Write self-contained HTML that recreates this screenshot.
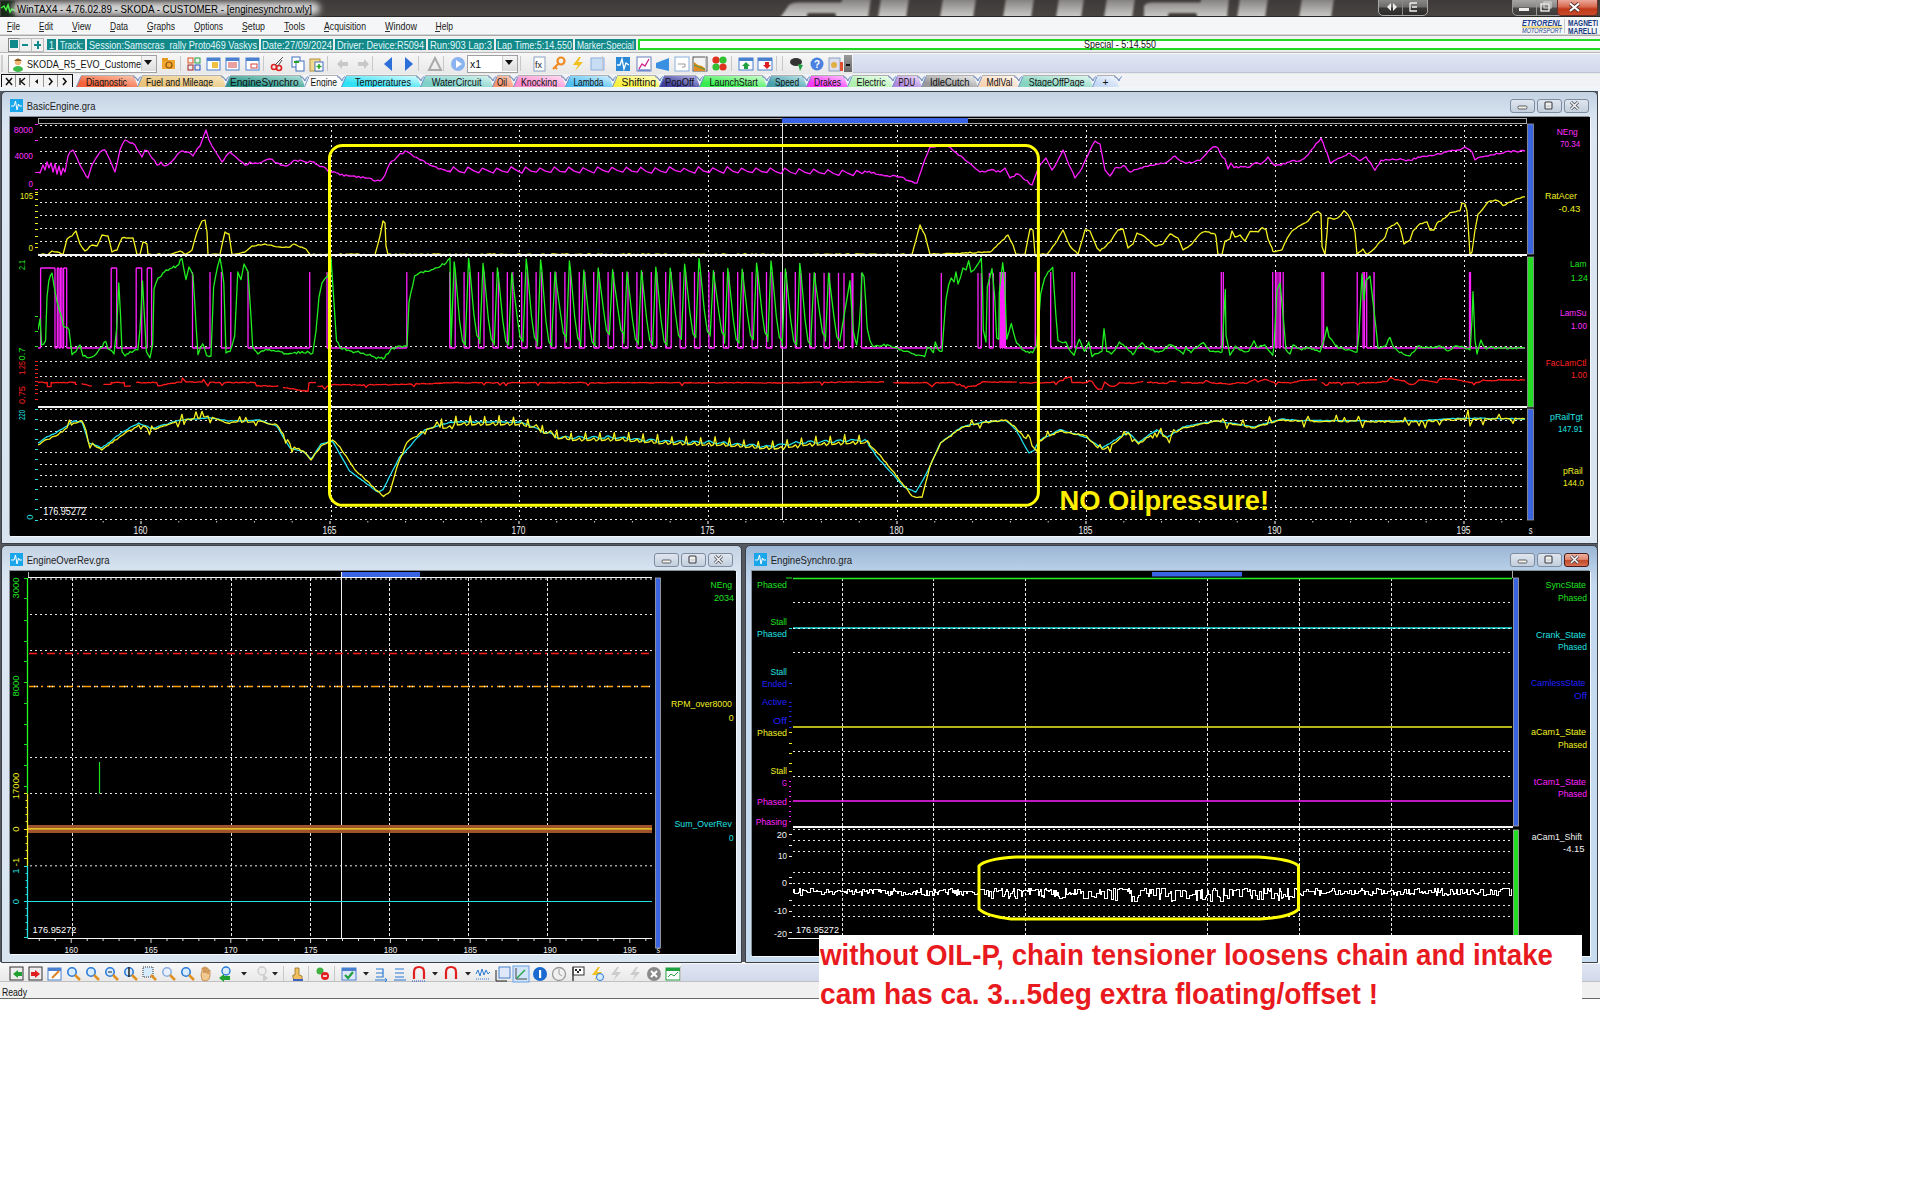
<!DOCTYPE html><html><head><meta charset="utf-8"><style>
html,body{margin:0;padding:0;background:#fff;width:1920px;height:1200px;overflow:hidden;}
body{position:relative;font-family:"Liberation Sans",sans-serif;}
.t{position:absolute;white-space:nowrap;line-height:1.15;}
.ann{position:absolute;white-space:nowrap;line-height:1.2;}
svg{overflow:visible;}
svg text{font-family:"Liberation Sans",sans-serif;}
</style></head><body>
<div style="position:absolute;left:0px;top:91px;width:1598px;height:871px;background:#55595f;"></div>
<div style="position:absolute;left:0px;top:0px;width:1600px;height:17px;background:linear-gradient(#3e3a39,#4a4644);"></div>
<svg style="position:absolute;left:0;top:0" width="1600" height="17"><defs><linearGradient id="lg" x1="0" y1="0" x2="0" y2="1"><stop offset="0" stop-color="#7c7a78"/><stop offset="0.5" stop-color="#a8a6a4"/><stop offset="1" stop-color="#cfcfcd"/></linearGradient><filter id="bl" x="-5%" y="-50%" width="110%" height="200%"><feGaussianBlur stdDeviation="1.3"/></filter></defs><g filter="url(#bl)" fill="url(#lg)"><path d="M780,18 L789,5 Q792,2.5 798,2.5 L841,2.5 L843,-2 L871,-2 L868,18 Z"/><path d="M881,-2 L909,-2 L906,18 L878,18 Z"/><path d="M943,-2 L976,-2 L973,18 L940,18 Z"/><path d="M1006,-2 L1034,-2 L1031,18 L1003,18 Z"/><path d="M1059,-2 L1084,-2 L1081,18 L1056,18 Z"/><path d="M1107,-2 L1135,-2 L1132,18 L1104,18 Z"/><path d="M1240,-2 L1268,-2 L1265,18 L1237,18 Z"/><path d="M1302,-2 L1334,-2 L1331,18 L1299,18 Z"/><path d="M1144,18 L1144,6 Q1146,2.5 1152,2.5 L1200,2.5 L1202,-2 L1229,-2 L1227,18 Z"/></g><g fill="#3f3b39" filter="url(#bl)"><rect x="807" y="13" width="29" height="6" rx="2"/><rect x="1168" y="13" width="29" height="6" rx="2"/></g></svg>
<div style="position:absolute;left:0px;top:16px;width:1600px;height:1px;background:#2a2827"></div>
<svg style="position:absolute;left:1px;top:1px" width="14" height="15"><rect width="14" height="15" fill="#1a2a1a"/><polyline points="0,7 3,5 5,9 7,4 9,11 11,8 14,10" fill="none" stroke="#3cf03c" stroke-width="1.5"/></svg>
<div style="position:absolute;left:12px;top:2px;width:308px;height:13px;border-radius:7px;background:rgba(238,238,238,0.85);filter:blur(3px);"></div>
<svg style="position:absolute;left:0;top:0" width="1" height="1"><text x="17" y="12.5" textLength="295" lengthAdjust="spacingAndGlyphs" fill="#000" font-size="11.5" font-weight="normal" font-family="Liberation Sans" >WinTAX4 - 4.76.02.89 - SKODA - CUSTOMER - [enginesynchro.wly]</text></svg>
<div style="position:absolute;left:1378px;top:-1px;width:48px;height:15px;border:1px solid #a8a8a8;border-radius:0 0 5px 5px;background:linear-gradient(#8a8886,#6e6c6a 45%,#3a3837 55%,#2e2c2b);"></div>
<div style="position:absolute;left:1402px;top:0px;width:1px;height:15px;background:#8a8a8a"></div>
<svg style="position:absolute;left:1384px;top:2px" width="40" height="11"><path d="M3,5 L7,1 L7,9 Z M13,5 L9,1 L9,9 Z" fill="#eee"/><path d="M26,1 H33 M26,1 V9 H33 M28,5 H33" stroke="#eee" stroke-width="1.3" fill="none"/></svg>
<div style="position:absolute;left:1512px;top:-1px;width:48px;height:15px;border:1px solid #9a9a9a;border-radius:0 0 0 5px;background:linear-gradient(#a8a6a4,#8a8886 45%,#4a4846 55%,#3e3c3b);"></div>
<div style="position:absolute;left:1536px;top:0px;width:1px;height:15px;background:#999"></div>
<div style="position:absolute;left:1557px;top:-1px;width:39px;height:15px;border:1px solid #6a3028;border-radius:0 0 4px 4px;background:linear-gradient(#eaa89a,#d86a50 45%,#c03818 60%,#c84a2a);"></div>
<svg style="position:absolute;left:1512px;top:0" width="88" height="15"><rect x="7" y="8" width="10" height="3" fill="#eee"/><rect x="29" y="4" width="8" height="7" fill="none" stroke="#eee" stroke-width="1.4"/><rect x="32" y="2" width="7" height="6" fill="none" stroke="#ddd" stroke-width="1"/><path d="M58,3.5 L67,11 M67,3.5 L58,11" stroke="#4a2a2a" stroke-width="3.6"/><path d="M58,3.5 L67,11 M67,3.5 L58,11" stroke="#fff" stroke-width="2.2"/></svg>
<div style="position:absolute;left:0px;top:17px;width:1600px;height:18px;background:#f5f6f7;border-bottom:1px solid #d6d6d6;box-sizing:border-box;"></div>
<svg style="position:absolute;left:0;top:0" width="1" height="1"><text x="7" y="30" textLength="13" lengthAdjust="spacingAndGlyphs" fill="#1a1a1a" font-size="11" font-weight="normal" font-family="Liberation Sans" >File</text></svg>
<div style="position:absolute;left:7px;top:31px;width:5px;height:1px;background:#333"></div>
<svg style="position:absolute;left:0;top:0" width="1" height="1"><text x="39" y="30" textLength="14" lengthAdjust="spacingAndGlyphs" fill="#1a1a1a" font-size="11" font-weight="normal" font-family="Liberation Sans" >Edit</text></svg>
<div style="position:absolute;left:39px;top:31px;width:5px;height:1px;background:#333"></div>
<svg style="position:absolute;left:0;top:0" width="1" height="1"><text x="72" y="30" textLength="19" lengthAdjust="spacingAndGlyphs" fill="#1a1a1a" font-size="11" font-weight="normal" font-family="Liberation Sans" >View</text></svg>
<div style="position:absolute;left:72px;top:31px;width:5px;height:1px;background:#333"></div>
<svg style="position:absolute;left:0;top:0" width="1" height="1"><text x="110" y="30" textLength="18" lengthAdjust="spacingAndGlyphs" fill="#1a1a1a" font-size="11" font-weight="normal" font-family="Liberation Sans" >Data</text></svg>
<div style="position:absolute;left:110px;top:31px;width:5px;height:1px;background:#333"></div>
<svg style="position:absolute;left:0;top:0" width="1" height="1"><text x="147" y="30" textLength="28" lengthAdjust="spacingAndGlyphs" fill="#1a1a1a" font-size="11" font-weight="normal" font-family="Liberation Sans" >Graphs</text></svg>
<div style="position:absolute;left:147px;top:31px;width:5px;height:1px;background:#333"></div>
<svg style="position:absolute;left:0;top:0" width="1" height="1"><text x="194" y="30" textLength="29" lengthAdjust="spacingAndGlyphs" fill="#1a1a1a" font-size="11" font-weight="normal" font-family="Liberation Sans" >Options</text></svg>
<div style="position:absolute;left:194px;top:31px;width:5px;height:1px;background:#333"></div>
<svg style="position:absolute;left:0;top:0" width="1" height="1"><text x="242" y="30" textLength="23" lengthAdjust="spacingAndGlyphs" fill="#1a1a1a" font-size="11" font-weight="normal" font-family="Liberation Sans" >Setup</text></svg>
<div style="position:absolute;left:242px;top:31px;width:5px;height:1px;background:#333"></div>
<svg style="position:absolute;left:0;top:0" width="1" height="1"><text x="284" y="30" textLength="21" lengthAdjust="spacingAndGlyphs" fill="#1a1a1a" font-size="11" font-weight="normal" font-family="Liberation Sans" >Tools</text></svg>
<div style="position:absolute;left:284px;top:31px;width:5px;height:1px;background:#333"></div>
<svg style="position:absolute;left:0;top:0" width="1" height="1"><text x="324" y="30" textLength="42" lengthAdjust="spacingAndGlyphs" fill="#1a1a1a" font-size="11" font-weight="normal" font-family="Liberation Sans" >Acquisition</text></svg>
<div style="position:absolute;left:324px;top:31px;width:5px;height:1px;background:#333"></div>
<svg style="position:absolute;left:0;top:0" width="1" height="1"><text x="385" y="30" textLength="32" lengthAdjust="spacingAndGlyphs" fill="#1a1a1a" font-size="11" font-weight="normal" font-family="Liberation Sans" >Window</text></svg>
<div style="position:absolute;left:385px;top:31px;width:5px;height:1px;background:#333"></div>
<svg style="position:absolute;left:0;top:0" width="1" height="1"><text x="435.5" y="30" textLength="17.5" lengthAdjust="spacingAndGlyphs" fill="#1a1a1a" font-size="11" font-weight="normal" font-family="Liberation Sans" >Help</text></svg>
<div style="position:absolute;left:435px;top:31px;width:5px;height:1px;background:#333"></div>
<svg style="position:absolute;left:1518px;top:18px;overflow:hidden" width="82" height="16"><text x="4" y="8" textLength="40" lengthAdjust="spacingAndGlyphs" font-family="Liberation Sans" font-weight="bold" font-style="italic" font-size="8.5" fill="#1d4090">ETRORENL</text><rect x="4" y="8.5" width="40" height="1" fill="#e8c020"/><text x="4" y="15" textLength="40" lengthAdjust="spacingAndGlyphs" font-family="Liberation Sans" font-style="italic" font-size="6.5" fill="#1d4090">MOTORSPORT</text><rect x="46" y="1" width="1" height="14" fill="#c8c8c8"/><text x="50" y="8" textLength="30" lengthAdjust="spacingAndGlyphs" font-family="Liberation Sans" font-weight="bold" font-size="8.5" fill="#153a80">MAGNETI</text><text x="50" y="15.5" textLength="29" lengthAdjust="spacingAndGlyphs" font-family="Liberation Sans" font-weight="bold" font-size="8.5" fill="#153a80">MARELLI</text></svg>
<div style="position:absolute;left:0px;top:35px;width:1600px;height:18px;background:linear-gradient(#f4f4f4,#e9e9e9);"></div>
<div style="position:absolute;left:0px;top:35px;width:1600px;height:1px;background:#a8a8a8"></div>
<div style="position:absolute;left:0px;top:52px;width:1600px;height:1px;background:#b8b8b8"></div>
<div style="position:absolute;left:8px;top:38px;width:10px;height:12px;border:1px solid #888;background:#f4f4f4;"></div>
<div style="position:absolute;left:10px;top:40px;width:8px;height:8px;background:#0e8a8a"></div>
<div style="position:absolute;left:19px;top:38px;width:11px;height:12px;border:1px solid #bbb;background:#f0f0f0;"></div>
<div style="position:absolute;left:31px;top:38px;width:11px;height:12px;border:1px solid #bbb;background:#f0f0f0;"></div>
<div style="position:absolute;left:22px;top:44px;width:6px;height:2px;background:#0e8a8a"></div>
<div style="position:absolute;left:34px;top:44px;width:7px;height:2px;background:#0e8a8a"></div>
<div style="position:absolute;left:37px;top:41px;width:2px;height:8px;background:#0e8a8a"></div>
<div style="position:absolute;left:47px;top:39px;width:9px;height:11px;background:#13898a"></div>
<svg style="position:absolute;left:0;top:0" width="1" height="1"><text x="49" y="48.5" textLength="5" lengthAdjust="spacingAndGlyphs" fill="#e0f8f8" font-size="10.5" font-weight="normal" font-family="Liberation Sans" xml:space="preserve">1</text></svg>
<div style="position:absolute;left:58px;top:39px;width:27px;height:11px;background:#13898a"></div>
<svg style="position:absolute;left:0;top:0" width="1" height="1"><text x="60" y="48.5" textLength="23" lengthAdjust="spacingAndGlyphs" fill="#e0f8f8" font-size="10.5" font-weight="normal" font-family="Liberation Sans" xml:space="preserve">Track:</text></svg>
<div style="position:absolute;left:87px;top:39px;width:172px;height:11px;background:#13898a"></div>
<svg style="position:absolute;left:0;top:0" width="1" height="1"><text x="89" y="48.5" textLength="168" lengthAdjust="spacingAndGlyphs" fill="#e0f8f8" font-size="10.5" font-weight="normal" font-family="Liberation Sans" xml:space="preserve">Session:Samscras  rally Proto469 Vaskys</text></svg>
<div style="position:absolute;left:261px;top:39px;width:72px;height:11px;background:#13898a"></div>
<svg style="position:absolute;left:0;top:0" width="1" height="1"><text x="262" y="48.5" textLength="70" lengthAdjust="spacingAndGlyphs" fill="#e0f8f8" font-size="10.5" font-weight="normal" font-family="Liberation Sans" xml:space="preserve">Date:27/09/2024</text></svg>
<div style="position:absolute;left:335px;top:39px;width:91px;height:11px;background:#13898a"></div>
<svg style="position:absolute;left:0;top:0" width="1" height="1"><text x="337" y="48.5" textLength="87" lengthAdjust="spacingAndGlyphs" fill="#e0f8f8" font-size="10.5" font-weight="normal" font-family="Liberation Sans" xml:space="preserve">Driver: Device:R5094</text></svg>
<div style="position:absolute;left:428px;top:39px;width:66px;height:11px;background:#13898a"></div>
<svg style="position:absolute;left:0;top:0" width="1" height="1"><text x="430" y="48.5" textLength="62" lengthAdjust="spacingAndGlyphs" fill="#e0f8f8" font-size="10.5" font-weight="normal" font-family="Liberation Sans" xml:space="preserve">Run:903 Lap:3</text></svg>
<div style="position:absolute;left:496px;top:39px;width:77px;height:11px;background:#13898a"></div>
<svg style="position:absolute;left:0;top:0" width="1" height="1"><text x="497" y="48.5" textLength="75" lengthAdjust="spacingAndGlyphs" fill="#e0f8f8" font-size="10.5" font-weight="normal" font-family="Liberation Sans" xml:space="preserve">Lap Time:5:14.550</text></svg>
<div style="position:absolute;left:575px;top:39px;width:61px;height:11px;background:#13898a"></div>
<svg style="position:absolute;left:0;top:0" width="1" height="1"><text x="577" y="48.5" textLength="57" lengthAdjust="spacingAndGlyphs" fill="#e0f8f8" font-size="10.5" font-weight="normal" font-family="Liberation Sans" xml:space="preserve">Marker:Special</text></svg>
<div style="position:absolute;left:638px;top:39px;width:962px;height:10px;border-top:2px solid #22d822;border-bottom:2px solid #22d822;border-left:2px solid #22d822;background:#fff;box-sizing:border-box;height:11px;"></div>
<svg style="position:absolute;left:0;top:0" width="1" height="1"><text x="1084" y="47.5" textLength="72" lengthAdjust="spacingAndGlyphs" fill="#111" font-size="10.5" font-weight="normal" font-family="Liberation Sans" >Special - 5:14.550</text></svg>
<div style="position:absolute;left:0px;top:53px;width:1600px;height:21px;background:linear-gradient(#f7f7f7,#e8e8e8);"></div>
<div style="position:absolute;left:853px;top:54px;width:747px;height:19px;background:linear-gradient(#dfe5f2,#d2d9ea);border-bottom:1px solid #bcc4d6;box-sizing:border-box;"></div>
<div style="position:absolute;left:1px;top:55px;width:2px;height:17px;background:#cfcfcf"></div>
<div style="position:absolute;left:8px;top:55px;width:147px;height:16px;border:1px solid #a0a0a0;background:#fff;"></div>
<div style="position:absolute;left:141px;top:56px;width:14px;height:15px;border-left:1px solid #ccc;background:linear-gradient(#f5f5f5,#ddd);"></div>
<svg style="position:absolute;left:143px;top:60px" width="10" height="6"><path d="M1,0 L9,0 L5,5 Z" fill="#111"/></svg>
<svg style="position:absolute;left:12px;top:57px" width="12" height="14"><circle cx="6" cy="5" r="3.2" fill="#f0b878"/><path d="M2,4 Q6,-1 10,4 Z" fill="#8a5a20"/><ellipse cx="6" cy="12" rx="5" ry="3" fill="#3cb84a"/></svg>
<svg style="position:absolute;left:0;top:0" width="1" height="1"><text x="27" y="68" textLength="114" lengthAdjust="spacingAndGlyphs" fill="#111" font-size="11" font-weight="normal" font-family="Liberation Sans" >SKODA_R5_EVO_Custome</text></svg>
<svg style="position:absolute;left:161px;top:56px" width="16" height="16"><rect x="1" y="4" width="13" height="9" fill="#f0a830"/><rect x="1" y="2" width="6" height="3" fill="#e89a20"/><circle cx="8" cy="9" r="3" fill="none" stroke="#905010" stroke-width="1.2"/></svg>
<svg style="position:absolute;left:187px;top:56px" width="16" height="16"><rect x="1" y="2" width="5" height="5" fill="none" stroke="#e05020"/><rect x="8" y="2" width="5" height="5" fill="none" stroke="#20a040"/><rect x="1" y="9" width="5" height="5" fill="none" stroke="#a02020"/><rect x="8" y="9" width="5" height="5" fill="none" stroke="#2050c0"/></svg>
<svg style="position:absolute;left:206px;top:56px" width="16" height="16"><rect x="1" y="2" width="13" height="12" fill="#fff" stroke="#4a80d0"/><rect x="1" y="2" width="13" height="3" fill="#4a80d0"/><rect x="6" y="6" width="6" height="6" fill="#f0c040"/></svg>
<svg style="position:absolute;left:225px;top:56px" width="16" height="16"><rect x="1" y="2" width="13" height="12" fill="#fff" stroke="#4a80d0"/><rect x="1" y="2" width="13" height="3" fill="#4a80d0"/><path d="M3,7 H12 M3,9 H12 M3,11 H12" stroke="#d04040"/></svg>
<svg style="position:absolute;left:245px;top:56px" width="16" height="16"><rect x="1" y="2" width="13" height="12" fill="#fff" stroke="#4a80d0"/><rect x="1" y="2" width="13" height="3" fill="#4a80d0"/><rect x="6" y="8" width="6" height="4" fill="none" stroke="#d04040"/></svg>
<svg style="position:absolute;left:270px;top:56px" width="16" height="16"><circle cx="4" cy="11" r="2.5" fill="none" stroke="#e02020" stroke-width="1.6"/><circle cx="9" cy="12" r="2.5" fill="none" stroke="#e02020" stroke-width="1.6"/><path d="M5,9 L13,1 M8,10 L12,4" stroke="#555"/></svg>
<svg style="position:absolute;left:290px;top:56px" width="16" height="16"><rect x="2" y="1" width="8" height="10" fill="#fff" stroke="#4070c0"/><rect x="6" y="5" width="8" height="10" fill="#fff" stroke="#4070c0"/><path d="M4,6 L9,6" stroke="#20a020" stroke-width="2"/></svg>
<svg style="position:absolute;left:309px;top:56px" width="16" height="16"><rect x="1" y="3" width="10" height="12" fill="#f0d890" stroke="#b09040"/><rect x="6" y="6" width="8" height="9" fill="#fff" stroke="#4070c0"/><path d="M10,8 V13 M7.5,10.5 H12.5" stroke="#20a020" stroke-width="1.5"/></svg>
<svg style="position:absolute;left:335px;top:56px" width="16" height="16"><path d="M2,8 L7,3 V6 H13 V10 H7 V13 Z" fill="#c8c8c8"/></svg>
<svg style="position:absolute;left:355px;top:56px" width="16" height="16"><path d="M14,8 L9,3 V6 H3 V10 H9 V13 Z" fill="#c8c8c8"/></svg>
<svg style="position:absolute;left:381px;top:56px" width="16" height="16"><path d="M3,8 L11,1 V15 Z" fill="#2b6fd8"/></svg>
<svg style="position:absolute;left:400px;top:56px" width="16" height="16"><path d="M13,8 L5,1 V15 Z" fill="#2b6fd8"/></svg>
<svg style="position:absolute;left:427px;top:56px" width="16" height="16"><path d="M8,2 L14,14 H2 Z" fill="none" stroke="#aaa" stroke-width="2"/></svg>
<svg style="position:absolute;left:450px;top:56px" width="16" height="16"><circle cx="8" cy="8" r="7" fill="#8ab4f0"/><path d="M6,4 L12,8 L6,12 Z" fill="#fff"/></svg>
<svg style="position:absolute;left:532px;top:56px" width="16" height="16"><rect x="2" y="1" width="11" height="14" fill="#fff" stroke="#8aa0c0"/><text x="3" y="12" font-size="9" font-family="Liberation Serif" fill="#222">fx</text></svg>
<svg style="position:absolute;left:551px;top:56px" width="16" height="16"><circle cx="10" cy="5" r="3.5" fill="none" stroke="#f08a20" stroke-width="2.2"/><path d="M8,7 L2,13 M4,11 L6,13" stroke="#f08a20" stroke-width="2"/></svg>
<svg style="position:absolute;left:570px;top:56px" width="16" height="16"><path d="M9,1 L3,9 H8 L5,15 L13,6 H8 L11,1 Z" fill="#f0c020"/></svg>
<svg style="position:absolute;left:590px;top:56px" width="16" height="16"><rect x="1" y="2" width="13" height="12" fill="#c8dcf4" stroke="#8ab0e0"/></svg>
<svg style="position:absolute;left:615px;top:56px" width="16" height="16"><rect x="1" y="1" width="14" height="14" fill="#2a8ad8"/><polyline points="2,9 5,9 7,3 9,13 11,7 14,9" fill="none" stroke="#fff" stroke-width="1.3"/></svg>
<svg style="position:absolute;left:636px;top:56px" width="16" height="16"><rect x="1" y="1" width="14" height="14" fill="#fff" stroke="#6a80c0"/><polyline points="3,13 6,8 9,10 13,3" fill="none" stroke="#d02090" stroke-width="1.3"/><path d="M2,14 H14" stroke="#3050c0"/></svg>
<svg style="position:absolute;left:655px;top:56px" width="16" height="16"><path d="M1,7 L14,2 V15 L1,12 Z" fill="#3a90e0"/></svg>
<svg style="position:absolute;left:674px;top:56px" width="16" height="16"><rect x="1" y="1" width="14" height="14" fill="#fff" stroke="#8ab0e0"/><path d="M4,8 H11 V11 H8" fill="none" stroke="#999"/></svg>
<svg style="position:absolute;left:692px;top:56px" width="16" height="16"><rect x="1" y="1" width="14" height="14" fill="#f4f4f4" stroke="#555"/><path d="M2,6 L6,9 L10,10 L14,13 V15 H2 Z" fill="#e08a20"/><path d="M2,9 L14,14" stroke="#40a040"/></svg>
<svg style="position:absolute;left:712px;top:56px" width="16" height="16"><circle cx="4" cy="4" r="3.6" fill="#e03020"/><circle cx="11" cy="4" r="3.6" fill="#30c030"/><circle cx="4" cy="11" r="3.6" fill="#30c030"/><circle cx="11" cy="11" r="3.6" fill="#e03020"/></svg>
<svg style="position:absolute;left:738px;top:56px" width="16" height="16"><rect x="1" y="2" width="14" height="12" fill="#fff" stroke="#4a80d0"/><rect x="1" y="2" width="14" height="3" fill="#4a80d0"/><path d="M8,6 L12,10 H10 V13 H6 V10 H4 Z" fill="#20a040"/></svg>
<svg style="position:absolute;left:757px;top:56px" width="16" height="16"><rect x="1" y="2" width="14" height="12" fill="#fff" stroke="#4a80d0"/><rect x="1" y="2" width="14" height="3" fill="#4a80d0"/><path d="M10,13 L6,9 H8 V6 H12 V9 H14 Z" fill="#e02020"/></svg>
<svg style="position:absolute;left:789px;top:56px" width="16" height="16"><ellipse cx="7" cy="6" rx="6" ry="4" fill="#333"/><path d="M9,8 L14,9 L11,15 Z" fill="#20a040"/></svg>
<svg style="position:absolute;left:809px;top:56px" width="16" height="16"><circle cx="8" cy="8" r="6.5" fill="#4a80e0"/><text x="5" y="12" font-size="10" font-family="Liberation Sans" font-weight="bold" fill="#fff">?</text></svg>
<svg style="position:absolute;left:828px;top:56px" width="16" height="16"><rect x="1" y="2" width="11" height="13" fill="#dde" stroke="#8aa0c0"/><circle cx="6" cy="9" r="3" fill="#e0b040"/><rect x="12" y="6" width="3" height="9" fill="#e05030"/></svg>
<div style="position:absolute;left:180px;top:56px;width:1px;height:15px;background:#c8c8c8"></div>
<div style="position:absolute;left:263px;top:56px;width:1px;height:15px;background:#c8c8c8"></div>
<div style="position:absolute;left:327px;top:56px;width:1px;height:15px;background:#c8c8c8"></div>
<div style="position:absolute;left:372px;top:56px;width:1px;height:15px;background:#c8c8c8"></div>
<div style="position:absolute;left:418px;top:56px;width:1px;height:15px;background:#c8c8c8"></div>
<div style="position:absolute;left:443px;top:56px;width:1px;height:15px;background:#c8c8c8"></div>
<div style="position:absolute;left:520px;top:56px;width:1px;height:15px;background:#c8c8c8"></div>
<div style="position:absolute;left:602px;top:56px;width:1px;height:15px;background:#c8c8c8"></div>
<div style="position:absolute;left:705px;top:56px;width:1px;height:15px;background:#c8c8c8"></div>
<div style="position:absolute;left:731px;top:56px;width:1px;height:15px;background:#c8c8c8"></div>
<div style="position:absolute;left:776px;top:56px;width:1px;height:15px;background:#c8c8c8"></div>
<div style="position:absolute;left:782px;top:56px;width:1px;height:15px;background:#c8c8c8"></div>
<div style="position:absolute;left:467px;top:55px;width:49px;height:16px;border:1px solid #a0a0a0;background:#fff;"></div>
<div style="position:absolute;left:502px;top:56px;width:14px;height:15px;background:linear-gradient(#f5f5f5,#ddd);border-left:1px solid #ccc;"></div>
<svg style="position:absolute;left:504px;top:60px" width="10" height="6"><path d="M1,0 L9,0 L5,5 Z" fill="#111"/></svg>
<svg style="position:absolute;left:0;top:0" width="1" height="1"><text x="470" y="68" textLength="11" lengthAdjust="spacingAndGlyphs" fill="#111" font-size="11" font-weight="normal" font-family="Liberation Sans" >x1</text></svg>
<div style="position:absolute;left:844px;top:55px;width:8px;height:17px;background:linear-gradient(#9a9a9a,#6a6a6a)"></div>
<div style="position:absolute;left:846px;top:64px;width:4px;height:2px;background:#111"></div>
<div style="position:absolute;left:0px;top:74px;width:1600px;height:17px;background:#f0f2f5;"></div>
<div style="position:absolute;left:1px;top:74px;width:70px;height:14px;border:1px solid #111;border-bottom:2px solid #111;background:#f4f4f4;"></div>
<div style="position:absolute;left:15px;top:75px;width:1px;height:14px;background:#999"></div>
<div style="position:absolute;left:29px;top:75px;width:1px;height:14px;background:#999"></div>
<div style="position:absolute;left:43px;top:75px;width:1px;height:14px;background:#999"></div>
<div style="position:absolute;left:57px;top:75px;width:1px;height:14px;background:#999"></div>
<svg style="position:absolute;left:2px;top:75px" width="70" height="14"><path d="M4,3 L10,10 M10,3 L4,10" stroke="#111" stroke-width="1.5"/><path d="M18,3 V10 M23,3 L19,6.5 L23,10" stroke="#111" stroke-width="1.4" fill="none"/><path d="M36,4 L33,6.5 L36,9 Z" fill="#111"/><path d="M47,3 L50,6.5 L47,10" stroke="#111" stroke-width="1.6" fill="none"/><path d="M61,3 L64,6.5 L61,10" stroke="#111" stroke-width="1.6" fill="none"/></svg>
<svg style="position:absolute;left:0;top:0" width="1600" height="100"><defs><linearGradient id="tg0" x1="0" x2="1" y1="1" y2="0"><stop offset="0" stop-color="#f4643c"/><stop offset="0.25" stop-color="#f4643c"/><stop offset="1" stop-color="#fcc8b0"/></linearGradient><linearGradient id="tg1" x1="0" x2="1" y1="1" y2="0"><stop offset="0" stop-color="#e8c47c"/><stop offset="0.25" stop-color="#e8c47c"/><stop offset="1" stop-color="#f8e8c0"/></linearGradient><linearGradient id="tg2" x1="0" x2="1" y1="1" y2="0"><stop offset="0" stop-color="#2a968a"/><stop offset="0.25" stop-color="#2a968a"/><stop offset="1" stop-color="#b4e4dc"/></linearGradient><linearGradient id="tg3" x1="0" x2="1" y1="1" y2="0"><stop offset="0" stop-color="#f8f8f8"/><stop offset="0.25" stop-color="#f8f8f8"/><stop offset="1" stop-color="#ffffff"/></linearGradient><linearGradient id="tg4" x1="0" x2="1" y1="1" y2="0"><stop offset="0" stop-color="#30e0f4"/><stop offset="0.25" stop-color="#30e0f4"/><stop offset="1" stop-color="#d8fcff"/></linearGradient><linearGradient id="tg5" x1="0" x2="1" y1="1" y2="0"><stop offset="0" stop-color="#7ed0c8"/><stop offset="0.25" stop-color="#7ed0c8"/><stop offset="1" stop-color="#d8f4f0"/></linearGradient><linearGradient id="tg6" x1="0" x2="1" y1="1" y2="0"><stop offset="0" stop-color="#f49470"/><stop offset="0.25" stop-color="#f49470"/><stop offset="1" stop-color="#fcd4c0"/></linearGradient><linearGradient id="tg7" x1="0" x2="1" y1="1" y2="0"><stop offset="0" stop-color="#fa8cd0"/><stop offset="0.25" stop-color="#fa8cd0"/><stop offset="1" stop-color="#ffe0f4"/></linearGradient><linearGradient id="tg8" x1="0" x2="1" y1="1" y2="0"><stop offset="0" stop-color="#50c0f4"/><stop offset="0.25" stop-color="#50c0f4"/><stop offset="1" stop-color="#d4f0ff"/></linearGradient><linearGradient id="tg9" x1="0" x2="1" y1="1" y2="0"><stop offset="0" stop-color="#f8f040"/><stop offset="0.25" stop-color="#f8f040"/><stop offset="1" stop-color="#ffffd0"/></linearGradient><linearGradient id="tg10" x1="0" x2="1" y1="1" y2="0"><stop offset="0" stop-color="#40409c"/><stop offset="0.25" stop-color="#40409c"/><stop offset="1" stop-color="#b8b8ec"/></linearGradient><linearGradient id="tg11" x1="0" x2="1" y1="1" y2="0"><stop offset="0" stop-color="#38ec50"/><stop offset="0.25" stop-color="#38ec50"/><stop offset="1" stop-color="#d4ffd4"/></linearGradient><linearGradient id="tg12" x1="0" x2="1" y1="1" y2="0"><stop offset="0" stop-color="#48a0ac"/><stop offset="0.25" stop-color="#48a0ac"/><stop offset="1" stop-color="#c4e8ec"/></linearGradient><linearGradient id="tg13" x1="0" x2="1" y1="1" y2="0"><stop offset="0" stop-color="#f438f4"/><stop offset="0.25" stop-color="#f438f4"/><stop offset="1" stop-color="#ffc8ff"/></linearGradient><linearGradient id="tg14" x1="0" x2="1" y1="1" y2="0"><stop offset="0" stop-color="#b0f0b0"/><stop offset="0.25" stop-color="#b0f0b0"/><stop offset="1" stop-color="#f0fff0"/></linearGradient><linearGradient id="tg15" x1="0" x2="1" y1="1" y2="0"><stop offset="0" stop-color="#b088dc"/><stop offset="0.25" stop-color="#b088dc"/><stop offset="1" stop-color="#f0e0fc"/></linearGradient><linearGradient id="tg16" x1="0" x2="1" y1="1" y2="0"><stop offset="0" stop-color="#989898"/><stop offset="0.25" stop-color="#989898"/><stop offset="1" stop-color="#f0f0f0"/></linearGradient><linearGradient id="tg17" x1="0" x2="1" y1="1" y2="0"><stop offset="0" stop-color="#f8d4b4"/><stop offset="0.25" stop-color="#f8d4b4"/><stop offset="1" stop-color="#fffaf4"/></linearGradient><linearGradient id="tg18" x1="0" x2="1" y1="1" y2="0"><stop offset="0" stop-color="#84d4c0"/><stop offset="0.25" stop-color="#84d4c0"/><stop offset="1" stop-color="#e4f8f0"/></linearGradient><linearGradient id="tg19" x1="0" x2="1" y1="1" y2="0"><stop offset="0" stop-color="#c4d8f4"/><stop offset="0.25" stop-color="#c4d8f4"/><stop offset="1" stop-color="#f4f8ff"/></linearGradient></defs><path d="M76,87 L81,76 L134,76 L138,87 Z" fill="url(#tg0)"/><path d="M81,75.5 L134,75.5 L138,80" stroke="#b0b0b0" stroke-width="1" fill="none"/><path d="M76.5,87 L81,76.5" stroke="#6a90c8" stroke-width="0.9" fill="none"/><path d="M133,76.5 Q136,77 138,81 M138,81 Q139,77 141,76.5" stroke="#5a80c0" stroke-width="0.9" fill="none"/><text x="86" y="86" textLength="41" lengthAdjust="spacingAndGlyphs" font-size="10.5" fill="#111" font-weight="normal">Diagnostic</text><path d="M137,87 L142,76 L222,76 L226,87 Z" fill="url(#tg1)"/><path d="M142,75.5 L222,75.5 L226,80" stroke="#b0b0b0" stroke-width="1" fill="none"/><path d="M137.5,87 L142,76.5" stroke="#6a90c8" stroke-width="0.9" fill="none"/><path d="M221,76.5 Q224,77 226,81 M226,81 Q227,77 229,76.5" stroke="#5a80c0" stroke-width="0.9" fill="none"/><text x="146" y="86" textLength="67" lengthAdjust="spacingAndGlyphs" font-size="10.5" fill="#111" font-weight="normal">Fuel and Mileage</text><path d="M225,87 L230,76 L301,76 L305,87 Z" fill="url(#tg2)"/><path d="M230,75.5 L301,75.5 L305,80" stroke="#b0b0b0" stroke-width="1" fill="none"/><path d="M225.5,87 L230,76.5" stroke="#6a90c8" stroke-width="0.9" fill="none"/><path d="M300,76.5 Q303,77 305,81 M305,81 Q306,77 308,76.5" stroke="#5a80c0" stroke-width="0.9" fill="none"/><text x="230" y="86" textLength="68.60000000000002" lengthAdjust="spacingAndGlyphs" font-size="10.5" fill="#111" font-weight="normal">EngineSynchro</text><path d="M304,87 L309,76 L338,76 L342,87 Z" fill="url(#tg3)"/><path d="M309,75.5 L338,75.5 L342,80" stroke="#b0b0b0" stroke-width="1" fill="none"/><path d="M304.5,87 L309,76.5" stroke="#6a90c8" stroke-width="0.9" fill="none"/><path d="M337,76.5 Q340,77 342,81 M342,81 Q343,77 345,76.5" stroke="#5a80c0" stroke-width="0.9" fill="none"/><text x="310.6" y="86" textLength="26.399999999999977" lengthAdjust="spacingAndGlyphs" font-size="10.5" fill="#111" font-weight="normal">Engine</text><path d="M341,87 L346,76 L417,76 L421,87 Z" fill="url(#tg4)"/><path d="M346,75.5 L417,75.5 L421,80" stroke="#b0b0b0" stroke-width="1" fill="none"/><path d="M341.5,87 L346,76.5" stroke="#6a90c8" stroke-width="0.9" fill="none"/><path d="M416,76.5 Q419,77 421,81 M421,81 Q422,77 424,76.5" stroke="#5a80c0" stroke-width="0.9" fill="none"/><text x="355" y="86" textLength="56" lengthAdjust="spacingAndGlyphs" font-size="10.5" fill="#111" font-weight="normal">Temperatures</text><path d="M420,87 L425,76 L489,76 L493,87 Z" fill="url(#tg5)"/><path d="M425,75.5 L489,75.5 L493,80" stroke="#b0b0b0" stroke-width="1" fill="none"/><path d="M420.5,87 L425,76.5" stroke="#6a90c8" stroke-width="0.9" fill="none"/><path d="M488,76.5 Q491,77 493,81 M493,81 Q494,77 496,76.5" stroke="#5a80c0" stroke-width="0.9" fill="none"/><text x="431.7" y="86" textLength="49.80000000000001" lengthAdjust="spacingAndGlyphs" font-size="10.5" fill="#111" font-weight="normal">WaterCircuit</text><path d="M492,87 L497,76 L510,76 L514,87 Z" fill="url(#tg6)"/><path d="M497,75.5 L510,75.5 L514,80" stroke="#b0b0b0" stroke-width="1" fill="none"/><path d="M492.5,87 L497,76.5" stroke="#6a90c8" stroke-width="0.9" fill="none"/><path d="M509,76.5 Q512,77 514,81 M514,81 Q515,77 517,76.5" stroke="#5a80c0" stroke-width="0.9" fill="none"/><text x="497" y="86" textLength="10" lengthAdjust="spacingAndGlyphs" font-size="10.5" fill="#111" font-weight="normal">Oil</text><path d="M513,87 L518,76 L562,76 L566,87 Z" fill="url(#tg7)"/><path d="M518,75.5 L562,75.5 L566,80" stroke="#b0b0b0" stroke-width="1" fill="none"/><path d="M513.5,87 L518,76.5" stroke="#6a90c8" stroke-width="0.9" fill="none"/><path d="M561,76.5 Q564,77 566,81 M566,81 Q567,77 569,76.5" stroke="#5a80c0" stroke-width="0.9" fill="none"/><text x="521" y="86" textLength="36" lengthAdjust="spacingAndGlyphs" font-size="10.5" fill="#111" font-weight="normal">Knocking</text><path d="M565,87 L570,76 L609,76 L613,87 Z" fill="url(#tg8)"/><path d="M570,75.5 L609,75.5 L613,80" stroke="#b0b0b0" stroke-width="1" fill="none"/><path d="M565.5,87 L570,76.5" stroke="#6a90c8" stroke-width="0.9" fill="none"/><path d="M608,76.5 Q611,77 613,81 M613,81 Q614,77 616,76.5" stroke="#5a80c0" stroke-width="0.9" fill="none"/><text x="573.4" y="86" textLength="30.100000000000023" lengthAdjust="spacingAndGlyphs" font-size="10.5" fill="#111" font-weight="normal">Lambda</text><path d="M612,87 L617,76 L656,76 L660,87 Z" fill="url(#tg9)"/><path d="M617,75.5 L656,75.5 L660,80" stroke="#b0b0b0" stroke-width="1" fill="none"/><path d="M612.5,87 L617,76.5" stroke="#6a90c8" stroke-width="0.9" fill="none"/><path d="M655,76.5 Q658,77 660,81 M660,81 Q661,77 663,76.5" stroke="#5a80c0" stroke-width="0.9" fill="none"/><text x="621.5" y="86" textLength="34.5" lengthAdjust="spacingAndGlyphs" font-size="10.5" fill="#111" font-weight="normal">Shifting</text><path d="M659,87 L664,76 L696,76 L700,87 Z" fill="url(#tg10)"/><path d="M664,75.5 L696,75.5 L700,80" stroke="#b0b0b0" stroke-width="1" fill="none"/><path d="M659.5,87 L664,76.5" stroke="#6a90c8" stroke-width="0.9" fill="none"/><path d="M695,76.5 Q698,77 700,81 M700,81 Q701,77 703,76.5" stroke="#5a80c0" stroke-width="0.9" fill="none"/><text x="665" y="86" textLength="29" lengthAdjust="spacingAndGlyphs" font-size="10.5" fill="#111" font-weight="normal">PopOff</text><path d="M699,87 L704,76 L763,76 L767,87 Z" fill="url(#tg11)"/><path d="M704,75.5 L763,75.5 L767,80" stroke="#b0b0b0" stroke-width="1" fill="none"/><path d="M699.5,87 L704,76.5" stroke="#6a90c8" stroke-width="0.9" fill="none"/><path d="M762,76.5 Q765,77 767,81 M767,81 Q768,77 770,76.5" stroke="#5a80c0" stroke-width="0.9" fill="none"/><text x="709.6" y="86" textLength="48.10000000000002" lengthAdjust="spacingAndGlyphs" font-size="10.5" fill="#111" font-weight="normal">LaunchStart</text><path d="M766,87 L771,76 L803,76 L807,87 Z" fill="url(#tg12)"/><path d="M771,75.5 L803,75.5 L807,80" stroke="#b0b0b0" stroke-width="1" fill="none"/><path d="M766.5,87 L771,76.5" stroke="#6a90c8" stroke-width="0.9" fill="none"/><path d="M802,76.5 Q805,77 807,81 M807,81 Q808,77 810,76.5" stroke="#5a80c0" stroke-width="0.9" fill="none"/><text x="775" y="86" textLength="24" lengthAdjust="spacingAndGlyphs" font-size="10.5" fill="#111" font-weight="normal">Speed</text><path d="M806,87 L811,76 L844,76 L848,87 Z" fill="url(#tg13)"/><path d="M811,75.5 L844,75.5 L848,80" stroke="#b0b0b0" stroke-width="1" fill="none"/><path d="M806.5,87 L811,76.5" stroke="#6a90c8" stroke-width="0.9" fill="none"/><path d="M843,76.5 Q846,77 848,81 M848,81 Q849,77 851,76.5" stroke="#5a80c0" stroke-width="0.9" fill="none"/><text x="814" y="86" textLength="27" lengthAdjust="spacingAndGlyphs" font-size="10.5" fill="#111" font-weight="normal">Drakes</text><path d="M847,87 L852,76 L889,76 L893,87 Z" fill="url(#tg14)"/><path d="M852,75.5 L889,75.5 L893,80" stroke="#b0b0b0" stroke-width="1" fill="none"/><path d="M847.5,87 L852,76.5" stroke="#6a90c8" stroke-width="0.9" fill="none"/><path d="M888,76.5 Q891,77 893,81 M893,81 Q894,77 896,76.5" stroke="#5a80c0" stroke-width="0.9" fill="none"/><text x="856.5" y="86" textLength="29.200000000000045" lengthAdjust="spacingAndGlyphs" font-size="10.5" fill="#111" font-weight="normal">Electric</text><path d="M892,87 L897,76 L918,76 L922,87 Z" fill="url(#tg15)"/><path d="M897,75.5 L918,75.5 L922,80" stroke="#b0b0b0" stroke-width="1" fill="none"/><path d="M892.5,87 L897,76.5" stroke="#6a90c8" stroke-width="0.9" fill="none"/><path d="M917,76.5 Q920,77 922,81 M922,81 Q923,77 925,76.5" stroke="#5a80c0" stroke-width="0.9" fill="none"/><text x="898.6" y="86" textLength="16.399999999999977" lengthAdjust="spacingAndGlyphs" font-size="10.5" fill="#111" font-weight="normal">PDU</text><path d="M921,87 L926,76 L974,76 L978,87 Z" fill="url(#tg16)"/><path d="M926,75.5 L974,75.5 L978,80" stroke="#b0b0b0" stroke-width="1" fill="none"/><path d="M921.5,87 L926,76.5" stroke="#6a90c8" stroke-width="0.9" fill="none"/><path d="M973,76.5 Q976,77 978,81 M978,81 Q979,77 981,76.5" stroke="#5a80c0" stroke-width="0.9" fill="none"/><text x="930" y="86" textLength="39.5" lengthAdjust="spacingAndGlyphs" font-size="10.5" fill="#111" font-weight="normal">IdleCutch</text><path d="M977,87 L982,76 L1015,76 L1019,87 Z" fill="url(#tg17)"/><path d="M982,75.5 L1015,75.5 L1019,80" stroke="#b0b0b0" stroke-width="1" fill="none"/><path d="M977.5,87 L982,76.5" stroke="#6a90c8" stroke-width="0.9" fill="none"/><path d="M1014,76.5 Q1017,77 1019,81 M1019,81 Q1020,77 1022,76.5" stroke="#5a80c0" stroke-width="0.9" fill="none"/><text x="986.6" y="86" textLength="25.799999999999955" lengthAdjust="spacingAndGlyphs" font-size="10.5" fill="#111" font-weight="normal">MdlVal</text><path d="M1018,87 L1023,76 L1089,76 L1093,87 Z" fill="url(#tg18)"/><path d="M1023,75.5 L1089,75.5 L1093,80" stroke="#b0b0b0" stroke-width="1" fill="none"/><path d="M1018.5,87 L1023,76.5" stroke="#6a90c8" stroke-width="0.9" fill="none"/><path d="M1088,76.5 Q1091,77 1093,81 M1093,81 Q1094,77 1096,76.5" stroke="#5a80c0" stroke-width="0.9" fill="none"/><text x="1028.7" y="86" textLength="55.899999999999864" lengthAdjust="spacingAndGlyphs" font-size="10.5" fill="#111" font-weight="normal">StageOffPage</text><path d="M1092,87 L1097,76 L1115,76 L1119,87 Z" fill="url(#tg19)"/><path d="M1097,75.5 L1115,75.5 L1119,80" stroke="#b0b0b0" stroke-width="1" fill="none"/><path d="M1092.5,87 L1097,76.5" stroke="#6a90c8" stroke-width="0.9" fill="none"/><path d="M1114,76.5 Q1117,77 1119,81 M1119,81 Q1120,77 1122,76.5" stroke="#5a80c0" stroke-width="0.9" fill="none"/><text x="1102.6" y="86" textLength="6.0" lengthAdjust="spacingAndGlyphs" font-size="10.5" fill="#111" font-weight="normal">+</text></svg>
<div style="position:absolute;left:0px;top:87px;width:1600px;height:4px;background:linear-gradient(#f4f7fa,#e8f0f8)"></div>
<div style="position:absolute;left:1px;top:91px;width:1597px;height:453px;box-sizing:border-box;border:1px solid #3c4048;border-radius:5px 5px 0 0;background:linear-gradient(#c3d2e2,#d6e2ef 22px,#dbe6f2 40px,#d9e4f1);"></div>
<svg style="position:absolute;left:10px;top:99px" width="13" height="13"><rect width="13" height="13" fill="#1aa6ea"/><polyline points="1,7 4,7 5.5,2 7,11 8.5,5 9.5,7 12,7" fill="none" stroke="#fff" stroke-width="1"/></svg>
<svg style="position:absolute;left:0;top:0" width="1" height="1"><text x="26.7" y="110" textLength="68.7" lengthAdjust="spacingAndGlyphs" fill="#222" font-size="11" font-weight="normal" font-family="Liberation Sans" >BasicEngine.gra</text></svg>
<div style="position:absolute;left:1510px;top:99px;width:25px;height:14px;box-sizing:border-box;border:1px solid #7f8b9e;border-radius:3px;background:linear-gradient(#dfe6ef,#c3cfdd);"></div>
<div style="position:absolute;left:1537px;top:99px;width:25px;height:14px;box-sizing:border-box;border:1px solid #7f8b9e;border-radius:3px;background:linear-gradient(#dfe6ef,#c3cfdd);"></div>
<div style="position:absolute;left:1564px;top:99px;width:25px;height:14px;box-sizing:border-box;border:1px solid #7f8b9e;border-radius:3px;background:linear-gradient(#dfe6ef,#c3cfdd);"></div>
<svg style="position:absolute;left:1510px;top:99px" width="80" height="13"><rect x="8" y="7" width="9" height="3" rx="1.2" fill="#f4f0e8" stroke="#3a3f4a" stroke-width="0.8"/><rect x="35" y="3" width="7" height="7" rx="1" fill="#f4f0e8" stroke="#3a3f4a" stroke-width="1.1"/><rect x="36.5" y="6" width="4" height="2.5" fill="#cfd6de"/><path d="M61,3 L68,10 M68,3 L61,10" stroke="#3a3f4a" stroke-width="3"/><path d="M61,3 L68,10 M68,3 L61,10" stroke="#f8f8f8" stroke-width="1.6"/></svg>
<div style="position:absolute;left:10px;top:117px;width:1580px;height:419px;background:#000;box-shadow:-1px -1px 0 #8a9098, 1px 1px 0 #f4f8fc;"></div>
<div style="position:absolute;left:1px;top:545px;width:741px;height:418px;box-sizing:border-box;border:1px solid #3c4048;border-radius:5px 5px 0 0;background:linear-gradient(#c3d2e2,#d6e2ef 22px,#dbe6f2 40px,#d9e4f1);"></div>
<svg style="position:absolute;left:10px;top:553px" width="13" height="13"><rect width="13" height="13" fill="#1aa6ea"/><polyline points="1,7 4,7 5.5,2 7,11 8.5,5 9.5,7 12,7" fill="none" stroke="#fff" stroke-width="1"/></svg>
<svg style="position:absolute;left:0;top:0" width="1" height="1"><text x="26.7" y="564" textLength="82.9" lengthAdjust="spacingAndGlyphs" fill="#222" font-size="11" font-weight="normal" font-family="Liberation Sans" >EngineOverRev.gra</text></svg>
<div style="position:absolute;left:654px;top:553px;width:25px;height:14px;box-sizing:border-box;border:1px solid #7f8b9e;border-radius:3px;background:linear-gradient(#dfe6ef,#c3cfdd);"></div>
<div style="position:absolute;left:681px;top:553px;width:25px;height:14px;box-sizing:border-box;border:1px solid #7f8b9e;border-radius:3px;background:linear-gradient(#dfe6ef,#c3cfdd);"></div>
<div style="position:absolute;left:708px;top:553px;width:25px;height:14px;box-sizing:border-box;border:1px solid #7f8b9e;border-radius:3px;background:linear-gradient(#dfe6ef,#c3cfdd);"></div>
<svg style="position:absolute;left:654px;top:553px" width="80" height="13"><rect x="8" y="7" width="9" height="3" rx="1.2" fill="#f4f0e8" stroke="#3a3f4a" stroke-width="0.8"/><rect x="35" y="3" width="7" height="7" rx="1" fill="#f4f0e8" stroke="#3a3f4a" stroke-width="1.1"/><rect x="36.5" y="6" width="4" height="2.5" fill="#cfd6de"/><path d="M61,3 L68,10 M68,3 L61,10" stroke="#3a3f4a" stroke-width="3"/><path d="M61,3 L68,10 M68,3 L61,10" stroke="#f8f8f8" stroke-width="1.6"/></svg>
<div style="position:absolute;left:10px;top:571px;width:726px;height:383px;background:#000;box-shadow:-1px -1px 0 #8a9098, 1px 1px 0 #f4f8fc;"></div>
<div style="position:absolute;left:745px;top:545px;width:853px;height:418px;box-sizing:border-box;border:1px solid #3c4048;border-radius:5px 5px 0 0;background:linear-gradient(#9ab6d4,#b6cde6 22px,#c4d9ef 40px,#c8dcf0);"></div>
<svg style="position:absolute;left:754px;top:553px" width="13" height="13"><rect width="13" height="13" fill="#1aa6ea"/><polyline points="1,7 4,7 5.5,2 7,11 8.5,5 9.5,7 12,7" fill="none" stroke="#fff" stroke-width="1"/></svg>
<svg style="position:absolute;left:0;top:0" width="1" height="1"><text x="770.7" y="564" textLength="81.5" lengthAdjust="spacingAndGlyphs" fill="#222" font-size="11" font-weight="normal" font-family="Liberation Sans" >EngineSynchro.gra</text></svg>
<div style="position:absolute;left:1510px;top:553px;width:25px;height:14px;box-sizing:border-box;border:1px solid #7f8b9e;border-radius:3px;background:linear-gradient(#dfe6ef,#c3cfdd);"></div>
<div style="position:absolute;left:1537px;top:553px;width:25px;height:14px;box-sizing:border-box;border:1px solid #7f8b9e;border-radius:3px;background:linear-gradient(#dfe6ef,#c3cfdd);"></div>
<div style="position:absolute;left:1564px;top:553px;width:25px;height:14px;box-sizing:border-box;border:1px solid #4a1a1a;border-radius:3px;background:linear-gradient(#f0b0a0,#e08870 45%,#c04a2a 55%,#d87050);"></div>
<svg style="position:absolute;left:1510px;top:553px" width="80" height="13"><rect x="8" y="7" width="9" height="3" rx="1.2" fill="#f4f0e8" stroke="#3a3f4a" stroke-width="0.8"/><rect x="35" y="3" width="7" height="7" rx="1" fill="#f4f0e8" stroke="#3a3f4a" stroke-width="1.1"/><rect x="36.5" y="6" width="4" height="2.5" fill="#cfd6de"/><path d="M61,3 L68,10 M68,3 L61,10" stroke="#3a3f4a" stroke-width="3"/><path d="M61,3 L68,10 M68,3 L61,10" stroke="#f8f8f8" stroke-width="1.6"/></svg>
<div style="position:absolute;left:752px;top:571px;width:838px;height:385px;background:#000;box-shadow:-1px -1px 0 #8a9098, 1px 1px 0 #f4f8fc;"></div>
<svg style="position:absolute;left:0;top:0;pointer-events:none" width="1600" height="1000"><defs><clipPath id="cp1"><rect x="38" y="123" width="1489" height="399"/></clipPath><clipPath id="cp1a"><rect x="38" y="123" width="1489" height="131"/></clipPath><clipPath id="cp1b"><rect x="38" y="257" width="1489" height="149"/></clipPath><clipPath id="cp1c"><rect x="38" y="408" width="1489" height="113"/></clipPath><clipPath id="cp3a"><rect x="793" y="578" width="719" height="248"/></clipPath><clipPath id="cp3b"><rect x="793" y="829" width="719" height="110"/></clipPath></defs><rect x="38.5" y="118.5" width="1488" height="5" fill="none" stroke="#a8a8a8" stroke-width="1"/><rect x="782" y="118" width="186" height="5" fill="#3a64e6"/><path d="M40,125.5 H1525" stroke="#e8e8e8" stroke-width="1" stroke-dasharray="2 3"/><path d="M40,137.5 H1525" stroke="#e8e8e8" stroke-width="1" stroke-dasharray="2 3"/><path d="M40,151.5 H1525" stroke="#e8e8e8" stroke-width="1" stroke-dasharray="2 3"/><path d="M40,163.5 H1525" stroke="#e8e8e8" stroke-width="1" stroke-dasharray="2 3"/><path d="M40,189.5 H1525" stroke="#e8e8e8" stroke-width="1" stroke-dasharray="2 3"/><path d="M40,202.5 H1525" stroke="#e8e8e8" stroke-width="1" stroke-dasharray="2 3"/><path d="M40,215.5 H1525" stroke="#e8e8e8" stroke-width="1" stroke-dasharray="2 3"/><path d="M40,228.5 H1525" stroke="#e8e8e8" stroke-width="1" stroke-dasharray="2 3"/><path d="M40,241.5 H1525" stroke="#e8e8e8" stroke-width="1" stroke-dasharray="2 3"/><path d="M40,256.5 H1525" stroke="#e8e8e8" stroke-width="1" stroke-dasharray="2 3"/><path d="M40,346.5 H1525" stroke="#e8e8e8" stroke-width="1" stroke-dasharray="2 3"/><path d="M40,361.5 H1525" stroke="#e8e8e8" stroke-width="1" stroke-dasharray="2 3"/><path d="M40,376.5 H1525" stroke="#e8e8e8" stroke-width="1" stroke-dasharray="2 3"/><path d="M40,391.5 H1525" stroke="#e8e8e8" stroke-width="1" stroke-dasharray="2 3"/><path d="M40,409.5 H1525" stroke="#e8e8e8" stroke-width="1" stroke-dasharray="2 3"/><path d="M40,420.5 H1525" stroke="#e8e8e8" stroke-width="1" stroke-dasharray="2 3"/><path d="M40,431.5 H1525" stroke="#e8e8e8" stroke-width="1" stroke-dasharray="2 3"/><path d="M40,452.5 H1525" stroke="#e8e8e8" stroke-width="1" stroke-dasharray="2 3"/><path d="M40,464.5 H1525" stroke="#e8e8e8" stroke-width="1" stroke-dasharray="2 3"/><path d="M40,475.5 H1525" stroke="#e8e8e8" stroke-width="1" stroke-dasharray="2 3"/><path d="M40,486.5 H1525" stroke="#e8e8e8" stroke-width="1" stroke-dasharray="2 3"/><path d="M40,507.5 H1525" stroke="#e8e8e8" stroke-width="1" stroke-dasharray="2 3"/><path d="M40,519.5 H1525" stroke="#e8e8e8" stroke-width="1" stroke-dasharray="2 3"/><path d="M331.5,125 V520" stroke="#e8e8e8" stroke-width="1" stroke-dasharray="2 3"/><path d="M519.5,125 V520" stroke="#e8e8e8" stroke-width="1" stroke-dasharray="2 3"/><path d="M708.5,125 V520" stroke="#e8e8e8" stroke-width="1" stroke-dasharray="2 3"/><path d="M897.5,125 V520" stroke="#e8e8e8" stroke-width="1" stroke-dasharray="2 3"/><path d="M1086.5,125 V520" stroke="#e8e8e8" stroke-width="1" stroke-dasharray="2 3"/><path d="M1275.5,125 V520" stroke="#e8e8e8" stroke-width="1" stroke-dasharray="2 3"/><path d="M1464.5,125 V520" stroke="#e8e8e8" stroke-width="1" stroke-dasharray="2 3"/><rect x="38" y="254" width="1489" height="2" fill="#f4f4f4"/><rect x="38" y="406" width="1489" height="2" fill="#f4f4f4"/><path d="M782.5,123 V520" stroke="#e0e0e0" stroke-width="1"/><rect x="102.7" y="521" width="1" height="1.5" fill="#ccc"/><path d="M141.0,521 V524" stroke="#ddd" stroke-width="1.2"/><rect x="178.3" y="521" width="1" height="1.5" fill="#ccc"/><rect x="216.1" y="521" width="1" height="1.5" fill="#ccc"/><rect x="253.9" y="521" width="1" height="1.5" fill="#ccc"/><rect x="291.7" y="521" width="1" height="1.5" fill="#ccc"/><path d="M330.0,521 V524" stroke="#ddd" stroke-width="1.2"/><rect x="367.3" y="521" width="1" height="1.5" fill="#ccc"/><rect x="405.1" y="521" width="1" height="1.5" fill="#ccc"/><rect x="442.9" y="521" width="1" height="1.5" fill="#ccc"/><rect x="480.7" y="521" width="1" height="1.5" fill="#ccc"/><path d="M519.0,521 V524" stroke="#ddd" stroke-width="1.2"/><rect x="556.3" y="521" width="1" height="1.5" fill="#ccc"/><rect x="594.1" y="521" width="1" height="1.5" fill="#ccc"/><rect x="631.9" y="521" width="1" height="1.5" fill="#ccc"/><rect x="669.7" y="521" width="1" height="1.5" fill="#ccc"/><path d="M708.0,521 V524" stroke="#ddd" stroke-width="1.2"/><rect x="745.3" y="521" width="1" height="1.5" fill="#ccc"/><rect x="783.1" y="521" width="1" height="1.5" fill="#ccc"/><rect x="820.9" y="521" width="1" height="1.5" fill="#ccc"/><rect x="858.7" y="521" width="1" height="1.5" fill="#ccc"/><path d="M897.0,521 V524" stroke="#ddd" stroke-width="1.2"/><rect x="934.3" y="521" width="1" height="1.5" fill="#ccc"/><rect x="972.1" y="521" width="1" height="1.5" fill="#ccc"/><rect x="1009.9" y="521" width="1" height="1.5" fill="#ccc"/><rect x="1047.7" y="521" width="1" height="1.5" fill="#ccc"/><path d="M1086.0,521 V524" stroke="#ddd" stroke-width="1.2"/><rect x="1123.3" y="521" width="1" height="1.5" fill="#ccc"/><rect x="1161.1" y="521" width="1" height="1.5" fill="#ccc"/><rect x="1198.9" y="521" width="1" height="1.5" fill="#ccc"/><rect x="1236.7" y="521" width="1" height="1.5" fill="#ccc"/><path d="M1275.0,521 V524" stroke="#ddd" stroke-width="1.2"/><rect x="1312.3" y="521" width="1" height="1.5" fill="#ccc"/><rect x="1350.1" y="521" width="1" height="1.5" fill="#ccc"/><rect x="1387.9" y="521" width="1" height="1.5" fill="#ccc"/><rect x="1425.7" y="521" width="1" height="1.5" fill="#ccc"/><path d="M1464.0,521 V524" stroke="#ddd" stroke-width="1.2"/><rect x="1501.3" y="521" width="1" height="1.5" fill="#ccc"/><text x="133.5" y="534" textLength="14.0" lengthAdjust="spacingAndGlyphs" fill="#f0f0f0" font-size="10">160</text><text x="322.5" y="534" textLength="14.0" lengthAdjust="spacingAndGlyphs" fill="#f0f0f0" font-size="10">165</text><text x="511.5" y="534" textLength="14.0" lengthAdjust="spacingAndGlyphs" fill="#f0f0f0" font-size="10">170</text><text x="700.5" y="534" textLength="14.0" lengthAdjust="spacingAndGlyphs" fill="#f0f0f0" font-size="10">175</text><text x="889.5" y="534" textLength="14.0" lengthAdjust="spacingAndGlyphs" fill="#f0f0f0" font-size="10">180</text><text x="1078.5" y="534" textLength="14.0" lengthAdjust="spacingAndGlyphs" fill="#f0f0f0" font-size="10">185</text><text x="1267.5" y="534" textLength="14.0" lengthAdjust="spacingAndGlyphs" fill="#f0f0f0" font-size="10">190</text><text x="1456.5" y="534" textLength="14.0" lengthAdjust="spacingAndGlyphs" fill="#f0f0f0" font-size="10">195</text><text x="1528.7" y="534" textLength="3.8" lengthAdjust="spacingAndGlyphs" fill="#f0f0f0" font-size="10">s</text><rect x="35" y="124" width="3" height="1" fill="#ff20ff"/><rect x="35" y="140" width="3" height="1" fill="#ff20ff"/><rect x="35" y="172" width="3" height="1" fill="#ff20ff"/><rect x="35" y="189" width="3" height="1" fill="#ff20ff"/><rect x="35" y="192" width="3" height="1" fill="#f0f020"/><rect x="35" y="194" width="3" height="1" fill="#f0f020"/><rect x="35" y="199" width="3" height="1" fill="#f0f020"/><rect x="35" y="205" width="3" height="1" fill="#f0f020"/><rect x="35" y="211" width="3" height="1" fill="#f0f020"/><rect x="35" y="217" width="3" height="1" fill="#f0f020"/><rect x="35" y="223" width="3" height="1" fill="#f0f020"/><rect x="35" y="229" width="3" height="1" fill="#f0f020"/><rect x="35" y="236" width="3" height="1" fill="#f0f020"/><rect x="35" y="243" width="3" height="1" fill="#f0f020"/><rect x="35" y="247" width="3" height="1" fill="#f0f020"/><rect x="35" y="316" width="3" height="1" fill="#20e020"/><rect x="35" y="331" width="3" height="1" fill="#20e020"/><rect x="35" y="346" width="3" height="1" fill="#20e020"/><rect x="35" y="361" width="3" height="1" fill="#f02020"/><rect x="35" y="365" width="3" height="1" fill="#f02020"/><rect x="35" y="369" width="3" height="1" fill="#f02020"/><rect x="35" y="373" width="3" height="1" fill="#f02020"/><rect x="35" y="377" width="3" height="1" fill="#f02020"/><rect x="35" y="381" width="3" height="1" fill="#f02020"/><rect x="35" y="385" width="3" height="1" fill="#f02020"/><rect x="35" y="389" width="3" height="1" fill="#f02020"/><rect x="35" y="393" width="3" height="1" fill="#f02020"/><rect x="35" y="399" width="3" height="1" fill="#f02020"/><rect x="35" y="409" width="3" height="1" fill="#20e0e0"/><rect x="35" y="419" width="3" height="1" fill="#20e0e0"/><rect x="35" y="429" width="3" height="1" fill="#20e0e0"/><rect x="35" y="439" width="3" height="1" fill="#20e0e0"/><rect x="35" y="449" width="3" height="1" fill="#20e0e0"/><rect x="35" y="459" width="3" height="1" fill="#20e0e0"/><rect x="35" y="469" width="3" height="1" fill="#20e0e0"/><rect x="35" y="479" width="3" height="1" fill="#20e0e0"/><rect x="35" y="489" width="3" height="1" fill="#20e0e0"/><rect x="35" y="499" width="3" height="1" fill="#20e0e0"/><rect x="35" y="509" width="3" height="1" fill="#20e0e0"/><rect x="35" y="520" width="3" height="1" fill="#20e0e0"/><text x="13.75" y="132.5" textLength="19.2" lengthAdjust="spacingAndGlyphs" fill="#ff30ff" font-size="9.5">8000</text><text x="14.4" y="159" textLength="18.6" lengthAdjust="spacingAndGlyphs" fill="#ff30ff" font-size="9.5">4000</text><text x="28.5" y="186.5" textLength="4.5" lengthAdjust="spacingAndGlyphs" fill="#ff30ff" font-size="9.5">0</text><text x="20" y="198.5" textLength="13.0" lengthAdjust="spacingAndGlyphs" fill="#f0f020" font-size="9.5">105</text><text x="28.5" y="251" textLength="4.5" lengthAdjust="spacingAndGlyphs" fill="#f0f020" font-size="9.5">0</text><text transform="translate(24.5,265) rotate(-90)" fill="#20e020" font-size="9.5" x="-5.0" textLength="10" lengthAdjust="spacingAndGlyphs">2.1</text><text transform="translate(24.5,354) rotate(-90)" fill="#20e020" font-size="9.5" x="-6.4" textLength="12.8" lengthAdjust="spacingAndGlyphs">0.7</text><text transform="translate(24.5,368) rotate(-90)" fill="#ff2020" font-size="9.5" x="-6.8" textLength="13.6" lengthAdjust="spacingAndGlyphs">1.25</text><text transform="translate(24.5,395) rotate(-90)" fill="#ff2020" font-size="9.5" x="-9.0" textLength="18" lengthAdjust="spacingAndGlyphs">0.75</text><text transform="translate(24.5,415) rotate(-90)" fill="#20e0e0" font-size="9.5" x="-5.0" textLength="10" lengthAdjust="spacingAndGlyphs">220</text><text transform="translate(33,517) rotate(-90)" fill="#20e0e0" font-size="9.5" text-anchor="middle">0</text><rect x="1527.5" y="124" width="6" height="130" fill="#3a64e0" stroke="#9a9a9a" stroke-width="0.8"/><rect x="1527.5" y="257" width="6" height="150" fill="#22dd22" stroke="#9a9a9a" stroke-width="0.8"/><rect x="1527.5" y="409" width="6" height="111" fill="#3a64e0" stroke="#9a9a9a" stroke-width="0.8"/><text x="1556.7" y="134.7" textLength="21.1" lengthAdjust="spacingAndGlyphs" fill="#ff30ff" font-size="9.5">NEng</text><text x="1560" y="147" textLength="20.4" lengthAdjust="spacingAndGlyphs" fill="#ff30ff" font-size="9.5">70.34</text><text x="1545" y="198.6" textLength="32.0" lengthAdjust="spacingAndGlyphs" fill="#f0f020" font-size="9.5">RatAcer</text><text x="1558.5" y="211.7" textLength="21.9" lengthAdjust="spacingAndGlyphs" fill="#f0f020" font-size="9.5">-0.43</text><text x="1570" y="266.9" textLength="16.5" lengthAdjust="spacingAndGlyphs" fill="#20e020" font-size="9.5">Lam</text><text x="1570.7" y="280.9" textLength="17.3" lengthAdjust="spacingAndGlyphs" fill="#20e020" font-size="9.5">1.24</text><text x="1560" y="316.4" textLength="26.5" lengthAdjust="spacingAndGlyphs" fill="#ff30ff" font-size="9.5">LamSu</text><text x="1571" y="329" textLength="16.0" lengthAdjust="spacingAndGlyphs" fill="#ff30ff" font-size="9.5">1.00</text><text x="1545.7" y="365.6" textLength="40.8" lengthAdjust="spacingAndGlyphs" fill="#ff2020" font-size="9.5">FacLamCtl</text><text x="1571" y="378" textLength="16.0" lengthAdjust="spacingAndGlyphs" fill="#ff2020" font-size="9.5">1.00</text><text x="1550" y="419.5" textLength="32.8" lengthAdjust="spacingAndGlyphs" fill="#20e0e0" font-size="9.5">pRailTgt</text><text x="1558" y="432" textLength="24.8" lengthAdjust="spacingAndGlyphs" fill="#20e0e0" font-size="9.5">147.91</text><text x="1563" y="474" textLength="19.8" lengthAdjust="spacingAndGlyphs" fill="#f0f020" font-size="9.5">pRail</text><text x="1563" y="486.4" textLength="21.0" lengthAdjust="spacingAndGlyphs" fill="#f0f020" font-size="9.5">144.0</text><text x="43.2" y="514.7" textLength="42.8" lengthAdjust="spacingAndGlyphs" fill="#ffffff" font-size="10">176.95272</text><g clip-path="url(#cp1a)"><polyline points="38.0,172.0 40.0,173.0 43.0,165.0 45.0,170.0 47.0,162.0 49.0,168.0 51.0,163.0 53.0,172.0 55.0,164.0 57.0,174.0 59.0,166.0 61.0,175.0 63.0,168.0 65.0,172.0 68.0,156.0 70.0,152.0 73.0,150.0 76.0,156.0 78.0,160.4 80.0,165.0 82.0,168.6 84.0,172.0 86.0,176.0 88.0,178.0 90.0,171.4 92.0,165.0 94.0,161.5 96.0,158.0 98.0,155.2 100.0,152.0 102.5,150.2 105.0,150.0 107.5,155.0 110.0,160.0 112.5,166.3 115.0,172.0 117.5,161.7 120.0,150.0 122.5,144.0 125.0,140.0 127.5,141.0 130.0,143.0 132.5,143.0 135.0,145.0 137.0,149.2 139.0,152.0 142.0,157.0 145.0,150.0 148.0,151.0 150.0,155.0 152.0,158.0 154.5,160.4 157.0,165.0 159.0,164.7 161.0,162.0 163.0,165.1 165.0,166.0 167.5,164.9 170.0,163.0 172.5,160.8 175.0,158.0 177.5,154.2 180.0,152.0 182.3,150.8 184.7,152.1 187.0,152.0 189.0,152.3 191.0,153.9 193.0,156.0 195.3,152.0 197.7,148.2 200.0,146.0 203.0,138.0 206.0,130.0 209.0,140.0 212.0,146.0 214.5,149.9 217.0,154.0 219.5,157.9 222.0,162.0 224.0,159.8 226.0,156.0 228.0,154.0 230.0,152.0 232.3,154.3 234.7,156.0 237.0,158.0 239.0,160.1 241.0,161.4 243.0,162.7 245.0,165.0 247.5,164.7 250.0,162.0 252.5,163.7 255.0,163.0 257.3,163.5 259.7,162.8 262.0,162.0 264.0,160.8 266.0,159.9 268.0,159.2 270.0,159.0 272.3,159.3 274.7,162.3 277.0,163.0 279.0,163.5 281.0,165.3 283.0,165.0 285.0,166.0 287.3,165.8 289.7,164.2 292.0,162.0 294.0,160.3 296.0,160.3 298.0,161.5 300.0,160.0 302.5,160.9 305.0,162.0 307.5,162.7 310.0,161.0 312.0,161.8 314.0,162.0 316.0,164.3 318.0,165.0 320.0,166.7 322.0,166.4 324.0,167.0 326.0,168.6 328.0,171.1 330.0,171.0 332.0,172.4 334.0,171.7 336.0,172.8 338.0,173.2 340.0,175.0 342.0,174.1 344.0,176.1 346.0,174.8 348.0,175.9 350.0,176.0 352.1,176.2 354.3,175.8 356.4,177.4 358.6,176.3 360.7,177.8 362.9,176.8 365.0,178.0 367.1,178.2 369.3,178.2 371.4,178.7 373.6,180.8 375.7,180.9 377.9,180.1 380.0,181.0 382.5,178.9 385.0,175.0 387.5,168.3 390.0,163.0 392.0,161.0 394.0,160.4 396.0,158.1 398.0,156.0 400.3,153.4 402.7,153.8 405.0,151.0 407.3,151.6 409.7,153.1 412.0,155.0 414.0,156.9 416.0,157.1 418.0,158.3 420.0,160.0 422.0,160.0 424.0,161.0 426.0,163.2 428.0,163.4 430.0,165.2 432.0,166.0 434.2,166.4 436.3,167.2 438.5,169.1 440.7,168.6 442.8,169.5 445.0,170.0 447.5,171.4 450.0,171.0 450.0,172.1 453.5,166.9 459.0,171.5 464.4,172.9 467.9,167.1 473.4,170.6 478.8,172.8 482.3,168.2 487.8,170.6 493.2,173.0 496.7,168.1 502.2,171.1 507.6,172.4 511.1,166.9 516.6,170.4 522.0,173.1 525.5,167.1 531.0,171.2 536.4,172.2 539.9,168.0 545.4,171.1 550.8,172.3 554.3,167.0 559.8,171.3 565.2,172.0 568.7,167.1 574.2,171.1 579.6,172.9 583.1,167.7 588.6,170.7 594.0,173.0 597.5,167.0 603.0,170.4 608.4,172.2 611.9,167.4 617.4,170.5 622.8,172.1 626.3,167.3 631.8,171.1 637.2,172.1 640.7,167.3 646.2,171.5 651.6,173.1 655.1,167.8 660.6,171.2 666.0,172.6 669.5,166.9 675.0,170.4 680.4,171.9 683.9,168.2 689.4,171.2 694.8,173.1 698.3,166.7 703.8,171.2 709.2,172.5 712.7,167.9 718.2,170.8 723.6,173.1 727.1,166.8 732.6,171.1 738.0,172.8 741.5,168.1 747.0,171.3 752.4,172.7 755.9,168.0 761.4,171.5 766.8,172.5 770.3,168.0 775.8,171.7 781.2,173.6 784.7,168.0 790.2,172.0 795.6,174.0 799.1,168.7 804.6,172.2 810.0,173.9 813.5,169.1 819.0,172.6 824.4,173.9 827.9,169.7 833.4,173.5 838.8,175.3 842.3,170.2 847.8,173.2 853.2,175.6 856.7,170.4 862.2,173.7 865.0,171.0 867.1,172.2 869.3,171.3 871.4,173.2 873.6,172.3 875.7,174.1 877.9,174.4 880.0,175.0 882.0,174.7 884.0,175.8 886.0,175.6 888.0,176.0 890.0,176.8 892.0,175.7 894.0,175.4 896.0,176.2 898.0,177.2 900.0,177.0 902.0,177.2 904.0,177.9 906.0,180.2 908.0,180.5 910.0,181.0 912.3,181.6 914.7,183.1 917.0,183.0 919.0,176.7 921.0,171.3 923.0,165.0 925.3,158.4 927.7,152.9 930.0,147.0 932.0,147.2 934.0,147.0 936.0,146.6 938.0,145.2 940.0,145.0 942.0,145.6 944.0,145.4 946.0,145.5 948.0,146.6 950.0,147.0 952.1,149.5 954.3,151.4 956.4,153.0 958.6,155.3 960.7,155.8 962.9,157.5 965.0,160.0 967.1,161.6 969.3,163.0 971.4,164.6 973.6,166.7 975.7,168.8 977.9,170.3 980.0,172.0 982.0,171.2 984.0,171.9 986.0,171.8 988.0,170.3 990.0,170.0 992.0,169.5 994.0,169.9 996.0,171.9 998.0,170.7 1000.0,172.0 1002.5,170.4 1005.0,168.0 1007.5,173.1 1010.0,178.0 1012.0,176.6 1014.0,176.6 1016.0,174.0 1018.0,174.0 1020.3,175.3 1022.7,177.9 1025.0,180.0 1027.3,180.7 1029.7,184.0 1032.0,185.0 1034.0,179.5 1036.0,174.3 1038.0,169.1 1040.0,165.0 1042.0,162.9 1044.0,160.2 1046.0,158.0 1048.0,162.3 1050.0,166.3 1052.0,170.0 1054.0,167.3 1056.0,164.3 1058.0,160.0 1060.5,155.4 1063.0,150.0 1065.0,154.4 1067.0,160.0 1069.0,165.0 1071.0,168.7 1073.0,172.7 1075.0,178.0 1077.3,174.6 1079.7,171.8 1082.0,168.0 1084.0,163.0 1086.0,158.9 1088.0,155.0 1090.0,150.2 1092.0,146.0 1095.0,141.0 1097.5,142.9 1100.0,144.0 1102.5,157.0 1105.0,170.0 1107.5,173.2 1110.0,176.0 1112.5,172.5 1115.0,168.0 1117.0,167.4 1119.0,167.8 1121.0,167.6 1123.0,165.6 1125.0,166.0 1127.5,169.9 1130.0,172.0 1132.0,171.6 1134.0,169.7 1136.0,169.5 1138.0,169.1 1140.0,168.0 1142.0,168.2 1144.0,166.6 1146.0,166.3 1148.0,166.4 1150.0,165.0 1152.1,165.3 1154.3,165.3 1156.4,164.1 1158.6,164.2 1160.7,163.0 1162.9,163.7 1165.0,163.0 1167.0,162.2 1169.0,160.5 1171.0,159.2 1173.0,156.8 1175.0,156.0 1177.0,158.2 1179.0,159.8 1181.0,161.2 1183.0,161.7 1185.0,163.0 1187.1,163.2 1189.3,162.0 1191.4,162.8 1193.6,162.3 1195.7,161.0 1197.9,160.1 1200.0,160.6 1202.0,158.2 1204.0,156.2 1206.0,154.3 1208.0,151.5 1210.5,149.2 1213.0,147.0 1215.5,146.6 1218.0,148.0 1220.0,153.0 1222.0,156.7 1225.0,159.0 1228.0,169.0 1231.0,163.0 1234.0,167.7 1236.2,166.6 1238.5,167.8 1240.8,166.4 1243.0,166.8 1245.3,166.5 1247.7,167.5 1250.0,167.0 1252.5,164.3 1255.0,163.0 1257.0,162.6 1259.0,163.7 1261.0,164.0 1263.3,162.1 1265.7,160.0 1268.0,157.0 1270.5,160.9 1273.0,164.0 1275.0,165.4 1277.0,165.0 1279.0,164.7 1281.0,165.4 1283.0,163.4 1285.0,164.0 1287.3,162.3 1289.7,161.8 1292.0,160.6 1294.0,160.3 1296.0,161.3 1298.0,161.2 1300.0,161.0 1302.0,159.5 1304.0,158.7 1306.0,156.6 1308.0,155.0 1310.0,151.8 1312.0,149.1 1314.0,147.1 1316.0,143.6 1318.5,141.8 1321.0,138.4 1323.0,142.6 1325.0,148.7 1327.0,152.8 1330.0,162.5 1332.0,162.5 1334.0,160.7 1336.0,159.9 1338.0,158.3 1340.0,158.0 1342.0,157.2 1344.0,156.2 1346.0,155.5 1348.0,153.4 1350.0,153.4 1352.0,155.8 1354.0,156.3 1356.0,157.5 1358.0,159.8 1360.0,160.6 1362.0,159.4 1364.0,158.0 1366.0,156.7 1368.2,160.5 1370.5,162.6 1372.8,167.0 1375.0,170.3 1377.0,166.7 1379.0,164.3 1381.0,160.0 1383.2,160.8 1385.5,159.5 1387.8,159.9 1390.0,160.0 1392.0,159.0 1394.0,159.3 1396.0,159.8 1398.0,159.7 1400.0,158.6 1402.0,159.4 1404.0,159.8 1406.0,161.0 1408.0,159.9 1410.0,160.2 1412.0,160.3 1414.0,158.1 1416.0,158.9 1418.0,156.9 1420.0,157.3 1422.1,156.4 1424.3,156.1 1426.4,156.7 1428.6,155.6 1430.7,155.4 1432.9,155.6 1435.0,155.0 1437.5,153.7 1440.0,154.0 1442.0,153.9 1444.0,152.0 1446.0,152.2 1448.0,151.1 1450.0,151.0 1452.0,150.2 1454.0,150.7 1456.0,150.3 1458.0,150.0 1460.0,150.0 1462.5,148.3 1465.0,147.0 1467.3,148.7 1469.7,149.7 1472.0,152.0 1475.0,160.0 1477.5,157.9 1480.0,157.0 1482.0,156.9 1484.0,156.5 1486.0,155.9 1488.0,156.1 1490.0,155.0 1492.1,154.8 1494.3,154.9 1496.4,153.2 1498.6,153.8 1500.7,153.5 1502.9,153.2 1505.0,152.0 1507.0,151.4 1509.0,151.2 1511.0,152.2 1513.0,150.6 1515.0,151.0 1517.0,152.0 1519.0,151.8 1521.0,150.3 1523.0,150.5 1525.0,151.0" fill="none" stroke="#ff20ff" stroke-width="1.3" stroke-linejoin="round" /><polyline points="38.0,254.5 40.0,254.8 42.0,254.2 44.0,254.0 46.0,254.9 48.0,254.5 50.0,252.7 52.0,251.0 54.5,251.8 57.0,252.0 59.0,252.4 61.0,253.6 63.0,254.5 65.0,247.0 67.0,239.0 69.5,236.9 72.0,236.0 74.0,233.1 76.0,231.0 78.0,237.7 80.0,244.0 82.5,248.0 85.0,251.0 87.3,249.6 89.7,246.5 92.0,245.0 94.5,245.5 97.0,246.0 99.5,240.8 102.0,235.0 104.0,235.3 106.0,235.9 108.0,236.0 110.0,243.6 112.0,252.0 114.5,250.5 117.0,250.0 119.5,243.5 122.0,238.0 124.2,237.4 126.4,238.1 128.6,238.0 130.8,238.1 133.0,238.0 135.0,245.8 137.0,254.5 140.0,254.5 143.0,242.0 145.0,242.6 147.0,244.0 148.0,254.5 150.0,254.1 152.0,254.9 154.0,255.1 156.0,255.0 158.0,254.0 160.0,254.0 162.0,255.0 164.0,254.5 166.0,254.8 168.0,254.3 170.0,254.5 172.0,253.8 174.0,253.1 176.0,252.3 178.0,251.8 180.0,251.0 182.5,252.2 185.0,254.5 187.3,253.2 189.7,251.9 192.0,250.0 194.5,240.6 197.0,232.0 199.5,226.4 202.0,221.0 205.0,220.0 207.0,232.0 208.0,254.5 210.0,254.8 212.0,254.4 214.0,254.1 216.0,254.1 218.0,254.5 220.0,254.5 222.5,242.7 225.0,232.0 227.0,233.5 229.0,234.0 232.0,254.5 234.2,254.4 236.3,253.9 238.5,253.7 240.7,253.0 242.8,252.3 245.0,252.0 247.3,250.1 249.7,248.0 252.0,246.0 254.2,246.2 256.3,245.7 258.5,244.7 260.7,245.2 262.8,244.6 265.0,244.0 267.1,244.8 269.3,245.2 271.4,245.2 273.6,246.2 275.7,246.6 277.9,246.8 280.0,247.0 282.0,247.3 284.0,247.3 286.0,246.9 288.0,247.3 290.0,247.0 292.0,245.0 294.0,244.0 296.0,244.8 298.0,246.0 300.0,247.0 302.0,247.1 304.0,248.2 306.0,249.0 308.0,251.9 310.0,254.5 312.0,254.6 314.1,254.2 316.1,255.0 318.1,254.7 320.2,254.3 322.2,254.7 324.2,254.6 326.2,254.5 328.3,254.4 330.3,255.1 332.3,254.7 334.4,254.7 336.4,254.8 338.4,255.1 340.5,253.9 342.5,254.6 344.5,254.8 346.6,254.2 348.6,254.4 350.6,254.0 352.7,254.1 354.7,254.4 356.7,254.0 358.8,254.2 360.8,255.0 362.8,254.6 364.8,254.5 366.9,255.1 368.9,254.6 370.9,255.1 373.0,254.7 375.0,254.5 377.5,245.6 380.0,236.0 383.0,221.0 385.0,223.0 386.0,246.0 388.0,254.5 390.0,254.0 392.0,254.6 394.0,254.8 396.0,254.0 398.0,255.0 400.0,254.1 402.0,254.5 404.0,254.1 406.0,254.5 408.0,254.6 410.0,254.0 412.0,255.0 414.0,254.4 416.0,254.5 418.0,254.6 420.0,254.3 422.0,254.2 424.0,254.7 426.0,254.6 428.0,254.2 430.0,254.8 432.0,254.3 434.0,253.9 436.0,254.2 438.0,254.0 440.0,254.1 442.0,254.8 444.0,254.4 446.0,255.0 448.0,254.8 450.0,254.0 452.0,255.1 454.0,255.0 456.0,254.0 458.0,255.0 460.0,254.4 462.0,254.5 464.0,255.1 466.0,254.2 468.0,254.5 470.0,255.0 472.0,254.8 474.0,254.5 476.0,255.1 478.0,254.9 480.0,254.6 482.0,254.0 484.0,254.6 486.0,254.4 488.0,254.1 490.0,254.0 492.0,254.5 494.0,254.0 496.0,254.4 498.0,254.7 500.0,254.4 502.0,254.2 504.0,254.6 506.0,254.4 508.0,254.8 510.0,254.5 512.0,255.1 514.0,255.0 516.0,254.8 518.0,254.2 520.0,254.0 522.0,255.0 524.0,254.8 526.0,254.6 528.0,254.3 530.0,254.2 532.0,254.7 534.0,254.6 536.0,254.6 538.0,254.7 540.0,254.8 542.0,254.1 544.0,254.2 546.0,255.1 548.0,255.0 550.0,255.0 552.0,253.9 554.0,254.0 556.0,254.2 558.0,254.4 560.0,254.6 562.0,254.0 564.0,254.5 566.0,254.0 568.0,254.0 570.0,254.7 572.0,254.6 574.0,254.7 576.0,254.3 578.0,254.5 580.0,254.2 582.0,254.3 584.0,254.8 586.0,254.9 588.0,254.0 590.0,254.0 592.0,254.9 594.0,254.6 596.0,254.8 598.0,254.2 600.0,254.4 602.0,254.2 604.0,254.9 606.0,254.3 608.0,254.7 610.0,255.1 612.0,254.3 614.0,254.6 616.0,254.8 618.0,255.0 620.0,254.4 622.0,254.3 624.0,254.0 626.0,255.0 628.0,254.0 630.0,254.0 632.0,254.6 634.0,254.5 636.0,254.7 638.0,254.3 640.0,254.8 642.0,254.0 644.0,254.2 646.0,254.7 648.0,254.0 650.0,254.3 652.0,254.8 654.0,254.7 656.0,254.2 658.0,254.1 660.0,254.3 662.0,254.8 664.0,254.3 666.0,254.0 668.0,254.8 670.0,254.6 672.0,255.0 674.0,255.0 676.0,255.0 678.0,254.4 680.0,254.9 682.0,254.3 684.0,254.3 686.0,254.4 688.0,255.0 690.0,255.0 692.0,254.2 694.0,254.3 696.0,254.3 698.0,254.3 700.0,254.4 702.0,254.4 704.0,254.1 706.0,254.6 708.0,254.9 710.0,254.5 712.0,254.9 714.0,254.6 716.0,254.1 718.0,254.8 720.0,255.0 722.0,254.2 724.0,253.9 726.0,254.5 728.0,254.6 730.0,254.6 732.0,255.1 734.0,254.7 736.0,254.9 738.0,254.0 740.0,254.6 742.0,254.8 744.0,254.0 746.0,254.0 748.0,254.8 750.0,255.0 752.0,254.0 754.0,254.7 756.0,254.1 758.0,254.8 760.0,254.7 762.0,254.2 764.0,254.2 766.0,254.8 768.0,254.5 770.0,254.8 772.0,254.4 774.0,254.3 776.0,255.1 778.0,254.7 780.0,254.5 782.0,254.5 784.0,254.8 786.0,254.7 788.0,255.0 790.0,254.4 792.0,254.9 794.0,254.7 796.0,254.9 798.0,254.9 800.0,254.9 802.0,255.0 804.0,255.0 806.0,254.7 808.0,254.5 810.0,254.8 812.0,254.9 814.0,254.4 816.0,254.4 818.0,254.1 820.0,254.8 822.0,255.1 824.0,254.4 826.0,254.1 828.0,254.1 830.0,254.4 832.0,254.3 834.0,255.1 836.0,254.0 838.0,254.3 840.0,254.0 842.0,254.7 844.0,254.8 846.0,254.1 848.0,254.0 850.0,254.5 852.0,254.6 854.0,255.0 856.0,253.9 858.0,254.0 860.0,254.1 862.0,254.2 864.0,254.2 866.0,254.8 868.0,254.6 870.0,254.2 872.0,254.1 874.0,254.2 876.0,254.1 878.0,254.8 880.0,254.3 882.0,254.6 884.0,254.9 886.0,254.5 888.0,254.2 890.0,255.0 892.0,255.0 894.0,254.3 896.0,254.6 898.0,255.0 900.0,254.5 902.0,254.2 904.0,254.0 906.0,255.0 908.0,254.9 910.0,254.4 912.0,254.5 914.0,247.2 916.0,239.8 918.0,232.1 920.0,225.0 922.5,230.6 925.0,235.0 927.5,244.9 930.0,254.5 932.0,254.1 934.0,253.7 936.0,254.2 938.0,254.0 940.0,254.4 942.0,254.3 944.0,254.0 946.0,253.4 948.0,253.3 950.0,253.5 952.0,253.3 954.0,253.9 956.0,253.4 958.0,253.5 960.0,253.8 962.0,252.9 964.0,253.1 966.0,252.6 968.0,253.2 970.0,252.2 972.0,253.1 974.0,253.1 976.0,253.0 978.0,252.0 980.0,252.1 982.0,252.6 984.0,251.8 986.0,252.1 988.0,252.0 990.0,252.0 992.0,250.7 994.0,248.3 996.0,246.8 998.0,244.2 1000.0,242.9 1002.0,240.6 1004.0,239.3 1006.0,236.4 1008.0,235.0 1010.5,240.4 1013.0,245.0 1016.0,254.5 1018.2,254.2 1020.5,254.6 1022.8,254.5 1025.0,254.5 1027.5,241.3 1030.0,229.0 1033.0,230.0 1035.0,254.5 1037.0,254.9 1039.0,254.3 1041.0,254.3 1043.0,254.0 1045.0,254.3 1047.0,254.5 1049.0,251.8 1051.0,249.4 1053.0,246.2 1055.0,243.9 1057.0,241.0 1059.0,236.9 1061.0,233.5 1063.0,230.0 1065.3,235.3 1067.7,241.2 1070.0,246.0 1072.0,248.5 1074.0,250.4 1076.0,251.8 1078.0,254.5 1080.3,246.2 1082.7,238.4 1085.0,230.0 1087.5,230.2 1090.0,231.0 1092.3,236.7 1094.7,242.3 1097.0,248.0 1100.0,251.0 1102.0,248.6 1104.0,248.0 1106.0,246.0 1108.0,243.4 1110.0,242.0 1112.0,239.1 1114.0,235.7 1116.0,232.9 1118.0,230.0 1120.5,229.5 1123.0,229.0 1125.5,238.3 1128.0,248.0 1130.5,245.8 1133.0,244.0 1135.0,238.4 1137.0,233.0 1139.0,234.2 1141.0,234.7 1143.0,235.6 1145.0,237.0 1147.0,239.1 1149.0,240.4 1151.0,242.9 1153.0,244.3 1155.0,246.0 1157.0,245.8 1159.0,244.8 1161.0,244.9 1163.0,244.0 1165.3,240.2 1167.7,236.9 1170.0,234.0 1172.0,234.5 1174.0,236.2 1176.0,237.2 1178.0,238.0 1180.5,243.6 1183.0,250.0 1185.2,248.4 1187.5,247.4 1189.8,245.6 1192.0,244.0 1194.0,241.0 1196.0,238.7 1198.0,236.1 1200.0,234.0 1202.5,232.3 1205.0,231.5 1207.0,231.9 1209.0,232.0 1211.0,233.5 1213.0,233.4 1215.0,234.0 1216.0,237.0 1218.0,254.5 1220.0,254.5 1222.0,254.5 1225.0,241.0 1227.5,240.2 1230.0,239.0 1232.0,231.0 1235.0,237.0 1237.5,236.3 1240.0,235.0 1242.5,238.4 1245.0,241.0 1247.5,236.1 1250.0,231.5 1252.0,231.4 1254.0,231.6 1256.0,231.3 1258.0,232.0 1260.0,229.7 1262.0,227.6 1264.0,228.8 1266.0,229.6 1268.0,238.7 1270.0,243.8 1272.0,247.8 1273.0,251.7 1275.2,251.6 1277.5,250.9 1279.8,250.4 1282.0,249.8 1284.5,243.7 1287.0,238.7 1289.5,234.6 1292.0,231.0 1294.0,229.5 1296.0,228.5 1298.0,226.6 1300.0,225.7 1302.0,224.4 1304.0,223.4 1306.0,222.5 1308.0,221.0 1310.5,217.9 1313.0,214.0 1315.5,212.8 1318.0,211.4 1321.0,214.0 1322.0,246.5 1325.0,254.5 1327.0,233.5 1328.0,218.0 1330.3,217.9 1332.7,219.0 1335.0,219.0 1337.5,218.0 1340.0,216.0 1342.0,213.4 1344.0,210.7 1346.0,212.5 1348.0,214.6 1350.0,218.2 1352.0,221.8 1355.0,232.0 1357.0,254.5 1359.0,252.2 1361.0,251.1 1363.0,249.0 1365.0,252.3 1367.0,254.5 1369.3,252.7 1371.7,251.1 1374.0,249.0 1376.0,246.9 1378.0,244.0 1380.3,241.4 1382.7,240.1 1385.0,237.4 1388.0,228.0 1390.0,227.2 1392.0,225.6 1394.0,225.0 1397.0,222.4 1400.0,227.0 1402.0,235.0 1404.0,244.0 1406.0,242.4 1408.0,241.4 1410.0,240.0 1413.0,231.0 1415.3,228.8 1417.7,225.9 1420.0,223.7 1422.3,223.6 1424.7,222.3 1427.0,221.8 1430.0,230.0 1432.0,230.0 1434.0,230.0 1437.0,223.0 1439.0,221.3 1441.0,221.1 1443.0,218.8 1445.0,218.0 1447.5,215.8 1450.0,212.6 1452.0,212.3 1454.0,212.0 1456.0,211.6 1458.0,210.9 1460.0,210.8 1462.0,203.0 1465.0,204.0 1467.0,211.0 1468.0,223.0 1470.0,254.5 1472.0,252.0 1475.0,230.0 1478.0,214.3 1480.0,212.3 1482.0,210.0 1484.0,207.3 1486.0,204.6 1488.0,202.0 1490.3,200.9 1492.7,201.1 1495.0,200.0 1497.5,200.7 1500.0,202.0 1503.0,205.6 1505.3,204.9 1507.7,202.9 1510.0,202.0 1512.0,201.2 1514.0,200.7 1516.0,199.1 1518.0,198.6 1520.3,198.1 1522.7,196.9 1525.0,196.8" fill="none" stroke="#f4f020" stroke-width="1.3" stroke-linejoin="round" /></g><g clip-path="url(#cp1b)"><polyline points="38.0,382.5 40.3,382.1 42.6,382.2 44.9,382.9 47.2,382.5 47.4,386.7 51.0,386.7 51.2,382.5 53.2,382.9 55.2,382.6 57.2,382.3 59.2,382.7 61.2,382.7 63.2,382.4 65.3,382.6 67.3,382.8 69.3,382.1 71.3,382.2 73.3,382.5 75.3,382.5 75.5,384.4 76.9,384.4" fill="none" stroke="#ff1a1a" stroke-width="1.3" stroke-linejoin="round" /><polyline points="81.6,383.6 83.8,384.4 86.0,384.5 88.8,385.6 91.7,386.0" fill="none" stroke="#ff1a1a" stroke-width="1.3" stroke-linejoin="round" /><polyline points="103.4,384.4 105.9,384.4 108.5,384.3 111.0,384.4 111.2,382.5 113.4,382.9 115.6,382.3 117.8,382.1 120.0,382.7 122.1,382.9 124.3,382.5 124.5,386.0 126.6,386.2 128.7,386.1 130.8,386.0" fill="none" stroke="#ff1a1a" stroke-width="1.3" stroke-linejoin="round" /><polyline points="136.2,382.5 138.3,382.1 140.3,382.9 142.4,382.9 144.4,382.6 146.4,382.8 148.5,382.4 150.5,382.8 152.5,382.2 154.6,382.7 156.6,382.5 158.0,386.0 160.0,385.6 162.0,385.5 164.0,384.4 166.0,384.6 168.0,383.6 170.0,383.5 172.3,383.2 174.6,383.3 177.0,382.2 179.3,382.1 181.6,382.0 182.3,378.0 186.0,382.0 188.0,381.8 190.0,381.8 192.0,381.6 194.0,382.4 196.0,382.3 198.0,381.9 200.0,381.9 202.0,382.0 203.4,379.4 205.7,382.8 208.0,386.0 209.7,382.5 211.8,382.1 213.8,382.1 215.9,382.9 217.9,382.3 220.0,382.5 222.1,385.4 224.1,382.9 226.2,382.5 228.2,382.2 230.3,382.3 232.3,382.9 234.4,382.9 236.5,382.2 238.5,382.8 240.6,382.4 242.6,382.5 244.7,382.2 246.8,382.8 248.8,382.9 250.9,382.2 252.9,382.6 255.0,382.5 256.6,386.0 258.8,385.7 261.0,386.3 263.1,385.6 265.3,385.6 267.5,386.2 269.7,385.8 271.9,386.4 274.0,386.3 276.2,386.2 278.4,386.0" fill="none" stroke="#ff1a1a" stroke-width="1.3" stroke-linejoin="round" /><polyline points="283.0,387.5 285.1,387.8 287.2,387.9 289.2,388.5 291.3,388.8 293.4,388.7 295.5,389.5 297.6,390.0 299.7,390.2 301.8,390.8 303.8,390.5 305.9,390.8 308.0,391.4 309.0,382.8 311.3,382.3 313.7,382.6 316.0,382.5" fill="none" stroke="#ff1a1a" stroke-width="1.3" stroke-linejoin="round" /><polyline points="317.5,386.3 319.9,386.4 322.2,385.9 324.6,389.1 327.0,386.3 329.0,385.6 331.0,385.2 333.0,384.6 335.0,384.5 337.1,384.7 339.2,384.9 341.2,384.9 343.3,384.3 345.4,384.6 347.5,384.6 349.6,384.5 351.7,385.3 353.8,384.5 355.8,384.9 357.9,385.2 360.0,385.0 362.0,385.4 364.0,384.6 366.0,387.4 368.0,385.1 370.0,384.5 372.0,384.6 374.0,385.2 376.0,384.5 378.0,384.7 380.0,384.6 382.0,384.7 384.0,384.3 386.0,384.3 388.0,385.1 390.0,384.9 392.0,384.8 394.0,384.3 396.0,384.3 398.0,384.6 400.0,384.5 402.0,384.2 404.0,384.3 406.0,384.7 408.0,384.1 410.0,384.0 412.0,384.5 414.0,386.6 416.0,383.5 418.0,383.8 420.0,384.0 422.0,383.4 424.0,383.5 426.0,383.8 428.0,383.9 430.0,383.6 432.0,383.8 434.0,383.3 436.0,383.2 438.0,383.5 440.0,383.0 442.0,383.3 444.0,382.7 446.0,382.8 448.0,382.6 450.0,382.8 452.0,382.8 454.0,382.5 456.0,382.5 458.0,382.5 460.0,382.8 462.0,382.6 464.0,382.8 466.0,383.2 468.0,383.0 470.0,383.1 472.0,382.5 474.0,382.7 476.0,382.4 478.0,383.0 480.0,382.7 482.0,382.6 484.0,384.9 486.0,382.5 488.0,382.6 490.0,382.7 492.0,383.2 494.0,383.0 496.0,382.6 498.0,382.7 500.0,385.0 502.0,383.2 504.0,382.7 506.0,385.5 508.0,383.0 510.0,383.2 512.0,382.4 514.0,382.6 516.0,382.7 518.0,382.4 520.0,383.1 522.0,382.6 524.0,383.0 526.0,382.8 528.0,382.4 530.0,382.7 532.0,382.6 534.0,382.4 536.0,382.5 538.0,385.4 540.0,382.4 542.0,382.6 544.0,382.7 546.0,382.8 548.0,382.5 550.0,383.0 552.0,382.6 554.0,383.0 556.0,382.9 558.0,382.5 560.0,382.5 562.0,382.6 564.0,383.0 566.0,382.7 568.0,382.7 570.0,383.1 572.0,382.6 574.0,382.6 576.0,382.7 578.0,382.5 580.0,382.4 582.0,382.4 584.0,382.9 586.0,382.9 588.0,385.6 590.0,383.2 592.0,382.6 594.0,383.0 596.0,383.2 598.0,382.5 600.0,383.0 602.0,382.9 604.0,383.2 606.0,383.1 608.0,382.6 610.0,382.9 612.0,382.4 614.0,382.7 616.0,382.7 618.0,382.4 620.0,382.7 622.0,382.6 624.0,382.8 626.0,382.6 628.0,382.5 630.0,382.7 632.0,382.8 634.0,382.5 636.0,382.9 638.0,382.6 640.0,382.4 642.0,382.7 644.0,382.7 646.0,382.5 648.0,382.9 650.0,383.0 652.0,382.8 654.0,383.0 656.0,382.4 658.0,382.7 660.0,382.7 662.0,382.4 664.0,382.7 666.0,382.4 668.0,382.8 670.0,382.9 672.0,382.8 674.0,382.6 676.0,382.6 678.0,382.4 680.0,382.7 682.0,385.7 684.0,382.9 686.0,382.6 688.0,383.0 690.0,382.5 692.0,382.8 694.0,382.9 696.0,383.2 698.0,382.7 700.0,382.9 702.0,383.2 704.0,383.0 706.0,382.9 708.0,382.9 710.0,382.7 712.0,382.7 714.0,382.6 716.0,383.1 718.0,383.1 720.0,382.7 722.0,383.2 724.0,382.4 726.0,382.5 728.0,382.8 730.0,382.6 732.0,382.7 734.0,383.2 736.0,382.5 738.0,382.5 740.0,382.6 742.0,383.0 744.0,382.6 746.0,382.4 748.0,382.8 750.0,382.7 752.0,382.6 754.0,382.8 756.0,382.9 758.0,382.8 760.0,382.9 762.0,382.9 764.0,383.1 766.0,383.2 768.0,382.7 770.0,382.7 772.0,383.1 774.0,382.6 776.0,383.0 778.0,383.0 780.0,383.0 782.0,383.2 784.0,383.1 786.0,382.5 788.0,382.9 790.0,382.8 792.0,382.9 794.0,382.7 796.0,382.6 798.0,383.0 800.0,382.8 802.0,382.8 804.0,382.5 806.0,382.5 808.0,382.5 810.0,382.4 812.0,382.6 814.0,382.2 816.0,382.2 818.0,382.1 820.0,382.1 822.0,385.1 824.0,382.1 826.0,382.3 828.0,382.6 830.0,382.3 832.0,382.0 834.0,382.6 836.0,382.6 838.0,381.8 840.0,381.9 842.0,382.1 844.0,382.4 846.0,382.0 848.0,382.2 850.0,382.0 852.0,381.8 854.0,382.2 856.0,381.8 858.0,381.9 860.0,382.2 862.0,382.3 864.0,382.3 866.0,382.1 868.0,381.9 870.0,382.0 872.0,382.2 874.0,382.1 876.0,382.3 878.0,382.3 880.0,381.7 882.0,381.9 884.0,382.0" fill="none" stroke="#ff1a1a" stroke-width="1.3" stroke-linejoin="round" /><polyline points="893.3,382.7 895.4,382.9 897.5,382.5 899.6,382.8 901.7,382.5 903.8,383.0 905.9,382.5 908.0,383.0 910.1,382.9 912.3,382.7 914.4,383.1 916.5,382.6 918.6,382.9 920.7,382.8 922.8,382.7 924.9,382.3 927.0,382.7 929.5,384.6 932.0,386.7 934.0,384.5 936.0,382.7 938.1,382.6 940.2,383.1 942.3,382.5 944.4,382.9 946.5,382.9 948.6,382.5 950.7,382.6 952.8,382.4 954.9,383.1 957.0,385.2 959.5,384.1 962.0,386.0 964.0,385.9 966.0,388.4 968.0,386.3 970.0,386.3 972.0,386.1 974.0,386.0 976.0,386.0 978.0,384.3 980.0,383.7 982.0,382.0 984.0,381.6 986.1,381.9 988.1,381.9 990.2,382.2 992.2,382.2 994.2,381.9 996.3,382.4 998.3,382.4 1000.4,381.6 1002.4,382.1 1004.5,382.0 1006.5,381.9 1008.5,382.0 1010.6,381.8 1012.6,382.2 1014.7,382.1 1016.7,382.0" fill="none" stroke="#ff1a1a" stroke-width="1.3" stroke-linejoin="round" /><polyline points="1019.3,382.7 1021.3,383.1 1023.4,382.7 1025.4,382.6 1027.5,382.8 1029.5,383.0 1031.6,383.1 1033.6,382.6 1035.7,382.3 1037.7,382.4 1039.8,383.0 1041.8,382.9 1043.9,382.9 1045.9,382.4 1048.0,382.7 1050.0,382.7 1052.0,382.1 1054.0,382.0 1056.0,384.5 1058.0,382.0 1060.5,380.4 1063.0,380.5 1065.0,378.0 1067.0,378.0 1069.0,377.1 1071.0,377.3 1072.0,382.7 1074.1,382.6 1076.3,382.3 1078.4,382.5 1080.6,382.4 1082.7,383.1 1084.9,382.5 1087.0,382.7 1089.0,380.7 1092.0,381.3 1095.0,386.0 1098.0,389.3 1100.0,389.1 1102.0,389.0 1104.7,382.0 1107.3,384.1 1110.0,386.0 1112.5,386.3 1115.0,386.0 1117.2,384.8 1119.3,382.7 1121.4,382.9 1123.5,382.9 1125.6,383.4 1127.7,383.0 1129.8,383.0 1131.9,383.5 1134.0,383.4 1136.3,382.7 1138.7,382.2 1141.0,381.8 1143.3,381.3" fill="none" stroke="#ff1a1a" stroke-width="1.3" stroke-linejoin="round" /><polyline points="1147.0,382.4 1149.0,382.5 1151.0,382.0 1153.0,382.8 1155.0,382.6 1157.0,382.4 1158.0,383.3 1160.2,383.4 1162.5,382.9 1164.8,383.5 1167.0,383.3 1170.0,381.3 1172.2,381.2 1174.5,381.5 1176.7,381.3" fill="none" stroke="#ff1a1a" stroke-width="1.3" stroke-linejoin="round" /><polyline points="1180.7,382.7 1182.7,382.9 1184.8,382.8 1186.8,382.4 1188.8,382.5 1190.8,382.7 1192.9,383.3 1194.9,382.9 1196.9,383.3 1198.9,382.7 1201.0,382.9 1203.0,383.0 1206.0,380.4 1208.0,381.3 1210.0,382.4 1212.0,383.0 1214.1,382.8 1216.2,383.6 1218.3,383.3 1220.4,383.0 1222.6,383.5 1224.7,383.6 1226.8,383.9 1228.9,384.3 1231.0,384.0 1233.0,383.6 1235.0,383.3 1237.0,382.7 1239.0,382.7 1241.0,383.2 1243.0,382.7 1245.0,383.4 1247.0,383.3 1249.6,381.7 1252.1,380.7 1254.7,379.3 1258.0,382.0 1260.2,380.8 1262.5,380.1 1264.7,379.3 1267.1,379.9 1269.5,381.0 1271.9,382.0 1273.9,382.2 1276.0,384.7 1278.0,382.1 1280.1,382.3 1282.1,382.7 1284.1,382.3 1286.2,382.6 1288.2,382.5 1290.3,383.1 1292.3,382.7 1294.5,382.0 1296.7,381.8 1298.8,380.8 1301.0,380.5 1303.3,380.1 1305.7,380.4 1308.0,380.1 1310.4,379.7 1312.7,379.8 1314.8,379.5 1317.0,380.0" fill="none" stroke="#ff1a1a" stroke-width="1.3" stroke-linejoin="round" /><polyline points="1321.5,382.7 1323.5,383.1 1325.5,385.4 1327.6,385.0 1329.6,382.3 1331.6,383.1 1333.6,382.6 1335.6,383.0 1337.7,382.5 1339.7,382.7 1341.7,385.1 1343.7,382.9 1345.7,383.1 1347.8,382.7 1349.8,382.8 1351.8,382.6 1353.8,382.5 1355.8,383.1 1357.8,384.8 1359.9,383.1 1361.9,382.8 1363.9,382.3 1365.9,383.1 1367.9,382.3 1370.0,382.8 1372.0,382.4 1374.0,382.7 1376.2,382.9 1378.3,382.1 1380.5,382.3 1382.7,381.4 1384.8,381.7 1387.0,381.3 1390.7,377.6 1392.8,378.3 1395.0,379.8 1397.2,379.6 1399.5,380.2 1401.8,380.8 1404.0,380.5 1406.5,382.5 1409.0,384.2 1411.5,384.5 1414.0,384.2 1416.5,382.3 1419.0,379.8 1421.0,380.1 1423.0,379.9 1425.0,380.6 1427.0,380.5 1429.0,381.1 1431.0,381.3 1433.8,381.9 1436.7,382.7 1439.6,379.0 1441.9,379.0 1444.2,378.7 1446.4,379.2 1448.7,378.9 1451.0,379.0 1453.1,379.3 1455.2,379.2 1457.3,379.9 1459.4,380.3 1461.5,380.5 1463.6,381.5 1465.8,381.7 1467.9,381.8 1470.0,382.7 1472.0,382.4 1474.0,384.8 1476.0,382.5 1478.0,382.5 1480.0,382.0 1483.3,379.8 1485.5,380.5 1487.8,380.7 1490.0,380.5 1492.1,380.8 1494.3,380.6 1496.4,380.6 1498.6,379.7 1500.7,380.0 1502.9,380.0 1505.0,379.8 1507.0,380.0 1509.0,380.0 1511.0,380.0 1513.0,380.3 1515.0,379.6 1517.0,380.1 1519.0,380.5 1521.0,379.7 1523.0,379.8 1525.0,380.2" fill="none" stroke="#ff1a1a" stroke-width="1.3" stroke-linejoin="round" /><path d="M38.0,348 H40.6 M40.6,268 H55.0 M55.0,348 H57.3 M57.3,268 H58.9 M58.9,348 H60.5 M60.5,268 H62.0 M62.0,348 H63.6 M63.6,268 H66.7 M66.7,348 H111.2 M111.2,268 H116.7 M116.7,348 H136.2 M136.2,268 H141.7 M141.7,348 H147.2 M147.2,268 H151.6 M192.5,348 H210.0 M221.4,348 H230.8 M248.0,348 H309.7 M327.0,348 H406.8 M449.7,348 H455.2 M464.1,348 H469.6 M478.5,348 H484.0 M492.9,348 H498.4 M507.3,348 H512.8 M521.7,348 H527.2 M536.1,348 H541.6 M550.5,348 H556.0 M564.9,348 H570.4 M579.3,348 H584.8 M593.7,348 H599.2 M608.1,348 H613.6 M622.5,348 H628.0 M636.9,348 H642.4 M651.3,348 H656.8 M665.7,348 H671.2 M680.1,348 H685.6 M694.5,348 H700.0 M708.9,348 H714.4 M723.3,348 H728.8 M737.7,348 H743.2 M752.1,348 H757.6 M766.5,348 H772.0 M780.9,348 H786.4 M795.3,348 H800.8 M809.7,348 H815.2 M824.1,348 H829.6 M838.5,348 H844.0 M852.9,348 H852.0 M861.5,348 H941.3 M978.0,348 H981.3 M989.3,348 H993.3 M1000.0,348 H1001.0 M1002.0,348 H1003.0 M1004.2,348 H1005.3 M1005.3,348 H1035.3 M1050.7,348 H1072.0 M1074.7,348 H1221.3 M1223.3,348 H1272.7 M1275.5,348 H1277.0 M1279.0,348 H1280.5 M1283.2,348 H1322.0 M1323.6,348 H1357.2 M1363.0,348 H1364.5 M1366.7,348 H1374.0 M1374.1,348 H1469.5 M1470.5,348 H1525.0 M40.6,268 V348 M55.0,268 V348 M57.3,268 V348 M58.9,268 V348 M60.5,268 V348 M62.0,268 V348 M63.6,268 V348 M66.7,268 V348 M111.2,268 V348 M116.7,268 V348 M136.2,268 V348 M141.7,268 V348 M147.2,268 V348 M151.6,268 V348 M192.5,272 V348 M210.0,272 V348 M221.4,272 V348 M230.8,272 V348 M248.0,272 V348 M309.7,272 V348 M327.0,272 V348 M406.8,272 V348 M449.7,272 V348 M455.2,272 V348 M464.1,272 V348 M469.6,272 V348 M478.5,272 V348 M484.0,272 V348 M492.9,272 V348 M498.4,272 V348 M507.3,272 V348 M512.8,272 V348 M521.7,272 V348 M527.2,272 V348 M536.1,272 V348 M541.6,272 V348 M550.5,272 V348 M556.0,272 V348 M564.9,272 V348 M570.4,272 V348 M579.3,272 V348 M584.8,272 V348 M593.7,272 V348 M599.2,272 V348 M608.1,272 V348 M613.6,272 V348 M622.5,272 V348 M628.0,272 V348 M636.9,272 V348 M642.4,272 V348 M651.3,272 V348 M656.8,272 V348 M665.7,272 V348 M671.2,272 V348 M680.1,272 V348 M685.6,272 V348 M694.5,272 V348 M700.0,272 V348 M708.9,272 V348 M714.4,272 V348 M723.3,272 V348 M728.8,272 V348 M737.7,272 V348 M743.2,272 V348 M752.1,272 V348 M757.6,272 V348 M766.5,272 V348 M772.0,272 V348 M780.9,272 V348 M786.4,272 V348 M795.3,272 V348 M800.8,273 V348 M809.7,273 V348 M815.2,273 V348 M824.1,273 V348 M829.6,273 V348 M838.5,273 V348 M844.0,273 V348 M852.9,273 V348 M852.0,273 V348 M861.5,273 V348 M941.3,273 V348 M978.0,273 V348 M981.3,273 V348 M989.3,273 V348 M993.3,273 V348 M1000.0,272 V348 M1001.0,272 V348 M1002.0,272 V348 M1003.0,272 V348 M1004.2,272 V348 M1005.3,272 V348 M1035.3,272 V348 M1050.7,272 V348 M1072.0,272 V348 M1074.7,272 V348 M1221.3,272 V348 M1223.3,272 V348 M1272.7,272 V348 M1275.5,272 V348 M1277.0,272 V348 M1279.0,272 V348 M1280.5,272 V348 M1283.2,272 V348 M1322.0,272 V348 M1323.6,272 V348 M1357.2,272 V348 M1363.0,272 V348 M1364.5,272 V348 M1366.7,272 V348 M1374.0,272 V348 M1374.1,272 V348 M1469.5,272 V348 M1470.5,272 V348" fill="none" stroke="#ff20ff" stroke-width="1.3"/><polyline points="38.0,330.0 40.0,318.8 41.7,345.0 43.7,344.1 45.6,340.6 47.0,297.0 48.8,281.0 50.4,275.7 52.0,273.0 54.0,286.0 57.0,301.5 59.7,311.0 61.7,317.9 63.6,326.6 65.4,327.2 67.2,327.3 69.0,329.7 72.0,354.7 74.0,352.6 76.0,351.6 78.0,347.3 80.0,345.0 83.0,356.0 84.9,355.5 86.7,357.3 88.6,357.8 90.4,357.3 92.2,356.8 94.0,356.0 96.4,353.8 98.8,350.0 100.5,347.9 102.3,347.0 104.0,342.3 105.8,341.4 108.0,349.0 110.0,349.8 112.0,351.1 114.0,354.0 116.7,328.0 118.8,282.8 120.6,317.0 122.0,351.6 125.0,356.0 126.7,354.0 128.3,353.8 130.0,351.6 131.9,352.5 133.9,350.8 135.9,349.4 137.8,350.0 140.0,329.7 142.5,281.0 144.4,315.8 146.4,351.6 148.2,354.9 150.0,357.8 152.7,343.8 154.0,289.0 156.0,282.9 158.0,278.0 159.6,277.3 161.2,276.2 162.8,273.1 164.4,271.9 166.0,270.0 168.0,270.4 170.0,268.6 172.0,268.0 173.7,266.3 175.3,267.7 177.0,265.6 178.7,264.7 180.3,259.5 182.0,258.6 184.0,269.9 186.0,279.7 189.0,267.0 191.0,270.7 193.0,275.0 194.7,301.7 196.4,331.0 198.0,354.7 200.3,348.2 202.7,343.8 204.6,348.6 206.6,355.5 208.8,356.5 211.0,356.0 213.6,287.5 215.6,276.4 217.5,267.0 220.0,257.8 221.9,268.9 223.8,282.8 226.0,353.0 228.0,351.5 230.0,351.6 232.3,344.7 234.7,336.0 237.8,271.9 241.0,279.7 244.0,264.0 246.0,267.9 248.0,271.9 251.0,317.0 252.7,347.0 254.5,349.8 256.2,351.6 258.0,354.0 259.9,352.2 261.8,350.9 263.7,351.0 265.6,349.4 267.5,350.0 269.3,349.5 271.1,350.8 272.9,350.3 274.6,350.8 276.4,351.5 278.2,350.8 280.0,351.6 281.9,351.8 283.9,354.0 285.9,353.6 287.8,354.0 289.6,353.5 291.4,353.5 293.1,353.0 294.9,352.3 296.7,353.7 298.4,351.4 300.2,353.2 302.0,351.6 303.8,352.9 305.6,353.2 307.4,351.3 309.2,352.6 311.0,354.2 312.8,353.0 316.0,331.0 319.0,297.0 322.0,282.8 323.9,280.1 325.7,277.7 327.6,276.6 329.3,268.0 331.0,258.0 332.8,284.9 334.7,313.6 336.5,341.0 338.2,342.6 340.0,347.7 341.7,349.0 343.4,348.7 345.0,348.5 346.7,350.7 348.4,350.0 350.0,351.0 351.7,351.2 353.3,352.8 355.0,352.0 356.7,351.9 358.3,351.1 360.0,353.0 361.6,353.4 363.3,353.2 364.9,354.5 366.6,355.1 368.2,355.0 369.9,354.3 371.5,356.0 373.1,356.4 374.8,357.3 376.4,358.7 378.1,357.1 379.7,358.0 381.4,357.3 383.0,359.0 384.6,357.9 386.2,354.2 387.8,354.0 389.4,351.9 391.0,349.0 392.6,347.7 394.2,349.0 395.8,347.2 397.4,346.4 399.0,346.0 400.6,346.2 402.2,347.3 403.8,346.0 405.4,345.9 407.0,346.0 409.0,302.0 410.9,292.7 412.7,285.7 414.6,276.0 416.3,275.2 418.1,273.9 419.8,272.6 421.5,271.8 423.3,272.8 425.0,271.0 426.7,271.4 428.3,271.4 430.0,270.8 431.7,269.6 433.3,269.4 435.0,268.0 436.8,267.8 438.7,267.3 440.5,266.4 442.3,263.7 444.2,264.8 446.0,263.0 448.0,259.9 450.0,258.0 451.0,345.0 454.2,261.9 455.2,269.9 459.5,320.0 462.5,341.0 465.4,345.0 465.4,339.7 468.6,258.4 469.6,266.4 473.9,314.7 476.9,335.7 479.8,339.7 479.8,343.3 483.0,263.5 484.0,271.5 488.3,318.3 491.3,339.3 494.2,343.3 494.2,344.8 497.4,267.8 498.4,275.8 502.7,319.8 505.7,340.8 508.6,344.8 508.6,341.4 511.8,272.9 512.8,280.9 517.1,316.4 520.1,337.4 523.0,341.4 523.0,341.7 526.2,259.0 527.2,267.0 531.5,316.7 534.5,337.7 537.4,341.7 537.4,345.8 540.6,259.8 541.6,267.8 545.9,320.8 548.9,341.8 551.8,345.8 551.8,337.0 555.0,271.9 556.0,279.9 560.3,312.0 563.3,333.0 566.2,337.0 566.2,342.0 569.4,261.0 570.4,269.0 574.7,317.0 577.7,338.0 580.6,342.0 580.6,345.8 583.8,270.1 584.8,278.1 589.1,320.8 592.1,341.8 595.0,345.8 595.0,334.6 598.2,268.0 599.2,276.0 603.5,309.6 606.5,330.6 609.4,334.6 609.4,333.8 612.6,269.6 613.6,277.6 617.9,308.8 620.9,329.8 623.8,333.8 623.8,343.0 627.0,271.9 628.0,279.9 632.3,318.0 635.3,339.0 638.2,343.0 638.2,344.4 641.4,270.6 642.4,278.6 646.7,319.4 649.7,340.4 652.6,344.4 652.6,345.3 655.8,267.1 656.8,275.1 661.1,320.3 664.1,341.3 667.0,345.3 667.0,339.4 670.2,268.2 671.2,276.2 675.5,314.4 678.5,335.4 681.4,339.4 681.4,337.6 684.6,264.2 685.6,272.2 689.9,312.6 692.9,333.6 695.8,337.6 695.8,335.1 699.0,258.4 700.0,266.4 704.3,310.1 707.3,331.1 710.2,335.1 710.2,336.0 713.4,270.7 714.4,278.7 718.7,311.0 721.7,332.0 724.6,336.0 724.6,343.1 727.8,268.5 728.8,276.5 733.1,318.1 736.1,339.1 739.0,343.1 739.0,339.7 742.2,269.1 743.2,277.1 747.5,314.7 750.5,335.7 753.4,339.7 753.4,336.5 756.6,263.1 757.6,271.1 761.9,311.5 764.9,332.5 767.8,336.5 767.8,341.4 771.0,261.0 772.0,269.0 776.3,316.4 779.3,337.4 782.2,341.4 782.2,345.2 785.4,269.0 786.4,277.0 790.7,320.2 793.7,341.2 796.6,345.2 796.6,345.1 799.8,263.3 800.8,271.3 805.1,320.1 808.1,341.1 811.0,345.1 811.0,336.8 814.2,272.6 815.2,280.6 819.5,311.8 822.5,332.8 825.4,336.8 825.4,341.1 828.6,273.2 829.6,281.2 833.9,316.1 836.9,337.1 839.8,341.1 850.0,280.7 851.3,303.0 853.3,331.0 855.0,339.1 856.7,345.0 859.3,324.7 860.7,303.0 862.0,272.7 864.0,276.7 866.0,306.0 866.7,320.7 867.3,328.7 870.0,340.7 872.7,346.0 874.3,346.7 875.9,345.6 877.5,345.5 879.1,346.1 880.7,346.0 882.4,345.6 884.0,344.2 885.6,345.9 887.3,344.7 889.0,345.4 890.6,345.9 892.3,347.2 894.0,347.3 895.9,347.5 897.7,348.2 899.6,349.9 901.4,349.9 903.3,351.3 905.1,351.3 906.9,351.2 908.6,351.6 910.4,352.8 912.2,353.6 914.0,354.0 915.8,355.5 917.6,355.2 919.4,355.1 921.1,355.6 922.9,355.6 924.7,356.7 927.3,347.3 930.0,348.0 931.6,350.3 933.3,352.7 935.3,342.0 938.0,349.3 940.0,351.4 942.0,351.3 944.0,324.4 946.0,299.3 948.7,284.7 951.3,278.0 954.0,282.0 956.0,272.0 958.0,284.0 960.7,276.7 963.0,268.0 966.0,270.0 968.7,260.7 971.0,272.0 974.0,270.0 976.0,266.8 978.0,264.0 979.6,261.4 981.3,258.0 982.0,274.0 982.7,295.0 983.3,330.0 986.0,342.0 987.3,287.0 989.6,278.5 992.0,268.7 993.3,282.0 994.7,296.7 996.7,338.0 998.7,339.3 999.3,292.7 1001.0,277.8 1002.7,262.7 1004.7,280.7 1006.7,339.3 1009.0,331.6 1011.3,323.3 1013.1,331.0 1014.9,337.6 1016.7,343.3 1018.6,344.4 1020.4,346.9 1022.3,349.7 1024.1,350.3 1026.0,352.0 1027.7,351.4 1029.3,353.0 1031.0,351.5 1032.7,352.7 1034.7,348.5 1036.7,346.0 1038.7,320.1 1040.7,294.0 1042.7,285.5 1044.7,278.0 1046.3,275.5 1048.0,272.0 1050.3,270.2 1052.7,267.3 1054.3,291.6 1056.0,316.7 1058.0,340.7 1061.0,342.0 1062.7,342.6 1064.3,342.4 1066.0,342.0 1068.7,348.7 1070.5,351.4 1072.2,353.0 1074.0,355.3 1075.8,349.8 1077.5,343.7 1079.3,339.3 1081.1,343.2 1082.9,348.4 1084.7,351.3 1086.7,347.6 1088.7,342.0 1090.3,348.3 1092.0,356.7 1092.7,356.0 1094.6,354.0 1096.4,353.6 1098.3,353.6 1100.1,352.1 1102.0,351.3 1104.0,328.7 1106.7,351.3 1109.0,351.8 1111.3,354.0 1113.2,351.8 1115.0,350.0 1117.2,346.2 1119.3,342.0 1121.0,343.8 1122.7,344.3 1124.3,346.1 1126.0,347.0 1127.7,349.4 1129.3,351.1 1131.0,351.7 1132.7,354.7 1134.6,352.8 1136.4,349.0 1138.3,346.4 1140.1,345.0 1142.0,342.7 1144.0,344.5 1146.0,348.7 1147.8,348.1 1149.6,349.3 1151.3,349.9 1153.1,349.5 1154.9,352.0 1156.7,351.3 1158.5,352.1 1160.2,351.3 1162.0,351.3 1163.6,350.2 1165.2,348.2 1166.8,348.5 1168.4,345.1 1170.0,344.7 1171.7,345.1 1173.3,345.8 1175.0,347.3 1176.7,349.5 1178.3,350.0 1180.0,351.1 1181.6,352.4 1183.3,354.0 1186.0,347.3 1187.7,350.0 1189.3,350.3 1191.0,352.7 1194.0,348.7 1195.9,348.2 1197.7,346.8 1199.6,345.0 1201.4,343.6 1203.3,342.7 1205.2,344.8 1207.0,347.3 1210.0,351.3 1211.7,351.3 1213.4,351.1 1215.1,351.9 1216.9,351.5 1218.6,351.3 1220.3,352.6 1222.0,352.0 1222.7,339.3 1225.3,289.3 1226.0,335.3 1228.0,345.2 1230.0,355.3 1231.8,352.1 1233.5,350.0 1235.3,346.0 1237.7,347.9 1240.0,350.0 1241.7,350.0 1243.5,351.5 1245.2,351.9 1247.0,351.7 1248.7,351.3 1250.5,347.5 1252.2,344.6 1254.0,340.7 1257.0,347.3 1258.9,347.2 1260.8,345.5 1262.8,345.9 1264.7,344.7 1266.3,347.9 1267.9,349.3 1269.5,351.5 1271.1,353.0 1272.7,355.3 1274.0,346.0 1277.0,290.0 1280.0,283.0 1283.0,314.0 1286.0,350.0 1288.0,352.4 1290.0,354.0 1293.0,345.0 1294.8,345.3 1296.5,347.6 1298.2,348.1 1300.0,349.0 1301.7,350.0 1303.3,348.3 1305.0,349.0 1306.7,347.2 1308.3,348.0 1310.0,348.0 1311.7,349.3 1313.3,348.8 1315.0,350.3 1316.7,350.0 1318.3,351.1 1320.0,352.0 1323.0,343.0 1325.0,336.2 1327.0,327.0 1329.0,337.0 1332.0,340.0 1335.0,345.0 1336.7,345.3 1338.3,348.0 1340.0,348.0 1341.7,347.3 1343.3,348.9 1345.0,349.8 1346.7,350.1 1348.3,349.4 1350.0,350.0 1351.8,350.7 1353.5,351.5 1355.2,352.1 1357.0,352.0 1359.0,333.0 1362.0,274.0 1364.0,300.0 1366.0,280.0 1368.0,278.6 1370.0,276.0 1372.0,293.2 1374.0,310.0 1376.0,328.4 1378.0,348.0 1379.8,348.0 1381.5,347.1 1383.2,346.6 1385.0,346.0 1386.7,344.3 1388.3,339.5 1390.0,337.5 1392.0,343.4 1394.0,348.0 1395.8,348.7 1397.7,350.9 1399.5,352.6 1401.3,352.1 1403.2,354.0 1405.0,355.0 1406.7,355.4 1408.3,355.7 1410.0,356.0 1411.6,353.2 1413.2,352.3 1414.8,350.9 1416.4,348.4 1418.0,346.0 1419.8,346.0 1421.5,347.7 1423.2,347.3 1425.0,348.0 1426.7,346.9 1428.3,347.8 1430.0,347.2 1431.7,347.2 1433.3,348.1 1435.0,346.8 1436.7,347.5 1438.3,345.9 1440.0,346.0 1441.6,347.6 1443.2,347.0 1444.8,348.5 1446.4,350.5 1448.0,351.0 1449.8,350.2 1451.5,349.3 1453.2,347.0 1455.0,346.0 1456.7,345.8 1458.3,346.3 1460.0,347.1 1461.7,346.2 1463.3,347.4 1465.0,348.0 1466.7,349.0 1468.3,348.5 1470.0,350.0 1472.0,320.0 1473.0,291.6 1475.0,340.0 1477.0,354.0 1479.0,346.5 1481.0,340.0 1483.0,344.9 1485.0,348.0 1486.7,349.0 1488.3,347.4 1490.0,347.2 1491.7,347.1 1493.3,347.0 1495.0,348.7 1496.7,348.6 1498.3,347.4 1500.0,348.0 1501.7,348.0 1503.3,348.5 1505.0,346.9 1506.7,348.8 1508.3,348.9 1510.0,347.3 1511.7,348.5 1513.3,348.5 1515.0,347.6 1516.7,348.9 1518.3,347.3 1520.0,347.9 1521.7,347.6 1523.3,347.9 1525.0,348.0" fill="none" stroke="#20ee20" stroke-width="1.3" stroke-linejoin="round" /></g><g clip-path="url(#cp1c)"><polyline points="38.0,443.0 40.3,441.8 42.7,439.7 45.0,438.0 47.2,436.6 49.4,436.1 51.6,434.6 53.8,434.0 56.0,433.0 58.2,431.1 60.4,429.9 62.6,428.8 64.8,427.2 67.1,425.9 69.3,424.0 71.5,422.4 73.7,421.0 75.8,420.8 77.8,421.8 79.9,421.8 82.0,422.0 84.3,428.9 86.5,435.6 88.8,443.0 91.0,443.8 93.1,444.2 95.3,445.1 97.5,445.9 99.6,447.1 101.8,448.0 103.9,446.0 106.1,445.0 108.2,443.1 110.3,441.7 112.5,439.7 114.6,437.7 116.7,436.1 118.9,435.0 121.0,433.0 123.2,431.8 125.4,430.6 127.6,429.4 129.8,427.5 132.1,426.4 134.3,425.4 136.5,424.6 138.7,423.0 140.9,424.4 143.0,425.0 145.2,425.6 147.4,426.3 149.5,427.8 151.7,428.7 153.7,428.0 155.7,427.9 157.8,426.5 159.8,425.9 161.8,425.1 163.8,424.5 165.8,424.7 167.9,424.1 169.9,422.8 171.9,422.0 173.9,421.9 176.0,421.0 178.0,420.7 180.0,420.0 182.0,420.3 184.0,419.9 186.0,419.3 188.0,419.5 190.0,419.0 192.0,419.3 194.0,418.7 196.0,419.1 198.0,418.8 200.0,418.8 202.0,418.1 204.0,418.6 206.0,418.0 208.0,417.8 210.2,417.9 212.3,418.7 214.5,418.7 216.7,418.8 218.8,419.1 221.0,420.0 223.2,420.0 225.3,420.2 227.5,421.0 229.5,421.2 231.6,420.5 233.6,421.1 235.6,420.5 237.7,420.6 239.7,421.1 241.7,420.9 243.8,420.8 245.8,420.9 247.8,420.5 249.8,420.7 251.9,420.4 253.9,420.3 255.9,419.9 258.0,419.9 260.0,420.0 262.1,420.9 264.2,421.4 266.4,422.6 268.5,423.6 270.6,424.3 272.8,424.6 274.9,425.2 277.0,426.5 279.2,430.0 281.3,433.6 283.5,437.6 285.7,440.9 287.8,444.4 290.0,448.0 292.2,448.7 294.3,449.2 296.5,449.9 298.7,450.3 300.8,450.9 303.0,451.4 305.0,453.0 307.0,454.8 309.0,457.0 311.0,459.0 313.0,456.4 315.0,453.4 317.0,449.8 319.0,447.1 321.0,444.0 323.3,443.5 325.6,442.9 327.9,442.1 330.2,442.2 332.5,441.4 334.6,444.7 336.8,448.5 338.9,452.3 341.0,455.9 343.1,459.6 345.2,463.2 347.4,467.3 349.5,471.0 351.5,472.2 353.6,474.1 355.6,475.6 357.6,477.1 359.7,478.5 361.7,480.1 363.8,481.3 365.8,483.0 367.8,484.7 369.9,485.7 371.9,487.7 373.9,489.1 376.0,491.0 378.0,492.0 380.5,490.9 383.0,489.6 385.0,485.7 387.0,482.0 389.0,477.5 391.0,473.7 393.0,469.8 395.0,466.1 397.0,462.2 399.0,458.0 401.0,455.5 403.0,454.1 405.0,452.0 407.0,449.3 409.0,447.6 411.0,445.1 413.0,442.6 415.0,440.2 417.0,437.9 419.0,436.3 421.0,434.3 423.0,432.0 425.0,429.7 427.0,429.4 429.0,428.5 431.0,428.2 433.0,427.4 435.0,426.9 437.0,426.2 439.0,425.7 441.0,425.0 443.0,424.0 445.0,424.0 447.0,423.4 449.0,422.5 451.0,422.0 453.0,422.5 455.0,422.0 457.0,421.7 459.0,422.0 461.0,421.9 463.0,421.7 465.0,422.4 467.0,421.7 469.0,422.2 471.0,421.7 473.0,422.0 475.0,422.5 477.0,421.6 479.0,422.4 481.0,421.5 483.0,422.5 485.0,422.4 487.0,421.9 489.0,422.1 491.0,422.0 493.0,421.7 495.0,421.9 497.0,421.9 499.0,422.4 501.0,421.6 503.0,422.0 505.0,422.0 507.0,422.1 509.0,422.3 511.0,422.1 513.0,421.8 515.0,422.5 517.0,422.1 519.0,421.8 521.0,422.0 523.2,423.0 525.3,424.2 527.5,424.3 529.7,425.8 531.8,426.5 534.0,427.2 536.1,428.0 538.3,429.0 540.5,430.4 542.6,432.1 544.8,433.0 547.0,433.0 549.1,432.4 551.3,433.3 553.5,434.7 555.7,436.8 557.8,438.2 560.0,438.3 562.0,437.0 564.0,436.9 566.1,436.4 568.1,437.0 570.1,437.9 572.1,438.9 574.1,438.3 576.2,437.6 578.2,436.3 580.2,436.7 582.2,436.8 584.2,438.4 586.2,438.6 588.3,438.4 590.3,437.6 592.3,436.6 594.3,436.4 596.3,436.9 598.4,438.3 600.4,438.9 602.4,438.1 604.4,438.2 606.4,436.2 608.5,435.9 610.5,437.1 612.5,437.8 614.5,438.5 616.5,438.4 618.5,438.0 620.5,437.4 622.5,437.4 624.5,437.0 626.5,438.3 628.5,439.2 630.5,439.6 632.5,439.4 634.5,438.7 636.5,438.6 638.5,438.6 640.6,439.8 642.6,440.7 644.6,441.5 646.6,440.9 648.6,439.6 650.6,439.1 652.6,439.4 654.6,439.9 656.6,441.9 658.6,442.1 660.6,441.7 662.6,441.1 664.6,440.4 666.6,440.6 668.6,440.8 670.6,442.2 672.6,442.4 674.6,442.4 676.6,441.5 678.6,440.9 680.6,440.8 682.6,440.9 684.6,442.4 686.6,443.1 688.6,443.3 690.7,442.8 692.7,441.2 694.7,441.4 696.7,441.3 698.7,442.4 700.7,443.0 702.7,443.1 704.7,443.0 706.7,441.5 708.7,440.9 710.7,441.2 712.7,442.6 714.7,443.2 716.7,443.9 718.8,443.2 720.8,442.9 722.9,442.0 724.9,442.0 727.0,443.6 729.0,445.0 731.1,445.2 733.1,444.6 735.2,443.8 737.2,443.4 739.3,443.8 741.4,444.8 743.4,445.4 745.5,446.4 747.5,445.4 749.6,444.5 751.6,444.3 753.7,444.3 755.7,445.7 757.8,446.6 759.8,447.7 761.9,446.9 763.9,446.4 766.0,445.5 768.0,445.8 770.0,445.9 772.0,447.0 774.0,446.9 776.0,446.1 778.0,444.6 780.0,444.1 782.0,444.1 784.0,444.3 786.0,444.7 788.0,445.3 790.0,444.6 792.0,443.5 794.0,442.7 796.0,441.5 798.0,442.3 800.0,443.1 802.0,443.8 804.1,443.2 806.1,442.8 808.1,441.3 810.2,441.0 812.2,441.2 814.2,442.5 816.2,443.1 818.3,443.2 820.3,442.0 822.3,441.3 824.4,440.5 826.4,440.4 828.4,441.7 830.5,442.2 832.5,442.3 834.5,442.1 836.6,440.5 838.6,440.1 840.6,439.8 842.7,441.2 844.7,441.5 846.7,441.6 848.8,440.7 850.8,439.5 852.8,439.7 854.8,440.0 856.9,440.2 858.9,440.7 860.9,441.6 863.0,440.8 865.0,439.5 867.2,441.4 869.3,446.3 871.5,448.6 873.7,451.7 875.8,455.3 878.0,458.0 880.0,460.5 882.0,462.2 884.0,464.7 886.0,467.2 888.0,469.3 890.0,471.4 892.0,473.3 894.0,475.4 896.0,477.8 898.0,480.3 900.0,482.6 902.0,484.7 904.0,487.0 906.0,488.0 908.0,488.7 910.0,489.6 912.0,490.2 914.0,491.5 916.0,492.0 918.3,487.8 920.6,484.0 923.0,479.9 925.3,475.5 927.6,471.0 929.8,466.6 931.9,461.8 934.1,456.9 936.3,451.9 938.4,447.0 940.6,442.7 942.7,441.3 944.8,439.3 946.9,438.1 949.0,436.5 951.0,435.0 953.1,433.2 955.2,431.4 957.3,429.9 959.4,428.8 961.5,427.0 963.5,426.9 965.6,425.8 967.6,425.3 969.7,424.9 971.8,424.4 973.8,424.1 975.9,423.8 977.9,423.3 980.0,422.8 982.0,422.0 984.2,422.1 986.3,422.2 988.5,421.6 990.6,421.4 992.8,421.5 994.9,421.1 997.1,421.4 999.2,420.9 1001.4,420.9 1003.5,420.7 1005.7,420.6 1007.8,422.3 1009.8,423.8 1011.9,425.8 1013.9,427.9 1016.0,429.7 1018.2,434.0 1020.3,437.1 1022.5,441.8 1024.7,445.7 1026.8,449.4 1029.0,453.0 1031.5,451.5 1034.0,450.5 1036.8,444.8 1039.6,440.0 1041.6,439.4 1043.7,437.5 1045.7,436.7 1047.8,436.3 1049.8,435.0 1051.8,434.1 1053.9,433.1 1055.9,431.4 1058.0,430.7 1060.0,429.7 1062.0,429.9 1064.1,430.8 1066.1,431.5 1068.2,432.4 1070.2,432.5 1072.2,433.5 1074.3,433.5 1076.3,434.3 1078.3,434.7 1080.4,435.8 1082.4,436.4 1084.5,437.1 1086.5,437.5 1088.7,438.9 1090.9,440.9 1093.1,442.2 1095.4,443.6 1097.6,445.4 1099.8,446.2 1102.0,448.0 1104.0,446.6 1106.0,445.6 1108.0,444.4 1110.0,443.5 1112.0,442.0 1114.0,440.2 1116.0,439.8 1118.0,438.1 1120.0,436.6 1122.0,436.0 1124.0,434.6 1126.0,433.6 1128.0,432.0 1130.1,434.2 1132.2,436.0 1134.3,438.4 1136.4,440.5 1138.5,442.7 1140.5,441.1 1142.6,439.9 1144.6,438.0 1146.6,436.7 1148.7,435.1 1150.7,433.6 1152.7,432.6 1154.8,431.4 1156.8,429.7 1158.8,431.2 1160.9,433.2 1162.9,434.5 1165.0,436.1 1167.0,437.5 1169.3,435.8 1171.5,434.9 1173.8,432.8 1176.0,431.8 1178.3,429.7 1180.5,429.0 1182.8,427.0 1184.9,426.8 1187.0,425.9 1189.2,426.0 1191.3,425.1 1193.4,424.9 1195.5,424.5 1197.6,424.0 1199.8,423.7 1201.9,423.1 1204.0,422.9 1206.1,422.2 1208.2,422.5 1210.3,421.7 1212.5,421.6 1214.6,420.9 1216.7,420.6 1218.7,421.4 1220.7,421.7 1222.8,421.9 1224.8,422.4 1226.8,422.8 1228.8,423.2 1230.8,423.0 1232.8,423.5 1234.8,423.4 1236.9,424.0 1238.9,424.3 1240.9,425.0 1242.9,424.7 1244.9,425.8 1247.0,425.5 1249.0,426.2 1251.0,426.6 1253.0,427.0 1255.1,426.8 1257.1,426.0 1259.2,424.9 1261.2,424.9 1263.3,423.9 1265.3,423.7 1267.4,422.9 1269.5,422.9 1271.5,421.8 1273.6,421.1 1275.6,420.5 1277.7,420.6 1279.7,419.4 1281.8,419.0 1283.8,418.9 1285.8,419.4 1287.9,419.7 1289.9,420.2 1291.9,419.5 1293.9,419.9 1296.0,420.5 1298.0,420.4 1300.0,420.6 1302.0,420.8 1304.0,420.8 1306.1,420.2 1308.1,420.2 1310.1,420.3 1312.1,420.4 1314.1,420.3 1316.1,420.4 1318.2,420.3 1320.2,420.2 1322.2,420.7 1324.2,420.9 1326.2,420.4 1328.2,420.3 1330.3,420.9 1332.3,420.3 1334.3,420.4 1336.3,420.7 1338.3,420.5 1340.4,421.0 1342.4,420.8 1344.4,420.8 1346.4,420.6 1348.4,420.3 1350.4,421.1 1352.5,420.7 1354.5,421.1 1356.5,420.4 1358.5,420.7 1360.5,420.9 1362.6,420.5 1364.6,420.4 1366.6,421.3 1368.6,421.3 1370.6,421.3 1372.6,420.9 1374.7,421.1 1376.7,421.0 1378.7,420.9 1380.7,420.6 1382.7,421.0 1384.8,420.8 1386.8,421.1 1388.8,420.5 1390.8,420.7 1392.8,420.5 1394.8,421.2 1396.9,420.9 1398.9,420.7 1400.9,421.2 1402.9,421.0 1404.9,420.8 1406.9,420.9 1409.0,420.5 1411.0,420.6 1413.0,421.0 1415.0,420.4 1417.1,421.2 1419.1,421.0 1421.2,420.6 1423.2,420.9 1425.2,420.3 1427.3,420.4 1429.3,419.7 1431.3,419.9 1433.4,420.0 1435.4,419.6 1437.5,419.8 1439.5,419.3 1441.5,419.5 1443.6,419.0 1445.6,419.1 1447.7,419.0 1449.7,418.9 1451.7,418.4 1453.8,418.4 1455.8,418.8 1457.8,418.1 1459.9,418.3 1461.9,418.7 1464.0,418.2 1466.0,418.0 1468.0,418.3 1470.1,418.3 1472.1,418.6 1474.1,418.0 1476.2,418.1 1478.2,418.5 1480.2,417.8 1482.3,418.2 1484.3,418.1 1486.3,418.4 1488.4,418.6 1490.4,418.8 1492.4,418.5 1494.5,418.7 1496.5,418.1 1498.6,418.7 1500.6,419.0 1502.6,418.7 1504.7,418.6 1506.7,418.7 1508.7,418.6 1510.8,418.4 1512.8,418.5 1514.8,419.1 1516.9,418.9 1518.9,418.4 1520.9,419.0 1523.0,419.3 1525.0,419.0" fill="none" stroke="#20e0f0" stroke-width="1.3" stroke-linejoin="round" /><polyline points="38.0,445.0 40.3,443.8 42.7,441.8 45.0,440.0 47.2,439.4 49.4,439.2 51.6,437.2 53.8,436.4 56.0,436.0 58.2,434.6 60.4,432.2 62.6,431.9 64.8,429.2 67.1,427.8 69.3,420.1 71.5,425.1 73.7,423.0 75.8,423.2 77.8,422.3 79.9,421.0 82.0,421.0 84.0,425.0 86.0,430.4 88.0,440.7 90.0,448.0 92.4,443.1 94.7,445.8 97.1,447.4 99.4,448.0 101.8,450.0 103.9,448.2 106.1,446.5 108.2,445.7 110.3,443.1 112.5,442.5 114.6,440.0 116.7,439.7 118.9,437.6 121.0,436.0 123.2,434.8 125.4,432.6 127.6,431.1 129.8,430.3 132.1,429.9 134.3,427.9 136.5,427.0 138.7,425.0 140.9,429.1 143.0,426.0 145.2,426.7 147.4,428.6 149.5,434.6 151.7,426.0 153.7,429.0 155.7,429.0 157.8,428.4 159.8,427.1 161.8,426.7 163.8,425.8 165.8,425.6 167.9,424.6 169.9,424.0 171.9,423.2 173.9,422.6 176.0,421.9 178.0,426.9 180.0,421.0 182.0,414.3 184.0,424.4 186.0,419.6 188.0,419.0 190.0,419.8 192.0,418.8 194.0,418.5 196.0,411.8 198.0,418.4 200.0,417.8 202.0,411.3 204.0,417.0 206.0,416.7 208.0,416.0 210.2,422.8 212.3,417.4 214.5,418.2 216.7,419.1 218.8,419.8 221.0,420.7 223.2,421.5 225.3,422.7 227.5,423.0 229.5,423.5 231.6,422.3 233.6,421.9 235.6,422.2 237.7,421.6 239.7,416.7 241.7,422.3 243.8,421.7 245.8,417.4 247.8,422.3 249.8,422.2 251.9,421.8 253.9,421.7 255.9,425.6 258.0,421.1 260.0,421.0 262.1,421.3 264.2,422.1 266.4,423.1 268.5,423.8 270.6,424.2 272.8,424.5 274.9,423.8 277.0,425.0 279.1,427.6 281.3,431.8 283.4,434.1 285.6,443.0 287.7,439.7 289.9,443.6 292.0,452.0 294.2,447.0 296.4,448.8 298.6,448.3 300.8,450.8 303.0,451.0 305.0,452.5 307.0,454.9 309.0,457.6 311.0,460.0 313.0,457.4 315.0,453.8 317.0,451.7 319.0,449.5 321.0,446.0 323.3,444.7 325.6,444.0 327.9,442.5 330.2,441.3 332.5,440.0 335.0,441.8 337.5,444.6 340.0,447.0 342.1,450.9 344.3,453.9 346.4,456.4 348.6,460.1 350.7,463.5 352.9,466.5 355.0,470.0 357.0,472.0 359.1,474.0 361.1,474.9 363.1,477.1 365.2,479.7 367.2,480.9 369.2,482.6 371.3,485.6 373.3,486.8 375.4,489.7 377.4,490.9 379.4,492.1 381.5,494.8 383.5,496.5 385.7,494.5 387.8,493.7 390.0,491.5 392.1,484.3 394.3,476.7 396.4,468.8 398.5,462.8 400.6,457.6 402.6,453.6 404.7,447.3 406.8,442.7 408.8,440.8 410.8,439.1 412.9,437.9 414.9,437.0 416.9,436.4 418.9,433.9 421.0,432.4 423.0,431.9 425.0,434.0 427.0,428.8 429.0,428.8 431.0,428.1 433.0,427.9 435.0,425.8 437.0,421.9 439.0,425.0 440.0,427.3 441.5,419.0 443.0,428.3 447.0,427.8 450.0,425.8 452.0,428.8 454.4,424.0 455.9,416.1 457.4,425.0 461.4,424.5 464.4,422.5 466.4,425.5 468.8,424.0 470.3,415.8 471.8,425.0 475.8,424.5 478.8,422.5 480.8,425.5 483.2,424.0 484.7,416.5 486.2,425.0 490.2,424.5 493.2,422.5 495.2,425.5 497.6,424.0 499.1,415.6 500.6,425.0 504.6,424.5 507.6,422.5 509.6,425.5 512.0,424.0 513.5,417.2 515.0,425.0 519.0,424.5 522.0,422.5 524.0,425.5 526.4,426.3 527.9,419.1 529.4,427.3 533.4,426.8 536.4,424.8 538.4,427.8 540.8,432.3 542.3,425.4 543.8,433.3 547.8,432.8 550.8,430.8 552.8,433.8 555.2,437.8 556.7,430.2 558.2,438.8 562.2,438.3 565.2,436.3 567.2,439.3 569.6,439.5 571.1,432.8 572.6,440.5 576.6,440.0 579.6,438.0 581.6,441.0 584.0,439.5 585.5,432.7 587.0,440.5 591.0,440.0 594.0,438.0 596.0,441.0 598.4,439.5 599.9,432.7 601.4,440.5 605.4,440.0 608.4,438.0 610.4,441.0 612.8,439.5 614.3,432.6 615.8,440.5 619.8,440.0 622.8,438.0 624.8,441.0 627.2,440.6 628.7,432.5 630.2,441.6 634.2,441.1 637.2,439.1 639.2,442.1 641.6,441.7 643.1,433.9 644.6,442.7 648.6,442.2 651.6,440.2 653.6,443.2 656.0,442.8 657.5,434.4 659.0,443.8 663.0,443.3 666.0,441.3 668.0,444.3 670.4,443.5 671.9,436.6 673.4,444.5 677.4,444.0 680.4,442.0 682.4,445.0 684.8,443.9 686.3,436.4 687.8,444.9 691.8,444.4 694.8,442.4 696.8,445.4 699.2,444.3 700.7,437.7 702.2,445.3 706.2,444.8 709.2,442.8 711.2,445.8 713.6,444.6 715.1,436.7 716.6,445.6 720.6,445.1 723.6,443.1 725.6,446.1 728.0,445.6 729.5,438.0 731.0,446.6 735.0,446.1 738.0,444.1 740.0,447.1 742.4,446.7 743.9,440.0 745.4,447.7 749.4,447.2 752.4,445.2 754.4,448.2 756.8,447.9 758.3,441.3 759.8,448.9 763.8,448.4 766.8,446.4 768.8,449.4 771.2,448.0 772.7,441.0 774.2,449.0 778.2,448.5 781.2,446.5 783.2,449.5 785.6,446.4 787.1,439.6 788.6,447.4 792.6,446.9 795.6,444.9 797.6,447.9 800.0,444.7 801.5,438.0 803.0,445.7 807.0,445.2 810.0,443.2 812.0,446.2 814.4,444.1 815.9,436.1 817.4,445.1 821.4,444.6 824.4,442.6 826.4,445.6 828.8,443.5 830.3,436.2 831.8,444.5 835.8,444.0 838.8,442.0 840.8,445.0 843.2,442.9 844.7,434.5 846.2,443.9 850.2,443.4 853.2,441.4 855.2,444.4 857.6,442.3 859.1,435.2 860.6,443.3 864.6,442.8 867.6,440.8 869.6,443.8 869.3,444.7 871.4,447.0 873.6,448.7 875.7,450.8 877.9,453.4 880.0,455.0 882.0,457.8 884.0,460.9 886.0,462.3 888.0,465.7 890.0,468.0 892.0,470.3 894.0,472.2 896.0,475.5 898.0,477.7 900.0,480.8 902.0,483.2 904.0,485.8 906.0,487.6 908.0,490.3 910.0,493.6 912.0,496.0 914.0,496.6 916.0,497.3 918.0,497.3 920.0,496.8 922.0,497.4 924.0,489.5 926.0,481.7 928.0,474.3 930.0,466.0 932.5,460.3 935.0,455.0 937.8,449.7 940.6,443.0 942.7,441.5 944.8,439.8 946.9,438.5 949.0,436.8 951.0,436.3 953.1,433.3 955.2,432.3 957.3,430.3 959.4,429.8 961.5,428.0 963.5,426.9 965.6,426.4 967.6,426.4 969.7,426.2 971.8,419.9 973.8,424.9 975.9,424.2 977.9,423.8 980.0,428.1 982.0,423.0 984.2,422.3 986.3,421.7 988.5,422.8 990.6,421.9 992.8,421.0 994.9,420.8 997.1,421.7 999.2,421.2 1001.4,419.8 1003.5,420.6 1005.7,420.0 1007.8,421.1 1009.8,423.1 1011.9,425.0 1013.9,425.7 1016.0,428.0 1018.0,430.9 1020.0,432.2 1022.0,434.1 1024.0,437.3 1026.0,438.5 1028.0,434.6 1030.0,437.8 1032.0,445.7 1034.0,448.0 1036.8,451.1 1039.6,441.0 1041.6,440.5 1043.7,438.5 1045.7,437.3 1047.8,431.2 1049.8,436.0 1051.8,434.7 1053.9,434.7 1055.9,432.5 1058.0,432.2 1060.0,431.0 1062.0,430.7 1064.1,432.4 1066.1,432.9 1068.2,432.7 1070.2,432.6 1072.2,433.7 1074.3,434.3 1076.3,434.5 1078.3,433.7 1080.4,434.9 1082.4,434.7 1084.5,435.7 1086.5,436.0 1088.8,439.1 1091.0,441.4 1093.2,442.8 1095.5,445.7 1097.8,447.8 1100.0,444.5 1102.0,449.1 1104.0,449.1 1106.0,448.2 1108.0,446.6 1110.0,452.0 1112.0,444.4 1114.0,443.4 1116.0,442.0 1118.0,440.2 1120.0,438.2 1122.0,436.7 1124.0,431.4 1126.0,435.0 1128.0,433.0 1130.1,435.2 1132.2,441.6 1134.3,439.4 1136.4,441.6 1138.5,444.0 1140.5,442.0 1142.6,441.9 1144.6,439.8 1146.6,437.6 1148.7,437.1 1150.7,435.5 1152.7,438.1 1154.8,432.9 1156.8,437.0 1158.8,432.6 1160.9,428.4 1162.9,436.0 1165.0,436.5 1167.0,438.0 1169.3,442.8 1171.5,434.9 1173.8,429.6 1176.0,432.1 1178.3,431.1 1180.5,429.2 1182.8,428.0 1184.9,427.3 1187.0,427.7 1189.2,427.2 1191.3,426.5 1193.4,426.4 1195.5,425.2 1197.6,425.2 1199.8,424.1 1201.9,423.8 1204.0,423.0 1206.1,423.7 1208.2,423.4 1210.3,422.0 1212.5,421.7 1214.6,420.8 1216.7,421.0 1218.7,420.8 1220.7,422.0 1222.8,418.8 1224.8,421.9 1226.8,428.6 1228.8,423.7 1230.8,423.3 1232.8,424.7 1234.8,424.3 1236.9,424.8 1238.9,424.8 1240.9,425.3 1242.9,419.9 1244.9,426.1 1247.0,427.2 1249.0,426.5 1251.0,427.8 1253.0,428.0 1255.1,427.9 1257.1,426.6 1259.2,425.8 1261.2,425.1 1263.3,424.5 1265.3,425.0 1267.4,424.2 1269.5,416.7 1271.5,422.8 1273.6,422.4 1275.6,421.4 1277.7,420.4 1279.7,420.4 1281.8,420.0 1283.8,419.9 1285.8,421.0 1287.9,420.1 1289.9,421.1 1291.9,421.1 1293.9,420.8 1296.0,420.2 1298.0,421.4 1300.0,421.0 1302.0,420.4 1304.0,427.1 1306.1,420.4 1308.1,416.4 1310.1,420.9 1312.1,420.6 1314.1,421.9 1316.1,421.3 1318.2,421.8 1320.2,421.9 1322.2,421.6 1324.2,421.4 1326.2,421.2 1328.2,421.7 1330.3,421.5 1332.3,420.7 1334.3,421.4 1336.3,415.2 1338.3,421.4 1340.4,421.7 1342.4,421.7 1344.4,417.5 1346.4,421.9 1348.4,421.9 1350.4,420.8 1352.5,420.9 1354.5,420.8 1356.5,421.0 1358.5,416.3 1360.5,421.2 1362.6,427.5 1364.6,421.5 1366.6,421.7 1368.6,421.3 1370.6,422.1 1372.6,421.4 1374.7,422.2 1376.7,422.2 1378.7,420.9 1380.7,421.8 1382.7,421.1 1384.8,422.4 1386.8,421.1 1388.8,421.4 1390.8,422.2 1392.8,422.0 1394.8,422.1 1396.9,421.7 1398.9,421.9 1400.9,421.4 1402.9,421.9 1404.9,417.5 1406.9,422.2 1409.0,425.3 1411.0,421.4 1413.0,422.0 1415.0,421.4 1417.1,421.8 1419.1,425.8 1421.2,420.7 1423.2,422.2 1425.2,427.8 1427.3,421.0 1429.3,420.5 1431.3,421.5 1433.4,421.6 1435.4,420.2 1437.5,421.0 1439.5,425.0 1441.5,421.1 1443.6,419.8 1445.6,419.5 1447.7,419.5 1449.7,419.5 1451.7,420.4 1453.8,420.3 1455.8,419.5 1457.8,418.9 1459.9,419.1 1461.9,418.8 1464.0,419.4 1466.0,419.0 1468.0,410.0 1470.0,426.0 1473.0,419.0 1475.0,419.4 1477.0,419.4 1479.0,418.9 1481.0,418.9 1483.0,424.9 1485.0,418.8 1487.0,418.9 1489.0,419.3 1491.0,419.3 1493.0,418.7 1495.0,419.1 1497.0,418.4 1499.0,414.3 1501.0,418.8 1503.0,418.8 1505.0,418.3 1507.0,418.3 1509.0,418.9 1511.0,419.7 1513.0,423.5 1515.0,418.2 1517.0,418.7 1519.0,418.8 1521.0,418.7 1523.0,418.4 1525.0,419.0" fill="none" stroke="#f4f020" stroke-width="1.3" stroke-linejoin="round" /></g><rect x="341" y="572" width="79" height="5" fill="#3a64e6"/><path d="M28.5,572 V578" stroke="#aaa" stroke-width="1"/><path d="M28,577.5 H652" stroke="#f8f8f8" stroke-width="1.2"/><path d="M30,579 H652" stroke="#e8e8e8" stroke-width="1" stroke-dasharray="2 3"/><path d="M30,614.5 H652" stroke="#e8e8e8" stroke-width="1" stroke-dasharray="2 3"/><path d="M30,650.5 H652" stroke="#e8e8e8" stroke-width="1" stroke-dasharray="2 3"/><path d="M30,757.5 H652" stroke="#e8e8e8" stroke-width="1" stroke-dasharray="2 3"/><path d="M30,793.5 H652" stroke="#e8e8e8" stroke-width="1" stroke-dasharray="2 3"/><path d="M30,865.8 H652" stroke="#e8e8e8" stroke-width="1" stroke-dasharray="2 3"/><path d="M72.5,578 V938" stroke="#e8e8e8" stroke-width="1" stroke-dasharray="3 2"/><path d="M231.5,578 V938" stroke="#e8e8e8" stroke-width="1" stroke-dasharray="3 2"/><path d="M310.5,578 V938" stroke="#e8e8e8" stroke-width="1" stroke-dasharray="3 2"/><path d="M389.5,578 V938" stroke="#e8e8e8" stroke-width="1" stroke-dasharray="3 2"/><path d="M468.5,578 V938" stroke="#e8e8e8" stroke-width="1" stroke-dasharray="3 2"/><path d="M547.5,578 V938" stroke="#e8e8e8" stroke-width="1" stroke-dasharray="3 2"/><path d="M341.5,572 V938" stroke="#eee" stroke-width="1"/><path d="M29,653.5 H652" stroke="#ff1a1a" stroke-width="1.3" stroke-dasharray="8 4 2 4"/><path d="M29,686.5 H652" stroke="#ffa000" stroke-width="1.3" stroke-dasharray="8 4 2 4"/><path d="M29,686.5 H652" stroke="#f0f0f0" stroke-width="1.3" stroke-dasharray="1 11 1 2" stroke-dashoffset="-8"/><rect x="28" y="825" width="624" height="8" fill="#a0522d"/><path d="M28,828.8 H652" stroke="#f4e020" stroke-width="1.2"/><path d="M28,901.5 H652" stroke="#20e0e0" stroke-width="1.2"/><path d="M99.5,762 V793.5" stroke="#20e020" stroke-width="1.2"/><path d="M27.5,578 V793.5" stroke="#20ff20" stroke-width="1.3"/><path d="M27.5,793.5 V866" stroke="#f0f020" stroke-width="1.3"/><path d="M27.5,866 V938.5" stroke="#20e0e0" stroke-width="1.3"/><rect x="24" y="578" width="3" height="1" fill="#20e020"/><rect x="24" y="598" width="3" height="1" fill="#20e020"/><rect x="24" y="620" width="3" height="1" fill="#20e020"/><rect x="24" y="641" width="3" height="1" fill="#20e020"/><rect x="24" y="661" width="3" height="1" fill="#20e020"/><rect x="24" y="682" width="3" height="1" fill="#20e020"/><rect x="24" y="703" width="3" height="1" fill="#20e020"/><rect x="24" y="724" width="3" height="1" fill="#20e020"/><rect x="24" y="744" width="3" height="1" fill="#20e020"/><rect x="24" y="765" width="3" height="1" fill="#20e020"/><rect x="24" y="786" width="3" height="1" fill="#20e020"/><rect x="24" y="793" width="3" height="1" fill="#f0f020"/><rect x="24" y="829" width="3" height="1" fill="#f0f020"/><rect x="24" y="858" width="3" height="1" fill="#f0f020"/><rect x="25.5" y="800" width="2" height="1" fill="#f0f020"/><rect x="25.5" y="807" width="2" height="1" fill="#f0f020"/><rect x="25.5" y="814" width="2" height="1" fill="#f0f020"/><rect x="25.5" y="821" width="2" height="1" fill="#f0f020"/><rect x="25.5" y="836" width="2" height="1" fill="#f0f020"/><rect x="25.5" y="843" width="2" height="1" fill="#f0f020"/><rect x="25.5" y="850" width="2" height="1" fill="#f0f020"/><rect x="24" y="866" width="3" height="1" fill="#20e0e0"/><rect x="24" y="901" width="3" height="1" fill="#20e0e0"/><rect x="24" y="937" width="3" height="1" fill="#20e0e0"/><rect x="25.5" y="873" width="2" height="1" fill="#20e0e0"/><rect x="25.5" y="880" width="2" height="1" fill="#20e0e0"/><rect x="25.5" y="887" width="2" height="1" fill="#20e0e0"/><rect x="25.5" y="894" width="2" height="1" fill="#20e0e0"/><rect x="25.5" y="908" width="2" height="1" fill="#20e0e0"/><rect x="25.5" y="915" width="2" height="1" fill="#20e0e0"/><rect x="25.5" y="922" width="2" height="1" fill="#20e0e0"/><rect x="25.5" y="929" width="2" height="1" fill="#20e0e0"/><text transform="translate(19,588) rotate(-90)" fill="#20e020" font-size="9.5" text-anchor="middle">3000</text><text transform="translate(19,686) rotate(-90)" fill="#20e020" font-size="9.5" text-anchor="middle">8000</text><text transform="translate(19,786) rotate(-90)" fill="#f0f020" font-size="9.5" text-anchor="middle">17000</text><text transform="translate(19,829) rotate(-90)" fill="#f0f020" font-size="9.5" text-anchor="middle">0</text><text transform="translate(19,862) rotate(-90)" fill="#f0f020" font-size="9.5" text-anchor="middle">-1</text><text transform="translate(19,871) rotate(-90)" fill="#20e0e0" font-size="9.5" text-anchor="middle">1</text><text transform="translate(19,901.5) rotate(-90)" fill="#20e0e0" font-size="9.5" text-anchor="middle">0</text><path d="M28,938.5 H652" stroke="#f4f4f4" stroke-width="1.2"/><path d="M39.3,939 V941" stroke="#ddd" stroke-width="1"/><path d="M55.2,939 V941" stroke="#ddd" stroke-width="1"/><path d="M71.2,939 V943" stroke="#ddd" stroke-width="1"/><path d="M87.2,939 V941" stroke="#ddd" stroke-width="1"/><path d="M103.1,939 V941" stroke="#ddd" stroke-width="1"/><path d="M119.1,939 V941" stroke="#ddd" stroke-width="1"/><path d="M135.0,939 V941" stroke="#ddd" stroke-width="1"/><path d="M151.0,939 V943" stroke="#ddd" stroke-width="1"/><path d="M167.0,939 V941" stroke="#ddd" stroke-width="1"/><path d="M182.9,939 V941" stroke="#ddd" stroke-width="1"/><path d="M198.9,939 V941" stroke="#ddd" stroke-width="1"/><path d="M214.8,939 V941" stroke="#ddd" stroke-width="1"/><path d="M230.8,939 V943" stroke="#ddd" stroke-width="1"/><path d="M246.8,939 V941" stroke="#ddd" stroke-width="1"/><path d="M262.7,939 V941" stroke="#ddd" stroke-width="1"/><path d="M278.7,939 V941" stroke="#ddd" stroke-width="1"/><path d="M294.6,939 V941" stroke="#ddd" stroke-width="1"/><path d="M310.6,939 V943" stroke="#ddd" stroke-width="1"/><path d="M326.6,939 V941" stroke="#ddd" stroke-width="1"/><path d="M342.5,939 V941" stroke="#ddd" stroke-width="1"/><path d="M358.5,939 V941" stroke="#ddd" stroke-width="1"/><path d="M374.4,939 V941" stroke="#ddd" stroke-width="1"/><path d="M390.4,939 V943" stroke="#ddd" stroke-width="1"/><path d="M406.4,939 V941" stroke="#ddd" stroke-width="1"/><path d="M422.3,939 V941" stroke="#ddd" stroke-width="1"/><path d="M438.3,939 V941" stroke="#ddd" stroke-width="1"/><path d="M454.2,939 V941" stroke="#ddd" stroke-width="1"/><path d="M470.2,939 V943" stroke="#ddd" stroke-width="1"/><path d="M486.2,939 V941" stroke="#ddd" stroke-width="1"/><path d="M502.1,939 V941" stroke="#ddd" stroke-width="1"/><path d="M518.1,939 V941" stroke="#ddd" stroke-width="1"/><path d="M534.0,939 V941" stroke="#ddd" stroke-width="1"/><path d="M550.0,939 V943" stroke="#ddd" stroke-width="1"/><path d="M566.0,939 V941" stroke="#ddd" stroke-width="1"/><path d="M581.9,939 V941" stroke="#ddd" stroke-width="1"/><path d="M597.9,939 V941" stroke="#ddd" stroke-width="1"/><path d="M613.8,939 V941" stroke="#ddd" stroke-width="1"/><path d="M629.8,939 V943" stroke="#ddd" stroke-width="1"/><path d="M645.8,939 V941" stroke="#ddd" stroke-width="1"/><text x="64.5" y="952.6" textLength="13.5" lengthAdjust="spacingAndGlyphs" fill="#f0f0f0" font-size="9.5">160</text><text x="144.3" y="952.6" textLength="13.5" lengthAdjust="spacingAndGlyphs" fill="#f0f0f0" font-size="9.5">165</text><text x="224.1" y="952.6" textLength="13.5" lengthAdjust="spacingAndGlyphs" fill="#f0f0f0" font-size="9.5">170</text><text x="303.9" y="952.6" textLength="13.5" lengthAdjust="spacingAndGlyphs" fill="#f0f0f0" font-size="9.5">175</text><text x="383.7" y="952.6" textLength="13.5" lengthAdjust="spacingAndGlyphs" fill="#f0f0f0" font-size="9.5">180</text><text x="463.5" y="952.6" textLength="13.5" lengthAdjust="spacingAndGlyphs" fill="#f0f0f0" font-size="9.5">185</text><text x="543.3" y="952.6" textLength="13.5" lengthAdjust="spacingAndGlyphs" fill="#f0f0f0" font-size="9.5">190</text><text x="623.1" y="952.6" textLength="13.5" lengthAdjust="spacingAndGlyphs" fill="#f0f0f0" font-size="9.5">195</text><text x="656.5" y="952.6" textLength="3.5" lengthAdjust="spacingAndGlyphs" fill="#f0f0f0" font-size="9.5">s</text><text x="32.6" y="933" textLength="43.9" lengthAdjust="spacingAndGlyphs" fill="#ffffff" font-size="9.5">176.95272</text><rect x="655.5" y="578" width="5" height="370" fill="#3a64e0" stroke="#aaa" stroke-width="0.8"/><text x="710.5" y="587.8" textLength="21.5" lengthAdjust="spacingAndGlyphs" fill="#20e020" font-size="9.5">NEng</text><text x="714" y="601" textLength="20.0" lengthAdjust="spacingAndGlyphs" fill="#20e020" font-size="9.5">2034</text><text x="671" y="707" textLength="61.0" lengthAdjust="spacingAndGlyphs" fill="#f0f020" font-size="9.5">RPM_over8000</text><text x="728.7" y="720.5" textLength="4.9" lengthAdjust="spacingAndGlyphs" fill="#f0f020" font-size="9.5">0</text><text x="674.5" y="826.6" textLength="57.3" lengthAdjust="spacingAndGlyphs" fill="#20e0e0" font-size="9.5">Sum_OverRev</text><text x="729" y="840.8" textLength="4.6" lengthAdjust="spacingAndGlyphs" fill="#20e0e0" font-size="9.5">0</text><rect x="1152" y="572" width="90" height="4.5" fill="#3a64e6"/><path d="M1512.5,571 V578" stroke="#aaa" stroke-width="1"/><path d="M793,602.5 H1512" stroke="#e8e8e8" stroke-width="1" stroke-dasharray="2 3"/><path d="M793,652.5 H1512" stroke="#e8e8e8" stroke-width="1" stroke-dasharray="2 3"/><path d="M793,751.5 H1512" stroke="#e8e8e8" stroke-width="1" stroke-dasharray="2 3"/><path d="M793,776.5 H1512" stroke="#e8e8e8" stroke-width="1" stroke-dasharray="2 3"/><path d="M842.5,578 V938" stroke="#e8e8e8" stroke-width="1" stroke-dasharray="3 2"/><path d="M933.5,578 V938" stroke="#e8e8e8" stroke-width="1" stroke-dasharray="3 2"/><path d="M1025.5,578 V938" stroke="#e8e8e8" stroke-width="1" stroke-dasharray="3 2"/><path d="M1207.5,578 V938" stroke="#e8e8e8" stroke-width="1" stroke-dasharray="3 2"/><path d="M1299.5,578 V938" stroke="#e8e8e8" stroke-width="1" stroke-dasharray="3 2"/><path d="M1391.5,578 V938" stroke="#e8e8e8" stroke-width="1" stroke-dasharray="3 2"/><path d="M793,578.5 H1512" stroke="#22ee22" stroke-width="1.5"/><path d="M786,578 H792" stroke="#22ee22" stroke-width="1"/><path d="M793,628 H1512" stroke="#20e8f0" stroke-width="1.3"/><path d="M793,628.5 H1512" stroke="#dfffff" stroke-width="1" stroke-dasharray="2 3"/><path d="M793,727 H1512" stroke="#f0f020" stroke-width="1.3"/><path d="M793,801 H1512" stroke="#ff20ff" stroke-width="1.3"/><rect x="793" y="826" width="720" height="2" fill="#f4f4f4"/><path d="M793,829.5 H1512" stroke="#e8e8e8" stroke-width="1" stroke-dasharray="2 3"/><path d="M793,840.5 H1512" stroke="#e8e8e8" stroke-width="1" stroke-dasharray="2 3"/><path d="M793,851.5 H1512" stroke="#e8e8e8" stroke-width="1" stroke-dasharray="2 3"/><path d="M793,872.5 H1512" stroke="#e8e8e8" stroke-width="1" stroke-dasharray="2 3"/><path d="M793,883.5 H1512" stroke="#e8e8e8" stroke-width="1" stroke-dasharray="2 3"/><path d="M793,905.5 H1512" stroke="#e8e8e8" stroke-width="1" stroke-dasharray="2 3"/><path d="M793,916.5 H1512" stroke="#e8e8e8" stroke-width="1" stroke-dasharray="2 3"/><path d="M788,938.5 H1512" stroke="#f4f4f4" stroke-width="1.2"/><rect x="789" y="628" width="3" height="1" fill="#20e0e0"/><rect x="789" y="683" width="3" height="1" fill="#20e0e0"/><rect x="789" y="683" width="2.5" height="1" fill="#2020ff"/><rect x="789" y="702" width="2.5" height="1" fill="#2020ff"/><rect x="789" y="706" width="2.5" height="1" fill="#2020ff"/><rect x="789" y="711" width="2.5" height="1" fill="#2020ff"/><rect x="789" y="716" width="2.5" height="1" fill="#2020ff"/><rect x="789" y="721" width="2.5" height="1" fill="#2020ff"/><rect x="789" y="727" width="2.5" height="1" fill="#2020ff"/><rect x="789" y="732" width="3" height="1" fill="#f0f020"/><rect x="789" y="743" width="3" height="1" fill="#f0f020"/><rect x="789" y="753" width="3" height="1" fill="#f0f020"/><rect x="789" y="763" width="3" height="1" fill="#f0f020"/><rect x="789" y="771" width="3" height="1" fill="#f0f020"/><rect x="789" y="781" width="2" height="1" fill="#ff20ff"/><rect x="789" y="786" width="2" height="1" fill="#ff20ff"/><rect x="789" y="791" width="2" height="1" fill="#ff20ff"/><rect x="789" y="796" width="2" height="1" fill="#ff20ff"/><rect x="789" y="801" width="2" height="1" fill="#ff20ff"/><rect x="789" y="806" width="2" height="1" fill="#ff20ff"/><rect x="789" y="811" width="2" height="1" fill="#ff20ff"/><rect x="789" y="816" width="2" height="1" fill="#ff20ff"/><rect x="789" y="821" width="2" height="1" fill="#ff20ff"/><rect x="789" y="834" width="3" height="1" fill="#f0f0f0"/><rect x="789" y="845" width="3" height="1" fill="#f0f0f0"/><rect x="789" y="856" width="3" height="1" fill="#f0f0f0"/><rect x="789" y="877" width="3" height="1" fill="#f0f0f0"/><rect x="789" y="883" width="3" height="1" fill="#f0f0f0"/><rect x="789" y="900" width="3" height="1" fill="#f0f0f0"/><rect x="789" y="911" width="3" height="1" fill="#f0f0f0"/><rect x="789" y="932" width="3" height="1" fill="#f0f0f0"/><text x="757" y="587.5" textLength="30.0" lengthAdjust="spacingAndGlyphs" fill="#20e020" font-size="9.5">Phased</text><text x="770.5" y="625" textLength="16.5" lengthAdjust="spacingAndGlyphs" fill="#20e020" font-size="9.5">Stall</text><text x="757" y="637" textLength="30.0" lengthAdjust="spacingAndGlyphs" fill="#20e0e0" font-size="9.5">Phased</text><text x="770.5" y="675" textLength="16.5" lengthAdjust="spacingAndGlyphs" fill="#20e0e0" font-size="9.5">Stall</text><text x="762" y="687" textLength="25.0" lengthAdjust="spacingAndGlyphs" fill="#2020ff" font-size="9.5">Ended</text><text x="762" y="705" textLength="25.0" lengthAdjust="spacingAndGlyphs" fill="#2020ff" font-size="9.5">Active</text><text x="773" y="723.75" textLength="14.0" lengthAdjust="spacingAndGlyphs" fill="#2020ff" font-size="9.5">Off</text><text x="757" y="736" textLength="30.0" lengthAdjust="spacingAndGlyphs" fill="#f0f020" font-size="9.5">Phased</text><text x="770.5" y="773.75" textLength="16.5" lengthAdjust="spacingAndGlyphs" fill="#f0f020" font-size="9.5">Stall</text><text x="782" y="785.75" textLength="5.0" lengthAdjust="spacingAndGlyphs" fill="#ff20ff" font-size="9.5">G</text><text x="757" y="804.5" textLength="30.0" lengthAdjust="spacingAndGlyphs" fill="#ff20ff" font-size="9.5">Phased</text><text x="755.75" y="824.5" textLength="31.2" lengthAdjust="spacingAndGlyphs" fill="#ff20ff" font-size="9.5">Phasing</text><text x="776.7" y="837.6" textLength="10.3" lengthAdjust="spacingAndGlyphs" fill="#f0f0f0" font-size="9.5">20</text><text x="778" y="858.8" textLength="9.0" lengthAdjust="spacingAndGlyphs" fill="#f0f0f0" font-size="9.5">10</text><text x="782" y="886.4" textLength="5.0" lengthAdjust="spacingAndGlyphs" fill="#f0f0f0" font-size="9.5">0</text><text x="774" y="913.75" textLength="13.0" lengthAdjust="spacingAndGlyphs" fill="#f0f0f0" font-size="9.5">-10</text><text x="774" y="936.5" textLength="13.0" lengthAdjust="spacingAndGlyphs" fill="#f0f0f0" font-size="9.5">-20</text><text x="796" y="932.6" textLength="43.0" lengthAdjust="spacingAndGlyphs" fill="#ffffff" font-size="9.5">176.95272</text><rect x="1513.5" y="578" width="5" height="248" fill="#3a64e0" stroke="#aaa" stroke-width="0.8"/><rect x="1513.5" y="830" width="5" height="126" fill="#22dd22" stroke="#aaa" stroke-width="0.8"/><text x="1545.5" y="587.5" textLength="40.5" lengthAdjust="spacingAndGlyphs" fill="#20e020" font-size="9.5">SyncState</text><text x="1558" y="601" textLength="29.0" lengthAdjust="spacingAndGlyphs" fill="#20e020" font-size="9.5">Phased</text><text x="1536" y="637.5" textLength="50.0" lengthAdjust="spacingAndGlyphs" fill="#20e0e0" font-size="9.5">Crank_State</text><text x="1558" y="650" textLength="29.0" lengthAdjust="spacingAndGlyphs" fill="#20e0e0" font-size="9.5">Phased</text><text x="1531" y="686" textLength="54.5" lengthAdjust="spacingAndGlyphs" fill="#2020ff" font-size="9.5">CamlessState</text><text x="1574" y="699" textLength="13.0" lengthAdjust="spacingAndGlyphs" fill="#2020ff" font-size="9.5">Off</text><text x="1531" y="735" textLength="55.0" lengthAdjust="spacingAndGlyphs" fill="#f0f020" font-size="9.5">aCam1_State</text><text x="1558" y="748" textLength="29.0" lengthAdjust="spacingAndGlyphs" fill="#f0f020" font-size="9.5">Phased</text><text x="1533.75" y="784.5" textLength="52.2" lengthAdjust="spacingAndGlyphs" fill="#ff20ff" font-size="9.5">tCam1_State</text><text x="1558" y="797" textLength="29.0" lengthAdjust="spacingAndGlyphs" fill="#ff20ff" font-size="9.5">Phased</text><text x="1531.7" y="839.5" textLength="50.3" lengthAdjust="spacingAndGlyphs" fill="#f0f0f0" font-size="9.5">aCam1_Shift</text><text x="1563" y="852" textLength="21.5" lengthAdjust="spacingAndGlyphs" fill="#f0f0f0" font-size="9.5">-4.15</text><g clip-path="url(#cp3b)"><polyline points="793.5,892.5 793.5,889.5 794.5,889.5 794.5,889.5 794.5,893.5 796.5,893.5 796.5,893.5 796.5,893.5 798.5,893.5 798.5,893.5 798.5,892.5 799.5,892.5 799.5,892.5 799.5,888.5 800.5,888.5 800.5,888.5 800.5,895.5 802.5,895.5 802.5,895.5 802.5,889.5 803.5,889.5 803.5,889.5 803.5,890.5 806.5,890.5 806.5,890.5 806.5,891.5 807.5,891.5 807.5,891.5 807.5,892.5 810.5,892.5 810.5,892.5 810.5,888.5 813.5,888.5 813.5,888.5 813.5,891.5 816.5,891.5 816.5,891.5 816.5,890.5 817.5,890.5 817.5,890.5 817.5,891.5 819.5,891.5 819.5,891.5 819.5,891.5 821.5,891.5 821.5,891.5 821.5,894.5 824.5,894.5 824.5,894.5 824.5,892.5 826.5,892.5 826.5,892.5 826.5,889.5 828.5,889.5 828.5,889.5 828.5,892.5 829.5,892.5 829.5,892.5 829.5,891.5 832.5,891.5 832.5,891.5 832.5,894.5 834.5,894.5 834.5,894.5 834.5,892.5 835.5,892.5 835.5,892.5 835.5,891.5 837.5,891.5 837.5,891.5 837.5,890.5 840.5,890.5 840.5,890.5 840.5,891.5 842.5,891.5 842.5,891.5 842.5,891.5 844.5,891.5 844.5,891.5 844.5,892.5 845.5,892.5 845.5,892.5 845.5,891.5 846.5,891.5 846.5,891.5 846.5,893.5 847.5,893.5 847.5,893.5 847.5,889.5 849.5,889.5 849.5,889.5 849.5,891.5 851.5,891.5 851.5,891.5 851.5,890.5 852.5,890.5 852.5,890.5 852.5,894.5 854.5,894.5 854.5,894.5 854.5,891.5 855.5,891.5 855.5,891.5 855.5,889.5 856.5,889.5 856.5,889.5 856.5,892.5 859.5,892.5 859.5,892.5 859.5,891.5 860.5,891.5 860.5,891.5 860.5,891.5 861.5,891.5 861.5,891.5 861.5,895.5 862.5,895.5 862.5,895.5 862.5,889.5 864.5,889.5 864.5,889.5 864.5,891.5 866.5,891.5 866.5,891.5 866.5,890.5 867.5,890.5 867.5,890.5 867.5,893.5 868.5,893.5 868.5,893.5 868.5,892.5 869.5,892.5 869.5,892.5 869.5,889.5 871.5,889.5 871.5,889.5 871.5,890.5 872.5,890.5 872.5,890.5 872.5,893.5 873.5,893.5 873.5,893.5 873.5,889.5 875.5,889.5 875.5,889.5 875.5,889.5 878.5,889.5 878.5,889.5 878.5,891.5 879.5,891.5 879.5,891.5 879.5,889.5 880.5,889.5 880.5,889.5 880.5,892.5 881.5,892.5 881.5,892.5 881.5,890.5 883.5,890.5 883.5,890.5 883.5,890.5 885.5,890.5 885.5,890.5 885.5,893.5 886.5,893.5 886.5,893.5 886.5,893.5 887.5,893.5 887.5,893.5 887.5,891.5 888.5,891.5 888.5,891.5 888.5,895.5 890.5,895.5 890.5,895.5 890.5,891.5 891.5,891.5 891.5,891.5 891.5,894.5 892.5,894.5 892.5,894.5 892.5,891.5 893.5,891.5 893.5,891.5 893.5,888.5 894.5,888.5 894.5,888.5 894.5,890.5 895.5,890.5 895.5,890.5 895.5,891.5 897.5,891.5 897.5,891.5 897.5,893.5 898.5,893.5 898.5,893.5 898.5,891.5 901.5,891.5 901.5,891.5 901.5,895.5 903.5,895.5 903.5,895.5 903.5,892.5 905.5,892.5 905.5,892.5 905.5,894.5 907.5,894.5 907.5,894.5 907.5,894.5 908.5,894.5 908.5,894.5 908.5,893.5 910.5,893.5 910.5,893.5 910.5,894.5 912.5,894.5 912.5,894.5 912.5,892.5 913.5,892.5 913.5,892.5 913.5,891.5 914.5,891.5 914.5,891.5 914.5,891.5 915.5,891.5 915.5,891.5 915.5,894.5 916.5,894.5 916.5,894.5 916.5,890.5 917.5,890.5 917.5,890.5 917.5,892.5 920.5,892.5 920.5,892.5 920.5,888.5 921.5,888.5 921.5,888.5 921.5,894.5 923.5,894.5 923.5,894.5 923.5,894.5 924.5,894.5 924.5,894.5 924.5,895.5 926.5,895.5 926.5,895.5 926.5,890.5 927.5,890.5 927.5,890.5 927.5,895.5 928.5,895.5 928.5,895.5 928.5,895.5 929.5,895.5 929.5,895.5 929.5,891.5 932.5,891.5 932.5,891.5 932.5,895.5 933.5,895.5 933.5,895.5 933.5,895.5 934.5,895.5 934.5,895.5 934.5,889.5 935.5,889.5 935.5,889.5 935.5,892.5 937.5,892.5 937.5,892.5 937.5,894.5 938.5,894.5 938.5,894.5 938.5,891.5 939.5,891.5 939.5,891.5 939.5,890.5 941.5,890.5 941.5,890.5 941.5,890.5 943.5,890.5 943.5,890.5 943.5,889.5 945.5,889.5 945.5,889.5 945.5,892.5 947.5,892.5 947.5,892.5 947.5,894.5 948.5,894.5 948.5,894.5 948.5,889.5 950.5,889.5 950.5,889.5 950.5,888.5 952.5,888.5 952.5,888.5 952.5,892.5 953.5,892.5 953.5,892.5 953.5,890.5 954.5,890.5 954.5,890.5 954.5,893.5 955.5,893.5 955.5,893.5 955.5,890.5 956.5,890.5 956.5,890.5 956.5,895.5 957.5,895.5 957.5,895.5 957.5,889.5 958.5,889.5 958.5,889.5 958.5,894.5 959.5,894.5 959.5,894.5 959.5,891.5 961.5,891.5 961.5,891.5 961.5,894.5 962.5,894.5 962.5,894.5 962.5,895.5 963.5,895.5 963.5,895.5 963.5,891.5 966.5,891.5 966.5,891.5 966.5,893.5 967.5,893.5 967.5,893.5 967.5,891.5 969.5,891.5 969.5,891.5 969.5,891.5 971.5,891.5 971.5,891.5 971.5,891.5 972.5,891.5 972.5,891.5 972.5,892.5 974.5,892.5 974.5,892.5 974.5,894.5 977.5,894.5 977.5,894.5 977.5,893.5 978.5,893.5 978.5,893.5 978.5,889.5 981.5,889.5 981.5,889.5 981.5,889.5 984.5,889.5 984.5,889.5 984.5,894.5 986.5,894.5 986.5,894.5 986.5,890.5 988.5,890.5 988.5,890.5 988.5,896.5 989.5,896.5 989.5,896.5 989.5,891.5 991.5,891.5 991.5,891.5 991.5,898.5 993.5,898.5 993.5,898.5 993.5,891.5 994.5,891.5 994.5,891.5 994.5,888.5 996.5,888.5 996.5,888.5 996.5,891.5 997.5,891.5 997.5,891.5 997.5,891.5 998.5,891.5 998.5,891.5 998.5,890.5 1001.5,890.5 1001.5,890.5 1001.5,888.5 1002.5,888.5 1002.5,888.5 1002.5,896.5 1004.5,896.5 1004.5,896.5 1004.5,894.5 1005.5,894.5 1005.5,894.5 1005.5,891.5 1006.5,891.5 1006.5,891.5 1006.5,889.5 1007.5,889.5 1007.5,889.5 1007.5,891.5 1008.5,891.5 1008.5,891.5 1008.5,898.5 1009.5,898.5 1009.5,898.5 1009.5,896.5 1010.5,896.5 1010.5,896.5 1010.5,893.5 1012.5,893.5 1012.5,893.5 1012.5,891.5 1013.5,891.5 1013.5,891.5 1013.5,888.5 1014.5,888.5 1014.5,888.5 1014.5,896.5 1015.5,896.5 1015.5,896.5 1015.5,898.5 1017.5,898.5 1017.5,898.5 1017.5,889.5 1019.5,889.5 1019.5,889.5 1019.5,890.5 1021.5,890.5 1021.5,890.5 1021.5,896.5 1022.5,896.5 1022.5,896.5 1022.5,891.5 1023.5,891.5 1023.5,891.5 1023.5,890.5 1026.5,890.5 1026.5,890.5 1026.5,890.5 1027.5,890.5 1027.5,890.5 1027.5,891.5 1028.5,891.5 1028.5,891.5 1028.5,888.5 1029.5,888.5 1029.5,888.5 1029.5,894.5 1030.5,894.5 1030.5,894.5 1030.5,888.5 1031.5,888.5 1031.5,888.5 1031.5,890.5 1032.5,890.5 1032.5,890.5 1032.5,890.5 1033.5,890.5 1033.5,890.5 1033.5,890.5 1035.5,890.5 1035.5,890.5 1035.5,889.5 1038.5,889.5 1038.5,889.5 1038.5,895.5 1039.5,895.5 1039.5,895.5 1039.5,891.5 1040.5,891.5 1040.5,891.5 1040.5,889.5 1041.5,889.5 1041.5,889.5 1041.5,896.5 1042.5,896.5 1042.5,896.5 1042.5,895.5 1043.5,895.5 1043.5,895.5 1043.5,897.5 1044.5,897.5 1044.5,897.5 1044.5,889.5 1045.5,889.5 1045.5,889.5 1045.5,888.5 1046.5,888.5 1046.5,888.5 1046.5,890.5 1048.5,890.5 1048.5,890.5 1048.5,891.5 1049.5,891.5 1049.5,891.5 1049.5,890.5 1050.5,890.5 1050.5,890.5 1050.5,889.5 1051.5,889.5 1051.5,889.5 1051.5,894.5 1053.5,894.5 1053.5,894.5 1053.5,890.5 1054.5,890.5 1054.5,890.5 1054.5,896.5 1055.5,896.5 1055.5,896.5 1055.5,890.5 1056.5,890.5 1056.5,890.5 1056.5,895.5 1057.5,895.5 1057.5,895.5 1057.5,892.5 1058.5,892.5 1058.5,892.5 1058.5,896.5 1059.5,896.5 1059.5,896.5 1059.5,898.5 1062.5,898.5 1062.5,898.5 1062.5,897.5 1065.5,897.5 1065.5,897.5 1065.5,888.5 1066.5,888.5 1066.5,888.5 1066.5,894.5 1068.5,894.5 1068.5,894.5 1068.5,893.5 1069.5,893.5 1069.5,893.5 1069.5,892.5 1070.5,892.5 1070.5,892.5 1070.5,894.5 1071.5,894.5 1071.5,894.5 1071.5,893.5 1073.5,893.5 1073.5,893.5 1073.5,894.5 1074.5,894.5 1074.5,894.5 1074.5,889.5 1075.5,889.5 1075.5,889.5 1075.5,894.5 1076.5,894.5 1076.5,894.5 1076.5,893.5 1077.5,893.5 1077.5,893.5 1077.5,889.5 1079.5,889.5 1079.5,889.5 1079.5,889.5 1080.5,889.5 1080.5,889.5 1080.5,893.5 1081.5,893.5 1081.5,893.5 1081.5,891.5 1083.5,891.5 1083.5,891.5 1083.5,898.5 1085.5,898.5 1085.5,898.5 1085.5,898.5 1088.5,898.5 1088.5,898.5 1088.5,891.5 1091.5,891.5 1091.5,891.5 1091.5,896.5 1094.5,896.5 1094.5,896.5 1094.5,897.5 1096.5,897.5 1096.5,897.5 1096.5,893.5 1099.5,893.5 1099.5,893.5 1099.5,889.5 1100.5,889.5 1100.5,889.5 1100.5,894.5 1101.5,894.5 1101.5,894.5 1101.5,891.5 1104.5,891.5 1104.5,891.5 1104.5,898.5 1106.5,898.5 1106.5,898.5 1106.5,898.5 1107.5,898.5 1107.5,898.5 1107.5,889.5 1109.5,889.5 1109.5,889.5 1109.5,890.5 1111.5,890.5 1111.5,890.5 1111.5,899.5 1113.5,899.5 1113.5,899.5 1113.5,888.5 1115.5,888.5 1115.5,888.5 1115.5,900.5 1117.5,900.5 1117.5,900.5 1117.5,889.5 1119.5,889.5 1119.5,889.5 1119.5,888.5 1122.5,888.5 1122.5,888.5 1122.5,889.5 1124.5,889.5 1124.5,889.5 1124.5,889.5 1126.5,889.5 1126.5,889.5 1126.5,889.5 1127.5,889.5 1127.5,889.5 1127.5,891.5 1128.5,891.5 1128.5,891.5 1128.5,888.5 1129.5,888.5 1129.5,888.5 1129.5,893.5 1130.5,893.5 1130.5,893.5 1130.5,890.5 1131.5,890.5 1131.5,890.5 1131.5,901.5 1132.5,901.5 1132.5,901.5 1132.5,896.5 1134.5,896.5 1134.5,896.5 1134.5,901.5 1137.5,901.5 1137.5,901.5 1137.5,897.5 1138.5,897.5 1138.5,897.5 1138.5,895.5 1140.5,895.5 1140.5,895.5 1140.5,890.5 1142.5,890.5 1142.5,890.5 1142.5,890.5 1143.5,890.5 1143.5,890.5 1143.5,890.5 1144.5,890.5 1144.5,890.5 1144.5,888.5 1145.5,888.5 1145.5,888.5 1145.5,888.5 1146.5,888.5 1146.5,888.5 1146.5,893.5 1148.5,893.5 1148.5,893.5 1148.5,896.5 1149.5,896.5 1149.5,896.5 1149.5,889.5 1150.5,889.5 1150.5,889.5 1150.5,893.5 1151.5,893.5 1151.5,893.5 1151.5,889.5 1153.5,889.5 1153.5,889.5 1153.5,895.5 1155.5,895.5 1155.5,895.5 1155.5,895.5 1156.5,895.5 1156.5,895.5 1156.5,888.5 1159.5,888.5 1159.5,888.5 1159.5,899.5 1160.5,899.5 1160.5,899.5 1160.5,893.5 1161.5,893.5 1161.5,893.5 1161.5,888.5 1164.5,888.5 1164.5,888.5 1164.5,888.5 1165.5,888.5 1165.5,888.5 1165.5,896.5 1168.5,896.5 1168.5,896.5 1168.5,893.5 1170.5,893.5 1170.5,893.5 1170.5,891.5 1171.5,891.5 1171.5,891.5 1171.5,901.5 1172.5,901.5 1172.5,901.5 1172.5,900.5 1175.5,900.5 1175.5,900.5 1175.5,890.5 1177.5,890.5 1177.5,890.5 1177.5,890.5 1180.5,890.5 1180.5,890.5 1180.5,896.5 1182.5,896.5 1182.5,896.5 1182.5,890.5 1185.5,890.5 1185.5,890.5 1185.5,891.5 1186.5,891.5 1186.5,891.5 1186.5,898.5 1189.5,898.5 1189.5,898.5 1189.5,895.5 1192.5,895.5 1192.5,895.5 1192.5,894.5 1193.5,894.5 1193.5,894.5 1193.5,894.5 1195.5,894.5 1195.5,894.5 1195.5,890.5 1196.5,890.5 1196.5,890.5 1196.5,900.5 1197.5,900.5 1197.5,900.5 1197.5,890.5 1200.5,890.5 1200.5,890.5 1200.5,898.5 1201.5,898.5 1201.5,898.5 1201.5,889.5 1202.5,889.5 1202.5,889.5 1202.5,899.5 1205.5,899.5 1205.5,899.5 1205.5,897.5 1206.5,897.5 1206.5,897.5 1206.5,895.5 1207.5,895.5 1207.5,895.5 1207.5,890.5 1208.5,890.5 1208.5,890.5 1208.5,894.5 1210.5,894.5 1210.5,894.5 1210.5,901.5 1212.5,901.5 1212.5,901.5 1212.5,890.5 1213.5,890.5 1213.5,890.5 1213.5,888.5 1215.5,888.5 1215.5,888.5 1215.5,890.5 1217.5,890.5 1217.5,890.5 1217.5,896.5 1219.5,896.5 1219.5,896.5 1219.5,897.5 1220.5,897.5 1220.5,897.5 1220.5,901.5 1223.5,901.5 1223.5,901.5 1223.5,888.5 1224.5,888.5 1224.5,888.5 1224.5,895.5 1227.5,895.5 1227.5,895.5 1227.5,898.5 1229.5,898.5 1229.5,898.5 1229.5,889.5 1232.5,889.5 1232.5,889.5 1232.5,895.5 1233.5,895.5 1233.5,895.5 1233.5,890.5 1236.5,890.5 1236.5,890.5 1236.5,889.5 1238.5,889.5 1238.5,889.5 1238.5,889.5 1239.5,889.5 1239.5,889.5 1239.5,896.5 1242.5,896.5 1242.5,896.5 1242.5,889.5 1244.5,889.5 1244.5,889.5 1244.5,888.5 1247.5,888.5 1247.5,888.5 1247.5,891.5 1249.5,891.5 1249.5,891.5 1249.5,889.5 1250.5,889.5 1250.5,889.5 1250.5,895.5 1251.5,895.5 1251.5,895.5 1251.5,898.5 1252.5,898.5 1252.5,898.5 1252.5,890.5 1255.5,890.5 1255.5,890.5 1255.5,895.5 1257.5,895.5 1257.5,895.5 1257.5,899.5 1259.5,899.5 1259.5,899.5 1259.5,891.5 1261.5,891.5 1261.5,891.5 1261.5,899.5 1263.5,899.5 1263.5,899.5 1263.5,888.5 1264.5,888.5 1264.5,888.5 1264.5,893.5 1267.5,893.5 1267.5,893.5 1267.5,888.5 1268.5,888.5 1268.5,888.5 1268.5,890.5 1269.5,890.5 1269.5,890.5 1269.5,891.5 1270.5,891.5 1270.5,891.5 1270.5,888.5 1271.5,888.5 1271.5,888.5 1271.5,898.5 1272.5,898.5 1272.5,898.5 1272.5,898.5 1274.5,898.5 1274.5,898.5 1274.5,893.5 1277.5,893.5 1277.5,893.5 1277.5,895.5 1278.5,895.5 1278.5,895.5 1278.5,900.5 1279.5,900.5 1279.5,900.5 1279.5,888.5 1280.5,888.5 1280.5,888.5 1280.5,891.5 1281.5,891.5 1281.5,891.5 1281.5,898.5 1282.5,898.5 1282.5,898.5 1282.5,897.5 1283.5,897.5 1283.5,897.5 1283.5,894.5 1284.5,894.5 1284.5,894.5 1284.5,894.5 1285.5,894.5 1285.5,894.5 1285.5,896.5 1287.5,896.5 1287.5,896.5 1287.5,888.5 1288.5,888.5 1288.5,888.5 1288.5,899.5 1289.5,899.5 1289.5,899.5 1289.5,896.5 1292.5,896.5 1292.5,896.5 1292.5,897.5 1294.5,897.5 1294.5,897.5 1294.5,888.5 1296.5,888.5 1296.5,888.5 1296.5,889.5 1298.5,889.5 1298.5,889.5 1298.5,893.5 1300.5,893.5 1300.5,893.5 1300.5,894.5 1301.5,894.5 1301.5,894.5 1301.5,895.5 1303.5,895.5 1303.5,895.5 1303.5,891.5 1306.5,891.5 1306.5,891.5 1306.5,889.5 1308.5,889.5 1308.5,889.5 1308.5,891.5 1310.5,891.5 1310.5,891.5 1310.5,891.5 1313.5,891.5 1313.5,891.5 1313.5,891.5 1314.5,891.5 1314.5,891.5 1314.5,894.5 1315.5,894.5 1315.5,894.5 1315.5,888.5 1317.5,888.5 1317.5,888.5 1317.5,890.5 1319.5,890.5 1319.5,890.5 1319.5,895.5 1320.5,895.5 1320.5,895.5 1320.5,890.5 1321.5,890.5 1321.5,890.5 1321.5,893.5 1323.5,893.5 1323.5,893.5 1323.5,893.5 1325.5,893.5 1325.5,893.5 1325.5,893.5 1326.5,893.5 1326.5,893.5 1326.5,892.5 1329.5,892.5 1329.5,892.5 1329.5,891.5 1331.5,891.5 1331.5,891.5 1331.5,890.5 1332.5,890.5 1332.5,890.5 1332.5,888.5 1334.5,888.5 1334.5,888.5 1334.5,891.5 1335.5,891.5 1335.5,891.5 1335.5,894.5 1338.5,894.5 1338.5,894.5 1338.5,890.5 1340.5,890.5 1340.5,890.5 1340.5,894.5 1342.5,894.5 1342.5,894.5 1342.5,893.5 1344.5,893.5 1344.5,893.5 1344.5,891.5 1346.5,891.5 1346.5,891.5 1346.5,891.5 1347.5,891.5 1347.5,891.5 1347.5,893.5 1349.5,893.5 1349.5,893.5 1349.5,890.5 1351.5,890.5 1351.5,890.5 1351.5,894.5 1352.5,894.5 1352.5,894.5 1352.5,894.5 1354.5,894.5 1354.5,894.5 1354.5,890.5 1355.5,890.5 1355.5,890.5 1355.5,893.5 1358.5,893.5 1358.5,893.5 1358.5,891.5 1360.5,891.5 1360.5,891.5 1360.5,890.5 1361.5,890.5 1361.5,890.5 1361.5,888.5 1362.5,888.5 1362.5,888.5 1362.5,890.5 1364.5,890.5 1364.5,890.5 1364.5,894.5 1365.5,894.5 1365.5,894.5 1365.5,891.5 1366.5,891.5 1366.5,891.5 1366.5,891.5 1368.5,891.5 1368.5,891.5 1368.5,894.5 1370.5,894.5 1370.5,894.5 1370.5,895.5 1372.5,895.5 1372.5,895.5 1372.5,891.5 1373.5,891.5 1373.5,891.5 1373.5,893.5 1376.5,893.5 1376.5,893.5 1376.5,888.5 1378.5,888.5 1378.5,888.5 1378.5,889.5 1381.5,889.5 1381.5,889.5 1381.5,894.5 1382.5,894.5 1382.5,894.5 1382.5,893.5 1383.5,893.5 1383.5,893.5 1383.5,890.5 1384.5,890.5 1384.5,890.5 1384.5,893.5 1387.5,893.5 1387.5,893.5 1387.5,891.5 1389.5,891.5 1389.5,891.5 1389.5,891.5 1390.5,891.5 1390.5,891.5 1390.5,890.5 1393.5,890.5 1393.5,890.5 1393.5,894.5 1394.5,894.5 1394.5,894.5 1394.5,892.5 1396.5,892.5 1396.5,892.5 1396.5,895.5 1397.5,895.5 1397.5,895.5 1397.5,891.5 1400.5,891.5 1400.5,891.5 1400.5,894.5 1402.5,894.5 1402.5,894.5 1402.5,894.5 1403.5,894.5 1403.5,894.5 1403.5,892.5 1404.5,892.5 1404.5,892.5 1404.5,889.5 1406.5,889.5 1406.5,889.5 1406.5,893.5 1408.5,893.5 1408.5,893.5 1408.5,889.5 1409.5,889.5 1409.5,889.5 1409.5,894.5 1410.5,894.5 1410.5,894.5 1410.5,893.5 1413.5,893.5 1413.5,893.5 1413.5,894.5 1414.5,894.5 1414.5,894.5 1414.5,889.5 1417.5,889.5 1417.5,889.5 1417.5,888.5 1419.5,888.5 1419.5,888.5 1419.5,892.5 1421.5,892.5 1421.5,892.5 1421.5,891.5 1422.5,891.5 1422.5,891.5 1422.5,893.5 1423.5,893.5 1423.5,893.5 1423.5,892.5 1424.5,892.5 1424.5,892.5 1424.5,891.5 1425.5,891.5 1425.5,891.5 1425.5,893.5 1427.5,893.5 1427.5,893.5 1427.5,893.5 1428.5,893.5 1428.5,893.5 1428.5,890.5 1431.5,890.5 1431.5,890.5 1431.5,892.5 1434.5,892.5 1434.5,892.5 1434.5,888.5 1435.5,888.5 1435.5,888.5 1435.5,891.5 1436.5,891.5 1436.5,891.5 1436.5,895.5 1437.5,895.5 1437.5,895.5 1437.5,888.5 1438.5,888.5 1438.5,888.5 1438.5,892.5 1440.5,892.5 1440.5,892.5 1440.5,890.5 1441.5,890.5 1441.5,890.5 1441.5,888.5 1442.5,888.5 1442.5,888.5 1442.5,895.5 1444.5,895.5 1444.5,895.5 1444.5,893.5 1446.5,893.5 1446.5,893.5 1446.5,894.5 1447.5,894.5 1447.5,894.5 1447.5,895.5 1448.5,895.5 1448.5,895.5 1448.5,894.5 1450.5,894.5 1450.5,894.5 1450.5,889.5 1452.5,889.5 1452.5,889.5 1452.5,891.5 1453.5,891.5 1453.5,891.5 1453.5,894.5 1454.5,894.5 1454.5,894.5 1454.5,893.5 1456.5,893.5 1456.5,893.5 1456.5,889.5 1457.5,889.5 1457.5,889.5 1457.5,894.5 1460.5,894.5 1460.5,894.5 1460.5,889.5 1462.5,889.5 1462.5,889.5 1462.5,893.5 1464.5,893.5 1464.5,893.5 1464.5,892.5 1466.5,892.5 1466.5,892.5 1466.5,889.5 1467.5,889.5 1467.5,889.5 1467.5,894.5 1470.5,894.5 1470.5,894.5 1470.5,890.5 1472.5,890.5 1472.5,890.5 1472.5,889.5 1473.5,889.5 1473.5,889.5 1473.5,891.5 1474.5,891.5 1474.5,891.5 1474.5,893.5 1477.5,893.5 1477.5,893.5 1477.5,894.5 1478.5,894.5 1478.5,894.5 1478.5,892.5 1480.5,892.5 1480.5,892.5 1480.5,889.5 1483.5,889.5 1483.5,889.5 1483.5,895.5 1486.5,895.5 1486.5,895.5 1486.5,894.5 1489.5,894.5 1489.5,894.5 1489.5,894.5 1490.5,894.5 1490.5,894.5 1490.5,889.5 1491.5,889.5 1491.5,889.5 1491.5,890.5 1492.5,890.5 1492.5,890.5 1492.5,894.5 1493.5,894.5 1493.5,894.5 1493.5,894.5 1494.5,894.5 1494.5,894.5 1494.5,890.5 1496.5,890.5 1496.5,890.5 1496.5,895.5 1498.5,895.5 1498.5,895.5 1498.5,891.5 1500.5,891.5 1500.5,891.5 1500.5,889.5 1502.5,889.5 1502.5,889.5 1502.5,888.5 1505.5,888.5 1505.5,888.5 1505.5,888.5 1507.5,888.5 1507.5,888.5 1507.5,888.5 1509.5,888.5 1509.5,888.5 1509.5,895.5 1511.5,895.5 1511.5,895.5 1511.5,889.5 1513.5,889.5" fill="none" stroke="#ffffff" stroke-width="1.0" stroke-linejoin="round" stroke-linejoin="miter" shape-rendering="crispEdges"/></g></svg>
<svg style="position:absolute;left:0;top:0;pointer-events:none" width="1600" height="1000"><rect x="329.5" y="145.5" width="708.9" height="359.8" rx="13" ry="13" fill="none" stroke="#ffff00" stroke-width="3"/><path d="M1016,857 L1258,857 Q1292,859 1298.5,866 L1298.5,909 Q1292,917 1260,919 L1011,919 Q986,916 979,909 L979,866 Q985,859 1016,857 Z" fill="none" stroke="#ffff00" stroke-width="3"/></svg>
<svg style="position:absolute;left:0;top:0" width="1" height="1"><text x="1059.5" y="509.8" textLength="209.5" lengthAdjust="spacingAndGlyphs" fill="#ffee00" font-size="27" font-weight="bold">NO Oilpressure!</text></svg>
<div style="position:absolute;left:0px;top:963px;width:1600px;height:19px;background:linear-gradient(#f8f8f8,#e8e8e8);"></div>
<div style="position:absolute;left:681px;top:964px;width:919px;height:17px;background:linear-gradient(#dfe5f2,#d2d9ea);"></div>
<div style="position:absolute;left:0px;top:981px;width:1600px;height:1px;background:#c0c0c0"></div>
<div style="position:absolute;left:0px;top:982px;width:1600px;height:16px;background:#f0f0f0;"></div>
<div style="position:absolute;left:0px;top:998px;width:1600px;height:1px;background:#6a6a6a"></div>
<svg style="position:absolute;left:0;top:0" width="1" height="1"><text x="2" y="996" textLength="25" lengthAdjust="spacingAndGlyphs" fill="#111" font-size="11" font-weight="normal" font-family="Liberation Sans" >Ready</text></svg>
<svg style="position:absolute;left:9px;top:966px" width="16" height="16"><rect x="1" y="1" width="13" height="13" fill="#eee" stroke="#333"/><path d="M4,8 L9,4 V6 H13 V10 H9 V12 Z" fill="#20a030"/></svg>
<svg style="position:absolute;left:28px;top:966px" width="16" height="16"><rect x="1" y="1" width="13" height="13" fill="#eee" stroke="#333"/><path d="M12,8 L7,4 V6 H3 V10 H7 V12 Z" fill="#e02020"/></svg>
<svg style="position:absolute;left:47px;top:966px" width="16" height="16"><rect x="1" y="2" width="13" height="12" fill="#fff" stroke="#4a80d0"/><rect x="1" y="2" width="13" height="3" fill="#4a80d0"/><path d="M5,12 L12,5" stroke="#e08020" stroke-width="2"/></svg>
<svg style="position:absolute;left:66px;top:966px" width="16" height="16"><circle cx="6" cy="6" r="4.2" fill="#d8ecff" stroke="#2a7ad8" stroke-width="1.6"/><path d="M9,9 L14,14" stroke="#e09020" stroke-width="2.5"/></svg>
<svg style="position:absolute;left:85px;top:966px" width="16" height="16"><circle cx="6" cy="6" r="4.2" fill="#d8ecff" stroke="#2a7ad8" stroke-width="1.6"/><path d="M9,9 L14,14" stroke="#e09020" stroke-width="2.5"/></svg>
<svg style="position:absolute;left:104px;top:966px" width="16" height="16"><circle cx="6" cy="6" r="4.2" fill="#d8ecff" stroke="#2a7ad8" stroke-width="1.6"/><path d="M4,6 H8" stroke="#222"/><path d="M9,9 L14,14" stroke="#e09020" stroke-width="2.5"/></svg>
<svg style="position:absolute;left:123px;top:966px" width="16" height="16"><circle cx="6" cy="6" r="4.2" fill="#d8ecff" stroke="#2a7ad8" stroke-width="1.6"/><path d="M6,1 V11" stroke="#222" stroke-width="1.5"/><path d="M9,9 L14,14" stroke="#e09020" stroke-width="2.5"/></svg>
<svg style="position:absolute;left:142px;top:966px" width="16" height="16"><rect x="1" y="1" width="10" height="10" fill="#d8ecff" stroke="#333" stroke-dasharray="1 1"/><path d="M9,9 L14,14" stroke="#e09020" stroke-width="2.5"/></svg>
<svg style="position:absolute;left:161px;top:966px" width="16" height="16"><circle cx="6" cy="6" r="4.2" fill="#e8f0ff" stroke="#8ab0e0" stroke-width="1.6"/><path d="M9,9 L14,14" stroke="#e09020" stroke-width="2.5"/></svg>
<svg style="position:absolute;left:180px;top:966px" width="16" height="16"><circle cx="6" cy="6" r="4.2" fill="#d8ecff" stroke="#2a7ad8" stroke-width="1.6"/><path d="M9,9 L14,14" stroke="#e09020" stroke-width="2.5"/></svg>
<svg style="position:absolute;left:199px;top:966px" width="16" height="16"><path d="M3,14 Q1,8 3,5 V2 H5 V7 V1 H7 V7 V2 H9 V8 V4 H11 V10 Q11,14 7,15 Z" fill="#f0c890" stroke="#c08040" stroke-width="0.8"/></svg>
<svg style="position:absolute;left:218px;top:966px" width="16" height="16"><circle cx="8" cy="5" r="4" fill="#d8ecff" stroke="#2a7ad8" stroke-width="1.4"/><path d="M1,12 L6,8 V10 H12 V14 H6 V16 Z" fill="#20a030"/></svg>
<svg style="position:absolute;left:254px;top:966px" width="16" height="16"><circle cx="8" cy="5" r="4" fill="#eee" stroke="#ccc" stroke-width="1.4"/><path d="M14,12 L9,8 V16 Z" fill="#ccc"/></svg>
<svg style="position:absolute;left:290px;top:966px" width="16" height="16"><path d="M5,2 V9 H3 Q2,13 5,14 H12 V10 L9,9 V2 Z" fill="#f0c060" stroke="#a07020" stroke-width="0.8"/><rect x="3" y="13" width="10" height="2" fill="#4060c0"/></svg>
<svg style="position:absolute;left:315px;top:966px" width="16" height="16"><circle cx="5" cy="5" r="3.5" fill="#40b040"/><circle cx="10" cy="10" r="4" fill="#e02020"/><rect x="8" y="9.3" width="4" height="1.5" fill="#fff"/></svg>
<svg style="position:absolute;left:341px;top:966px" width="16" height="16"><rect x="1" y="2" width="14" height="12" fill="#dfe8f8" stroke="#4a80d0"/><rect x="1" y="2" width="14" height="3" fill="#4a80d0"/><path d="M4,9 L7,12 L12,6" stroke="#20a040" stroke-width="2.2" fill="none"/></svg>
<svg style="position:absolute;left:373px;top:966px" width="16" height="16"><path d="M3,3 H10 V7 H3 M3,7 H10 V11 H3" stroke="#2a7ad8" fill="none" stroke-width="1.2"/><path d="M2,14 H14 M12,12 L14,14 L12,16" stroke="#2a7ad8" fill="none"/></svg>
<svg style="position:absolute;left:392px;top:966px" width="16" height="16"><path d="M3,3 H12 M3,7 H12 M3,11 H12" stroke="#2a7ad8" fill="none" stroke-width="1.2"/><path d="M2,14 H14" stroke="#2a7ad8" fill="none"/></svg>
<svg style="position:absolute;left:411px;top:966px" width="16" height="16"><path d="M3,13 V6 Q3,1 8,1 Q13,1 13,6 V13" stroke="#e02020" stroke-width="2.2" fill="none"/><path d="M1,15 H15" stroke="#2a50c0" stroke-dasharray="1 1"/></svg>
<svg style="position:absolute;left:443px;top:966px" width="16" height="16"><path d="M3,13 V6 Q3,1 8,1 Q13,1 13,6 V13" stroke="#e02020" stroke-width="2.2" fill="none"/></svg>
<svg style="position:absolute;left:475px;top:966px" width="16" height="16"><polyline points="1,8 3,4 5,10 7,3 9,9 11,4 13,8 15,6" stroke="#2a7ad8" fill="none"/><path d="M1,13 H15" stroke="#2a7ad8" stroke-dasharray="1 1"/></svg>
<svg style="position:absolute;left:495px;top:966px" width="16" height="16"><rect x="4" y="1" width="11" height="11" fill="#dfe8f8" stroke="#4a80d0"/><path d="M1,4 V15 H12" stroke="#222" fill="none"/></svg>
<svg style="position:absolute;left:513px;top:966px" width="16" height="16"><rect x="0" y="0" width="16" height="16" fill="#d0e4fa" stroke="#6aa0e0"/><path d="M3,2 V13 H14" stroke="#444" fill="none"/><path d="M4,12 L12,4" stroke="#20a040" stroke-width="1.2"/></svg>
<svg style="position:absolute;left:532px;top:966px" width="16" height="16"><circle cx="8" cy="8" r="7" fill="#1a6ad0"/><rect x="7" y="4" width="2.2" height="8" fill="#fff"/></svg>
<svg style="position:absolute;left:551px;top:966px" width="16" height="16"><circle cx="8" cy="8" r="6.5" fill="#f0f0f0" stroke="#999" stroke-width="1.3"/><path d="M8,3 V8 L11,10" stroke="#999" fill="none"/></svg>
<svg style="position:absolute;left:570px;top:966px" width="16" height="16"><rect x="3" y="1" width="11" height="8" fill="#fff" stroke="#333"/><path d="M3,1 H14 V9" fill="none"/><rect x="5" y="3" width="2" height="2" fill="#222"/><rect x="9" y="3" width="2" height="2" fill="#222"/><rect x="7" y="5" width="2" height="2" fill="#222"/><path d="M3,1 V15" stroke="#444" stroke-width="1.5"/></svg>
<svg style="position:absolute;left:589px;top:966px" width="16" height="16"><path d="M9,1 L3,9 H8 L5,15 L13,6 H8 L11,1 Z" fill="#f0c020"/><circle cx="11" cy="11" r="3.5" fill="#d8ecff" stroke="#2a7ad8"/></svg>
<svg style="position:absolute;left:608px;top:966px" width="16" height="16"><path d="M9,1 L3,9 H8 L5,15 L13,6 H8 L11,1 Z" fill="#ccc"/></svg>
<svg style="position:absolute;left:627px;top:966px" width="16" height="16"><path d="M9,1 L3,9 H8 L5,15 L13,6 H8 L11,1 Z" fill="#ccc"/></svg>
<svg style="position:absolute;left:646px;top:966px" width="16" height="16"><circle cx="8" cy="8" r="7" fill="#8a8a8a"/><path d="M5,5 L11,11 M11,5 L5,11" stroke="#fff" stroke-width="2"/></svg>
<svg style="position:absolute;left:665px;top:966px" width="16" height="16"><rect x="1" y="2" width="14" height="12" fill="#fff" stroke="#20a040"/><rect x="1" y="2" width="14" height="3" fill="#20a040"/><polyline points="3,11 6,8 9,10 13,6" stroke="#20a040" fill="none"/></svg>
<div style="position:absolute;left:283px;top:966px;width:1px;height:15px;background:#c8c8c8"></div>
<div style="position:absolute;left:308px;top:966px;width:1px;height:15px;background:#c8c8c8"></div>
<div style="position:absolute;left:334px;top:966px;width:1px;height:15px;background:#c8c8c8"></div>
<div style="position:absolute;left:680px;top:966px;width:1px;height:15px;background:#c8c8c8"></div>
<svg style="position:absolute;left:241px;top:972px" width="6" height="4"><path d="M0,0 H6 L3,3.5 Z" fill="#222"/></svg>
<svg style="position:absolute;left:272px;top:972px" width="6" height="4"><path d="M0,0 H6 L3,3.5 Z" fill="#222"/></svg>
<svg style="position:absolute;left:363px;top:972px" width="6" height="4"><path d="M0,0 H6 L3,3.5 Z" fill="#222"/></svg>
<svg style="position:absolute;left:432px;top:972px" width="6" height="4"><path d="M0,0 H6 L3,3.5 Z" fill="#222"/></svg>
<svg style="position:absolute;left:465px;top:972px" width="6" height="4"><path d="M0,0 H6 L3,3.5 Z" fill="#222"/></svg>
<div style="position:absolute;left:819px;top:935px;width:763px;height:70px;background:#fff;"></div>
<svg style="position:absolute;left:0;top:0" width="1" height="1"><text x="820" y="964.6" textLength="733" lengthAdjust="spacingAndGlyphs" fill="#e81a20" font-size="29" font-weight="bold" font-family="Liberation Sans" >without OIL-P, chain tensioner loosens chain and intake</text></svg>
<svg style="position:absolute;left:0;top:0" width="1" height="1"><text x="820" y="1003.7" textLength="558" lengthAdjust="spacingAndGlyphs" fill="#e81a20" font-size="29" font-weight="bold" font-family="Liberation Sans" >cam has ca. 3...5deg extra floating/offset !</text></svg>
</body></html>
